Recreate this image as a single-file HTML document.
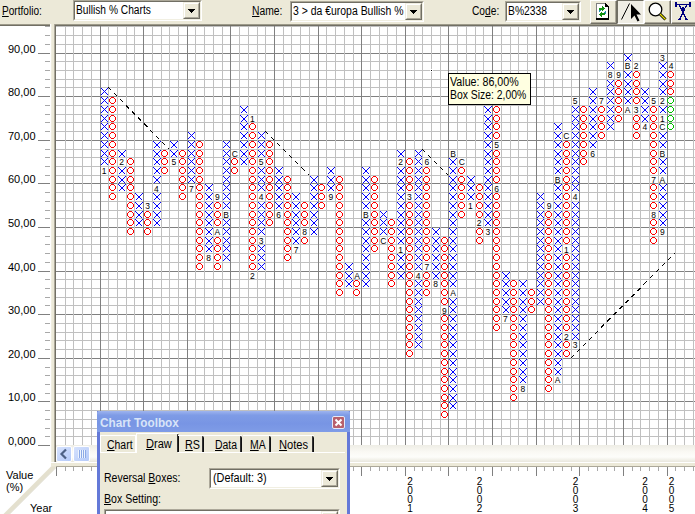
<!DOCTYPE html>
<html><head><meta charset="utf-8">
<style>
*{box-sizing:border-box}
html,body{margin:0;padding:0}
body{width:695px;height:514px;overflow:hidden;position:relative;background:#ECE9D8;font-family:"Liberation Sans",sans-serif;font-size:11px;color:#000}
.a{position:absolute}
.lbl{position:absolute;font-size:12px;line-height:14px;white-space:nowrap;transform-origin:0 0}
.s11{font-size:11px;line-height:13px}
.u{text-decoration:underline}
.combo{position:absolute;background:#fff;border-top:1px solid #ACA899;border-left:1px solid #ACA899;border-right:1px solid #fff;border-bottom:1px solid #fff}
.combo .in{position:absolute;left:0;top:0;right:0;bottom:0;border-top:1px solid #716F64;border-left:1px solid #716F64;border-right:1px solid #F1EFE2;border-bottom:1px solid #F1EFE2}
.combo .txt{position:absolute;left:2px;top:2px;font-size:12px;line-height:14px;white-space:nowrap;transform-origin:0 0}
.dbtn{position:absolute;top:0;right:0;width:17px;bottom:0;background:#ECE9D8;border-top:1px solid #F1EFE2;border-left:1px solid #F1EFE2;border-right:1px solid #716F64;border-bottom:1px solid #716F64}
.dbtn .in2{position:absolute;left:0;top:0;right:0;bottom:0;border-top:1px solid #fff;border-left:1px solid #fff;border-right:1px solid #ACA899;border-bottom:1px solid #ACA899}
.tri{position:absolute;width:0;height:0;border-left:3.5px solid transparent;border-right:3.5px solid transparent;border-top:4px solid #000}
.tb{position:absolute;top:0;height:24px;background:#ECE9D8;border-left:1px solid #fff;border-top:1px solid #fff;border-right:1px solid #716F64;border-bottom:1px solid #716F64}
.tb .in3{position:absolute;left:0;top:0;right:0;bottom:0;border-right:1px solid #ACA899;border-bottom:1px solid #ACA899}
svg{position:absolute;left:0;top:0}
</style></head><body>
<!-- toolbar -->
<div class="a" style="left:0;top:0;width:695px;height:24px;background:#ECE9D8"></div>
<div class="a" style="left:0;top:24px;width:695px;height:1px;background:#9D9A8A"></div>
<div class="a" style="left:0;top:25px;width:695px;height:1px;background:#716F64"></div>

<div class="lbl" style="left:2px;top:4px;transform:scaleX(0.84)"><span class="u">P</span>ortfolio:</div>
<div class="combo" style="left:73px;top:0;width:129px;height:21px"><div class="in"></div>
 <div class="txt" style="transform:scaleX(0.85)">Bullish % Charts</div>
 <div class="dbtn" style="top:1px;right:1px;bottom:1px;width:17px"><div class="in2"></div><svg width="9" height="6" style="left:4px;top:6px"><path d="M0 0h7v1h-1v1h-1v1h-1v1h-1v-1h-1v-1h-1v-1h-1z" fill="#000" shape-rendering="crispEdges"/></svg></div>
</div>
<div class="lbl" style="left:252px;top:4px;transform:scaleX(0.86)"><span class="u">N</span>ame:</div>
<div class="combo" style="left:290px;top:1px;width:134px;height:21px"><div class="in"></div>
 <div class="txt" style="transform:scaleX(0.87)">3 &gt; da €uropa Bullish %</div>
 <div class="dbtn" style="top:1px;right:1px;bottom:1px;width:17px"><div class="in2"></div><svg width="9" height="6" style="left:4px;top:6px"><path d="M0 0h7v1h-1v1h-1v1h-1v1h-1v-1h-1v-1h-1v-1h-1z" fill="#000" shape-rendering="crispEdges"/></svg></div>
</div>
<div class="lbl" style="left:472px;top:4px;transform:scaleX(0.85)">Co<span class="u">d</span>e:</div>
<div class="combo" style="left:505px;top:1px;width:76px;height:21px"><div class="in"></div>
 <div class="txt" style="transform:scaleX(0.86)">B%2338</div>
 <div class="dbtn" style="top:1px;right:1px;bottom:1px;width:17px"><div class="in2"></div><svg width="9" height="6" style="left:4px;top:6px"><path d="M0 0h7v1h-1v1h-1v1h-1v1h-1v-1h-1v-1h-1v-1h-1z" fill="#000" shape-rendering="crispEdges"/></svg></div>
</div>

<!-- toolbar buttons -->
<div class="tb" style="left:590px;width:27px"><div class="in3"></div>
 <svg width="27" height="24" style="left:-1px;top:-1px" shape-rendering="crispEdges">
  <path d="M6 3h9v3h3v13h-12z" fill="#fff"/>
  <path d="M6 3h9v1h-9zM6 4h1v14h-1z" fill="#808080"/>
  <path d="M15 3h1v1h1v1h1v1h1v14h-1v-13h-3zM6 18h13v2h-13z" fill="#000"/>
  <path d="M12 6h1v1h-1zM12 7h1v1h-1zM12 8h1v1h-1zM12 9h1v1h-1zM12 10h1v1h-1zM13 7h1v1h-1zM13 8h1v1h-1zM13 9h1v1h-1zM14 8h1v1h-1zM9 8h1v1h-1zM10 8h1v1h-1zM11 8h1v1h-1zM9 9h1v1h-1zM10 9h1v1h-1zM11 9h1v1h-1zM11 12h1v1h-1zM11 13h1v1h-1zM11 14h1v1h-1zM11 15h1v1h-1zM11 16h1v1h-1zM10 13h1v1h-1zM10 14h1v1h-1zM10 15h1v1h-1zM9 14h1v1h-1zM12 13h1v1h-1zM13 13h1v1h-1zM14 13h1v1h-1zM12 14h1v1h-1zM13 14h1v1h-1zM14 14h1v1h-1z" fill="#109010"/>
  <path d="M9 10h1v1h-1zM9 11h1v1h-1zM10 10h1v1h-1zM15 11h1v1h-1zM15 12h1v1h-1zM15 13h1v1h-1zM14 12h1v1h-1z" fill="#2090A8"/>
 </svg>
</div>
<div class="a" style="left:617px;top:0;width:27px;height:24px;background:#EFEDE4;border-left:1px solid #716F64;border-top:1px solid #716F64;border-right:1px solid #fff;border-bottom:1px solid #fff">
 <svg width="27" height="24" style="left:-1px;top:-1px">
  <path d="M4.5 19.5L12.5 3.5" stroke="#000" stroke-width="1"/>
  <path d="M14 4V19L17.5 15.5L20.5 21.5L22.5 20.5L19.5 14.5H24Z" fill="#000"/>
 </svg>
</div>
<div class="tb" style="left:644px;width:27px"><div class="in3"></div>
 <svg width="27" height="24" style="left:0;top:0">
  <circle cx="10.5" cy="8.5" r="6.3" fill="#fff" stroke="#000" stroke-width="1.3"/>
  <path d="M15 13L20.5 18.5" stroke="#000" stroke-width="3"/>
  <path d="M15 13L20.5 18.5" stroke="#e8e000" stroke-width="1.3"/>
 </svg>
</div>
<div class="tb" style="left:671px;width:26px"><div class="in3"></div>
 <svg width="26" height="24" style="left:-1px;top:-1px"><path d="M4 2h2v1h-2zM18 2h2v1h-2zM4 3h2v1h-2zM18 3h2v1h-2zM4 4h16v1h-16zM4 5h2v1h-2zM8 5h1v1h-1zM15 5h1v1h-1zM18 5h2v1h-2zM4 6h2v1h-2zM8 6h2v1h-2zM14 6h2v1h-2zM18 6h2v1h-2zM9 7h1v1h-1zM11 7h2v1h-2zM14 7h1v1h-1zM9 8h5v1h-5zM10 9h4v1h-4zM10 10h4v1h-4zM11 11h2v1h-2zM11 12h2v1h-2zM11 13h2v1h-2zM10 14h4v1h-4zM10 15h1v1h-1zM13 15h1v1h-1zM9 16h2v1h-2zM13 16h2v1h-2zM9 17h1v1h-1zM14 17h1v1h-1zM8 18h2v1h-2zM14 18h2v1h-2zM7 19h3v1h-3zM14 19h3v1h-3z" fill="#000080" shape-rendering="crispEdges"/></svg>
</div>

<!-- left axis panel -->
<div class="a" style="left:0;top:26px;width:50px;height:436px;background:#fff"></div>
<svg width="695" height="514"><path d="M38 445.5H50 M38 401.5H50 M38 358.5H50 M38 314.5H50 M38 271.5H50 M38 227.5H50 M38 183.5H50 M38 140.5H50 M38 96.5H50 M38 53.5H50" stroke="#808080" stroke-width="1" shape-rendering="crispEdges"/>
<path d="M45 436.5H50 M45 428.5H50 M45 419.5H50 M45 410.5H50 M45 393.5H50 M45 384.5H50 M45 375.5H50 M45 367.5H50 M45 349.5H50 M45 340.5H50 M45 332.5H50 M45 323.5H50 M45 305.5H50 M45 297.5H50 M45 288.5H50 M45 279.5H50 M45 262.5H50 M45 253.5H50 M45 244.5H50 M45 236.5H50 M45 218.5H50 M45 210.5H50 M45 201.5H50 M45 192.5H50 M45 175.5H50 M45 166.5H50 M45 157.5H50 M45 149.5H50 M45 131.5H50 M45 122.5H50 M45 114.5H50 M45 105.5H50 M45 87.5H50 M45 79.5H50 M45 70.5H50 M45 61.5H50 M45 44.5H50 M45 35.5H50 M45 26.5H50" stroke="#a8a8a8" stroke-width="1" shape-rendering="crispEdges"/>
<g font-family='"Liberation Sans", sans-serif' font-size="11" fill="#000" text-anchor="end"><text x="35.5" y="401">10,00</text><text x="35.5" y="358">20,00</text><text x="35.5" y="314">30,00</text><text x="35.5" y="271">40,00</text><text x="35.5" y="227">50,00</text><text x="35.5" y="183">60,00</text><text x="35.5" y="140">70,00</text><text x="35.5" y="96">80,00</text><text x="35.5" y="53">90,00</text><text x="35.5" y="445">0,000</text></g></svg>

<!-- chart -->
<svg width="695" height="514"><rect x="56" y="26" width="639" height="419" fill="#fff"/>
<path d="M56 436.5H695 M56 428.5H695 M56 419.5H695 M56 410.5H695 M56 393.5H695 M56 384.5H695 M56 375.5H695 M56 367.5H695 M56 349.5H695 M56 340.5H695 M56 332.5H695 M56 323.5H695 M56 305.5H695 M56 297.5H695 M56 288.5H695 M56 279.5H695 M56 262.5H695 M56 253.5H695 M56 244.5H695 M56 236.5H695 M56 218.5H695 M56 210.5H695 M56 201.5H695 M56 192.5H695 M56 175.5H695 M56 166.5H695 M56 157.5H695 M56 149.5H695 M56 131.5H695 M56 122.5H695 M56 114.5H695 M56 105.5H695 M56 87.5H695 M56 79.5H695 M56 70.5H695 M56 61.5H695 M56 44.5H695 M56 35.5H695 M56 26.5H695" stroke="#c0c0c0" stroke-width="1" fill="none" shape-rendering="crispEdges"/>
<path d="M56 445.5H695 M56 401.5H695 M56 358.5H695 M56 314.5H695 M56 271.5H695 M56 227.5H695 M56 183.5H695 M56 140.5H695 M56 96.5H695 M56 53.5H695" stroke="#808080" stroke-width="1" fill="none" shape-rendering="crispEdges"/>
<path d="M65.5 26V445 M73.5 26V445 M82.5 26V445 M91.5 26V445 M108.5 26V445 M117.5 26V445 M126.5 26V445 M134.5 26V445 M152.5 26V445 M161.5 26V445 M169.5 26V445 M178.5 26V445 M195.5 26V445 M204.5 26V445 M213.5 26V445 M222.5 26V445 M239.5 26V445 M248.5 26V445 M257.5 26V445 M265.5 26V445 M283.5 26V445 M291.5 26V445 M300.5 26V445 M309.5 26V445 M326.5 26V445 M335.5 26V445 M344.5 26V445 M353.5 26V445 M370.5 26V445 M379.5 26V445 M387.5 26V445 M396.5 26V445 M414.5 26V445 M422.5 26V445 M431.5 26V445 M440.5 26V445 M457.5 26V445 M466.5 26V445 M475.5 26V445 M483.5 26V445 M501.5 26V445 M510.5 26V445 M518.5 26V445 M527.5 26V445 M544.5 26V445 M553.5 26V445 M562.5 26V445 M571.5 26V445 M588.5 26V445 M597.5 26V445 M606.5 26V445 M614.5 26V445 M632.5 26V445 M640.5 26V445 M649.5 26V445 M658.5 26V445 M675.5 26V445 M684.5 26V445 M693.5 26V445" stroke="#c0c0c0" stroke-width="1" fill="none" shape-rendering="crispEdges"/>
<path d="M100.5 26V445 M143.5 26V445 M187.5 26V445 M230.5 26V445 M274.5 26V445 M318.5 26V445 M361.5 26V445 M405.5 26V445 M448.5 26V445 M492.5 26V445 M536.5 26V445 M579.5 26V445 M623.5 26V445 M667.5 26V445" stroke="#808080" stroke-width="1" fill="none" shape-rendering="crispEdges"/>
<path d="M106 159h1v1h-1zM102 159h1v1h-1zM103 162h1v1h-1zM104 161h1v1h-1zM101 158h1v1h-1zM101 164h1v1h-1zM107 158h1v1h-1zM107 164h1v1h-1zM105 160h1v1h-1zM106 163h1v1h-1zM103 160h1v1h-1zM102 163h1v1h-1zM105 162h1v1h-1zM106 155h1v1h-1zM105 152h1v1h-1zM103 152h1v1h-1zM102 155h1v1h-1zM106 151h1v1h-1zM105 154h1v1h-1zM102 151h1v1h-1zM104 153h1v1h-1zM101 150h1v1h-1zM107 150h1v1h-1zM103 154h1v1h-1zM101 156h1v1h-1zM107 156h1v1h-1zM103 143h1v1h-1zM102 146h1v1h-1zM106 142h1v1h-1zM105 145h1v1h-1zM102 142h1v1h-1zM103 145h1v1h-1zM104 144h1v1h-1zM101 141h1v1h-1zM107 141h1v1h-1zM105 143h1v1h-1zM107 147h1v1h-1zM101 147h1v1h-1zM106 146h1v1h-1zM106 133h1v1h-1zM102 133h1v1h-1zM103 136h1v1h-1zM104 135h1v1h-1zM101 132h1v1h-1zM101 138h1v1h-1zM107 132h1v1h-1zM107 138h1v1h-1zM105 134h1v1h-1zM106 137h1v1h-1zM103 134h1v1h-1zM102 137h1v1h-1zM105 136h1v1h-1zM103 127h1v1h-1zM104 126h1v1h-1zM101 123h1v1h-1zM101 129h1v1h-1zM107 123h1v1h-1zM107 129h1v1h-1zM106 124h1v1h-1zM105 125h1v1h-1zM106 128h1v1h-1zM103 125h1v1h-1zM102 128h1v1h-1zM105 127h1v1h-1zM102 124h1v1h-1zM106 120h1v1h-1zM103 117h1v1h-1zM102 120h1v1h-1zM106 116h1v1h-1zM105 119h1v1h-1zM102 116h1v1h-1zM103 119h1v1h-1zM104 118h1v1h-1zM101 121h1v1h-1zM101 115h1v1h-1zM107 115h1v1h-1zM105 117h1v1h-1zM107 121h1v1h-1zM102 111h1v1h-1zM105 110h1v1h-1zM106 107h1v1h-1zM102 107h1v1h-1zM103 110h1v1h-1zM104 109h1v1h-1zM101 106h1v1h-1zM101 112h1v1h-1zM107 106h1v1h-1zM107 112h1v1h-1zM105 108h1v1h-1zM106 111h1v1h-1zM103 108h1v1h-1zM103 101h1v1h-1zM104 100h1v1h-1zM101 97h1v1h-1zM101 103h1v1h-1zM107 97h1v1h-1zM107 103h1v1h-1zM106 98h1v1h-1zM105 99h1v1h-1zM106 102h1v1h-1zM103 99h1v1h-1zM102 102h1v1h-1zM105 101h1v1h-1zM102 98h1v1h-1zM103 92h1v1h-1zM101 88h1v1h-1zM101 94h1v1h-1zM107 88h1v1h-1zM107 94h1v1h-1zM106 93h1v1h-1zM105 90h1v1h-1zM102 93h1v1h-1zM106 89h1v1h-1zM103 90h1v1h-1zM105 92h1v1h-1zM102 89h1v1h-1zM104 91h1v1h-1zM121 187h1v1h-1zM118 184h1v1h-1zM122 188h1v1h-1zM120 186h1v1h-1zM124 190h1v1h-1zM119 190h1v1h-1zM120 189h1v1h-1zM123 186h1v1h-1zM123 189h1v1h-1zM122 187h1v1h-1zM121 188h1v1h-1zM124 185h1v1h-1zM119 185h1v1h-1zM125 184h1v1h-1zM123 181h1v1h-1zM122 179h1v1h-1zM125 176h1v1h-1zM121 180h1v1h-1zM124 177h1v1h-1zM119 177h1v1h-1zM121 179h1v1h-1zM118 176h1v1h-1zM122 180h1v1h-1zM124 182h1v1h-1zM120 181h1v1h-1zM120 178h1v1h-1zM123 178h1v1h-1zM119 182h1v1h-1zM125 167h1v1h-1zM121 171h1v1h-1zM124 168h1v1h-1zM119 168h1v1h-1zM121 170h1v1h-1zM118 167h1v1h-1zM122 171h1v1h-1zM120 169h1v1h-1zM120 172h1v1h-1zM123 169h1v1h-1zM119 173h1v1h-1zM124 173h1v1h-1zM123 172h1v1h-1zM122 170h1v1h-1zM120 152h1v1h-1zM123 152h1v1h-1zM124 156h1v1h-1zM119 156h1v1h-1zM123 155h1v1h-1zM122 153h1v1h-1zM125 150h1v1h-1zM121 154h1v1h-1zM124 151h1v1h-1zM119 151h1v1h-1zM121 153h1v1h-1zM118 150h1v1h-1zM122 154h1v1h-1zM120 155h1v1h-1zM142 219h1v1h-1zM138 223h1v1h-1zM141 220h1v1h-1zM136 220h1v1h-1zM138 222h1v1h-1zM135 219h1v1h-1zM139 222h1v1h-1zM137 221h1v1h-1zM137 224h1v1h-1zM140 221h1v1h-1zM141 225h1v1h-1zM136 225h1v1h-1zM140 224h1v1h-1zM139 223h1v1h-1zM137 213h1v1h-1zM141 217h1v1h-1zM136 217h1v1h-1zM137 216h1v1h-1zM140 216h1v1h-1zM140 213h1v1h-1zM138 215h1v1h-1zM139 215h1v1h-1zM139 214h1v1h-1zM141 212h1v1h-1zM136 212h1v1h-1zM142 211h1v1h-1zM138 214h1v1h-1zM135 211h1v1h-1zM140 207h1v1h-1zM142 202h1v1h-1zM138 206h1v1h-1zM139 206h1v1h-1zM141 203h1v1h-1zM136 203h1v1h-1zM138 205h1v1h-1zM135 202h1v1h-1zM139 205h1v1h-1zM137 207h1v1h-1zM141 208h1v1h-1zM137 204h1v1h-1zM140 204h1v1h-1zM136 208h1v1h-1zM139 197h1v1h-1zM141 199h1v1h-1zM142 193h1v1h-1zM141 194h1v1h-1zM136 194h1v1h-1zM138 196h1v1h-1zM135 193h1v1h-1zM139 196h1v1h-1zM137 195h1v1h-1zM136 199h1v1h-1zM137 198h1v1h-1zM140 195h1v1h-1zM140 198h1v1h-1zM138 197h1v1h-1zM153 219h1v1h-1zM157 223h1v1h-1zM160 219h1v1h-1zM158 221h1v1h-1zM159 225h1v1h-1zM156 222h1v1h-1zM154 225h1v1h-1zM158 224h1v1h-1zM157 222h1v1h-1zM155 221h1v1h-1zM155 224h1v1h-1zM159 220h1v1h-1zM154 220h1v1h-1zM156 223h1v1h-1zM155 216h1v1h-1zM155 213h1v1h-1zM159 212h1v1h-1zM154 212h1v1h-1zM160 211h1v1h-1zM156 215h1v1h-1zM153 211h1v1h-1zM157 215h1v1h-1zM159 217h1v1h-1zM154 217h1v1h-1zM156 214h1v1h-1zM158 216h1v1h-1zM157 214h1v1h-1zM158 213h1v1h-1zM159 203h1v1h-1zM154 203h1v1h-1zM153 202h1v1h-1zM160 202h1v1h-1zM156 206h1v1h-1zM158 207h1v1h-1zM157 206h1v1h-1zM159 208h1v1h-1zM154 208h1v1h-1zM156 205h1v1h-1zM158 204h1v1h-1zM157 205h1v1h-1zM155 204h1v1h-1zM155 207h1v1h-1zM154 194h1v1h-1zM156 197h1v1h-1zM153 193h1v1h-1zM157 197h1v1h-1zM160 193h1v1h-1zM158 195h1v1h-1zM159 199h1v1h-1zM156 196h1v1h-1zM154 199h1v1h-1zM158 198h1v1h-1zM157 196h1v1h-1zM155 195h1v1h-1zM155 198h1v1h-1zM159 194h1v1h-1zM155 181h1v1h-1zM159 177h1v1h-1zM154 177h1v1h-1zM153 176h1v1h-1zM158 178h1v1h-1zM157 180h1v1h-1zM160 176h1v1h-1zM156 180h1v1h-1zM159 182h1v1h-1zM154 182h1v1h-1zM156 179h1v1h-1zM158 181h1v1h-1zM157 179h1v1h-1zM155 178h1v1h-1zM159 168h1v1h-1zM154 168h1v1h-1zM156 171h1v1h-1zM153 167h1v1h-1zM157 171h1v1h-1zM160 167h1v1h-1zM158 169h1v1h-1zM159 173h1v1h-1zM156 170h1v1h-1zM154 173h1v1h-1zM158 172h1v1h-1zM157 170h1v1h-1zM155 169h1v1h-1zM155 172h1v1h-1zM156 162h1v1h-1zM153 158h1v1h-1zM157 162h1v1h-1zM159 164h1v1h-1zM160 158h1v1h-1zM154 164h1v1h-1zM158 160h1v1h-1zM156 161h1v1h-1zM158 163h1v1h-1zM157 161h1v1h-1zM155 160h1v1h-1zM155 163h1v1h-1zM159 159h1v1h-1zM154 159h1v1h-1zM155 152h1v1h-1zM159 156h1v1h-1zM155 155h1v1h-1zM159 151h1v1h-1zM154 151h1v1h-1zM153 150h1v1h-1zM157 154h1v1h-1zM160 150h1v1h-1zM156 154h1v1h-1zM158 152h1v1h-1zM154 156h1v1h-1zM156 153h1v1h-1zM158 155h1v1h-1zM157 153h1v1h-1zM159 142h1v1h-1zM154 142h1v1h-1zM156 145h1v1h-1zM153 141h1v1h-1zM157 145h1v1h-1zM160 141h1v1h-1zM158 143h1v1h-1zM159 147h1v1h-1zM156 144h1v1h-1zM154 147h1v1h-1zM158 146h1v1h-1zM157 144h1v1h-1zM155 143h1v1h-1zM155 146h1v1h-1zM174 153h1v1h-1zM172 152h1v1h-1zM172 155h1v1h-1zM176 151h1v1h-1zM171 151h1v1h-1zM173 154h1v1h-1zM170 150h1v1h-1zM174 154h1v1h-1zM177 150h1v1h-1zM176 156h1v1h-1zM175 152h1v1h-1zM171 156h1v1h-1zM173 153h1v1h-1zM175 155h1v1h-1zM172 146h1v1h-1zM176 142h1v1h-1zM171 142h1v1h-1zM173 145h1v1h-1zM170 141h1v1h-1zM174 145h1v1h-1zM176 147h1v1h-1zM177 141h1v1h-1zM171 147h1v1h-1zM175 143h1v1h-1zM173 144h1v1h-1zM175 146h1v1h-1zM174 144h1v1h-1zM172 143h1v1h-1zM190 178h1v1h-1zM189 181h1v1h-1zM192 180h1v1h-1zM189 177h1v1h-1zM190 180h1v1h-1zM191 179h1v1h-1zM193 181h1v1h-1zM193 177h1v1h-1zM188 176h1v1h-1zM194 176h1v1h-1zM192 178h1v1h-1zM188 182h1v1h-1zM194 182h1v1h-1zM192 171h1v1h-1zM189 168h1v1h-1zM190 171h1v1h-1zM193 172h1v1h-1zM191 170h1v1h-1zM193 168h1v1h-1zM188 167h1v1h-1zM194 167h1v1h-1zM194 173h1v1h-1zM188 173h1v1h-1zM192 169h1v1h-1zM190 169h1v1h-1zM189 172h1v1h-1zM190 162h1v1h-1zM191 161h1v1h-1zM193 159h1v1h-1zM188 158h1v1h-1zM194 158h1v1h-1zM194 164h1v1h-1zM188 164h1v1h-1zM192 160h1v1h-1zM190 160h1v1h-1zM189 163h1v1h-1zM192 162h1v1h-1zM189 159h1v1h-1zM193 163h1v1h-1zM190 152h1v1h-1zM189 155h1v1h-1zM192 154h1v1h-1zM189 151h1v1h-1zM190 154h1v1h-1zM191 153h1v1h-1zM193 155h1v1h-1zM193 151h1v1h-1zM188 150h1v1h-1zM194 150h1v1h-1zM192 152h1v1h-1zM188 156h1v1h-1zM194 156h1v1h-1zM190 143h1v1h-1zM189 146h1v1h-1zM192 145h1v1h-1zM189 142h1v1h-1zM190 145h1v1h-1zM193 146h1v1h-1zM191 144h1v1h-1zM193 142h1v1h-1zM188 141h1v1h-1zM194 141h1v1h-1zM194 147h1v1h-1zM188 147h1v1h-1zM192 143h1v1h-1zM189 133h1v1h-1zM193 137h1v1h-1zM190 136h1v1h-1zM191 135h1v1h-1zM193 133h1v1h-1zM188 132h1v1h-1zM194 132h1v1h-1zM194 138h1v1h-1zM188 138h1v1h-1zM192 134h1v1h-1zM190 134h1v1h-1zM189 137h1v1h-1zM192 136h1v1h-1zM208 248h1v1h-1zM207 250h1v1h-1zM209 248h1v1h-1zM211 251h1v1h-1zM206 251h1v1h-1zM212 245h1v1h-1zM210 247h1v1h-1zM210 250h1v1h-1zM208 249h1v1h-1zM207 247h1v1h-1zM205 245h1v1h-1zM209 249h1v1h-1zM211 246h1v1h-1zM206 246h1v1h-1zM210 242h1v1h-1zM211 243h1v1h-1zM207 239h1v1h-1zM207 242h1v1h-1zM208 241h1v1h-1zM205 237h1v1h-1zM209 241h1v1h-1zM211 238h1v1h-1zM206 238h1v1h-1zM208 240h1v1h-1zM209 240h1v1h-1zM212 237h1v1h-1zM210 239h1v1h-1zM206 243h1v1h-1zM205 228h1v1h-1zM209 232h1v1h-1zM207 233h1v1h-1zM208 232h1v1h-1zM211 229h1v1h-1zM206 229h1v1h-1zM211 234h1v1h-1zM208 231h1v1h-1zM209 231h1v1h-1zM212 228h1v1h-1zM210 230h1v1h-1zM206 234h1v1h-1zM210 233h1v1h-1zM207 230h1v1h-1zM208 222h1v1h-1zM209 222h1v1h-1zM211 225h1v1h-1zM206 225h1v1h-1zM212 219h1v1h-1zM207 224h1v1h-1zM210 221h1v1h-1zM210 224h1v1h-1zM208 223h1v1h-1zM207 221h1v1h-1zM205 219h1v1h-1zM209 223h1v1h-1zM211 220h1v1h-1zM206 220h1v1h-1zM210 213h1v1h-1zM211 217h1v1h-1zM206 217h1v1h-1zM210 216h1v1h-1zM207 213h1v1h-1zM207 216h1v1h-1zM208 215h1v1h-1zM205 211h1v1h-1zM209 215h1v1h-1zM211 212h1v1h-1zM206 212h1v1h-1zM208 214h1v1h-1zM209 214h1v1h-1zM212 211h1v1h-1zM208 206h1v1h-1zM207 204h1v1h-1zM205 202h1v1h-1zM209 206h1v1h-1zM207 207h1v1h-1zM211 203h1v1h-1zM206 203h1v1h-1zM208 205h1v1h-1zM209 205h1v1h-1zM206 208h1v1h-1zM212 202h1v1h-1zM210 204h1v1h-1zM211 208h1v1h-1zM210 207h1v1h-1zM211 194h1v1h-1zM206 194h1v1h-1zM207 198h1v1h-1zM208 196h1v1h-1zM209 196h1v1h-1zM211 199h1v1h-1zM206 199h1v1h-1zM212 193h1v1h-1zM210 195h1v1h-1zM210 198h1v1h-1zM208 197h1v1h-1zM207 195h1v1h-1zM205 193h1v1h-1zM209 197h1v1h-1zM209 187h1v1h-1zM208 187h1v1h-1zM211 190h1v1h-1zM206 190h1v1h-1zM212 184h1v1h-1zM210 186h1v1h-1zM210 189h1v1h-1zM207 189h1v1h-1zM208 188h1v1h-1zM207 186h1v1h-1zM205 184h1v1h-1zM209 188h1v1h-1zM211 185h1v1h-1zM206 185h1v1h-1zM227 258h1v1h-1zM229 254h1v1h-1zM228 255h1v1h-1zM229 260h1v1h-1zM226 257h1v1h-1zM223 254h1v1h-1zM225 258h1v1h-1zM225 256h1v1h-1zM224 259h1v1h-1zM223 260h1v1h-1zM227 256h1v1h-1zM224 255h1v1h-1zM228 259h1v1h-1zM226 248h1v1h-1zM223 245h1v1h-1zM223 251h1v1h-1zM225 247h1v1h-1zM224 250h1v1h-1zM229 251h1v1h-1zM227 247h1v1h-1zM224 246h1v1h-1zM228 250h1v1h-1zM228 246h1v1h-1zM227 249h1v1h-1zM229 245h1v1h-1zM225 249h1v1h-1zM223 243h1v1h-1zM224 238h1v1h-1zM228 242h1v1h-1zM229 237h1v1h-1zM225 241h1v1h-1zM228 238h1v1h-1zM227 241h1v1h-1zM229 243h1v1h-1zM226 240h1v1h-1zM223 237h1v1h-1zM225 239h1v1h-1zM224 242h1v1h-1zM227 239h1v1h-1zM224 229h1v1h-1zM225 232h1v1h-1zM228 233h1v1h-1zM227 232h1v1h-1zM229 228h1v1h-1zM228 229h1v1h-1zM229 234h1v1h-1zM226 231h1v1h-1zM223 228h1v1h-1zM223 234h1v1h-1zM225 230h1v1h-1zM224 233h1v1h-1zM227 230h1v1h-1zM227 223h1v1h-1zM229 219h1v1h-1zM229 225h1v1h-1zM226 222h1v1h-1zM225 223h1v1h-1zM223 219h1v1h-1zM223 225h1v1h-1zM225 221h1v1h-1zM224 224h1v1h-1zM227 221h1v1h-1zM224 220h1v1h-1zM228 224h1v1h-1zM228 220h1v1h-1zM224 203h1v1h-1zM225 206h1v1h-1zM228 207h1v1h-1zM227 206h1v1h-1zM229 202h1v1h-1zM228 203h1v1h-1zM229 208h1v1h-1zM226 205h1v1h-1zM223 202h1v1h-1zM223 208h1v1h-1zM225 204h1v1h-1zM224 207h1v1h-1zM227 204h1v1h-1zM228 194h1v1h-1zM227 197h1v1h-1zM229 193h1v1h-1zM225 197h1v1h-1zM229 199h1v1h-1zM226 196h1v1h-1zM223 193h1v1h-1zM223 199h1v1h-1zM225 195h1v1h-1zM224 198h1v1h-1zM227 195h1v1h-1zM224 194h1v1h-1zM228 198h1v1h-1zM229 190h1v1h-1zM226 187h1v1h-1zM223 184h1v1h-1zM223 190h1v1h-1zM225 186h1v1h-1zM224 189h1v1h-1zM224 185h1v1h-1zM227 186h1v1h-1zM228 189h1v1h-1zM225 188h1v1h-1zM228 185h1v1h-1zM227 188h1v1h-1zM229 184h1v1h-1zM227 178h1v1h-1zM224 177h1v1h-1zM225 180h1v1h-1zM228 181h1v1h-1zM227 180h1v1h-1zM229 176h1v1h-1zM228 177h1v1h-1zM229 182h1v1h-1zM226 179h1v1h-1zM223 176h1v1h-1zM223 182h1v1h-1zM225 178h1v1h-1zM224 181h1v1h-1zM225 171h1v1h-1zM228 172h1v1h-1zM228 168h1v1h-1zM227 171h1v1h-1zM229 167h1v1h-1zM229 173h1v1h-1zM226 170h1v1h-1zM223 167h1v1h-1zM223 173h1v1h-1zM225 169h1v1h-1zM224 172h1v1h-1zM224 168h1v1h-1zM227 169h1v1h-1zM228 159h1v1h-1zM227 162h1v1h-1zM229 158h1v1h-1zM229 164h1v1h-1zM226 161h1v1h-1zM223 158h1v1h-1zM223 164h1v1h-1zM225 160h1v1h-1zM224 163h1v1h-1zM224 159h1v1h-1zM227 160h1v1h-1zM228 163h1v1h-1zM225 162h1v1h-1zM227 152h1v1h-1zM224 151h1v1h-1zM225 154h1v1h-1zM228 155h1v1h-1zM228 151h1v1h-1zM227 154h1v1h-1zM229 150h1v1h-1zM229 156h1v1h-1zM226 153h1v1h-1zM223 150h1v1h-1zM223 156h1v1h-1zM225 152h1v1h-1zM224 155h1v1h-1zM225 145h1v1h-1zM228 146h1v1h-1zM228 142h1v1h-1zM227 145h1v1h-1zM229 141h1v1h-1zM229 147h1v1h-1zM226 144h1v1h-1zM223 141h1v1h-1zM223 147h1v1h-1zM225 143h1v1h-1zM224 146h1v1h-1zM224 142h1v1h-1zM227 143h1v1h-1zM243 162h1v1h-1zM244 162h1v1h-1zM246 164h1v1h-1zM241 164h1v1h-1zM247 158h1v1h-1zM243 161h1v1h-1zM240 158h1v1h-1zM244 161h1v1h-1zM242 163h1v1h-1zM242 160h1v1h-1zM246 159h1v1h-1zM241 159h1v1h-1zM245 163h1v1h-1zM245 160h1v1h-1zM242 152h1v1h-1zM242 155h1v1h-1zM244 153h1v1h-1zM245 152h1v1h-1zM246 151h1v1h-1zM241 151h1v1h-1zM245 155h1v1h-1zM243 154h1v1h-1zM244 154h1v1h-1zM246 156h1v1h-1zM241 156h1v1h-1zM247 150h1v1h-1zM243 153h1v1h-1zM240 150h1v1h-1zM245 143h1v1h-1zM245 146h1v1h-1zM243 145h1v1h-1zM244 145h1v1h-1zM246 147h1v1h-1zM241 147h1v1h-1zM247 141h1v1h-1zM243 144h1v1h-1zM244 144h1v1h-1zM240 141h1v1h-1zM242 143h1v1h-1zM242 146h1v1h-1zM246 142h1v1h-1zM241 142h1v1h-1zM243 136h1v1h-1zM244 136h1v1h-1zM246 138h1v1h-1zM241 138h1v1h-1zM247 132h1v1h-1zM243 135h1v1h-1zM240 132h1v1h-1zM244 135h1v1h-1zM242 137h1v1h-1zM242 134h1v1h-1zM246 133h1v1h-1zM241 133h1v1h-1zM245 137h1v1h-1zM245 134h1v1h-1zM244 127h1v1h-1zM246 129h1v1h-1zM241 129h1v1h-1zM243 126h1v1h-1zM240 123h1v1h-1zM244 126h1v1h-1zM242 128h1v1h-1zM242 125h1v1h-1zM245 125h1v1h-1zM243 127h1v1h-1zM246 124h1v1h-1zM241 124h1v1h-1zM245 128h1v1h-1zM247 123h1v1h-1zM246 116h1v1h-1zM241 116h1v1h-1zM245 120h1v1h-1zM242 120h1v1h-1zM245 117h1v1h-1zM243 119h1v1h-1zM244 119h1v1h-1zM246 121h1v1h-1zM241 121h1v1h-1zM247 115h1v1h-1zM243 118h1v1h-1zM244 118h1v1h-1zM240 115h1v1h-1zM242 117h1v1h-1zM245 108h1v1h-1zM243 110h1v1h-1zM244 110h1v1h-1zM246 112h1v1h-1zM241 112h1v1h-1zM247 106h1v1h-1zM243 109h1v1h-1zM240 106h1v1h-1zM244 109h1v1h-1zM242 111h1v1h-1zM242 108h1v1h-1zM246 107h1v1h-1zM241 107h1v1h-1zM245 111h1v1h-1zM264 263h1v1h-1zM263 264h1v1h-1zM262 267h1v1h-1zM260 267h1v1h-1zM259 264h1v1h-1zM258 263h1v1h-1zM262 265h1v1h-1zM258 269h1v1h-1zM261 266h1v1h-1zM263 268h1v1h-1zM260 265h1v1h-1zM264 269h1v1h-1zM259 268h1v1h-1zM263 255h1v1h-1zM260 258h1v1h-1zM259 255h1v1h-1zM258 254h1v1h-1zM258 260h1v1h-1zM260 256h1v1h-1zM262 256h1v1h-1zM261 257h1v1h-1zM263 259h1v1h-1zM264 254h1v1h-1zM264 260h1v1h-1zM262 258h1v1h-1zM259 259h1v1h-1zM258 245h1v1h-1zM258 251h1v1h-1zM261 248h1v1h-1zM262 247h1v1h-1zM263 250h1v1h-1zM264 245h1v1h-1zM260 247h1v1h-1zM263 246h1v1h-1zM262 249h1v1h-1zM259 250h1v1h-1zM259 246h1v1h-1zM264 251h1v1h-1zM260 249h1v1h-1zM263 229h1v1h-1zM260 232h1v1h-1zM259 229h1v1h-1zM258 228h1v1h-1zM258 234h1v1h-1zM262 230h1v1h-1zM259 233h1v1h-1zM261 231h1v1h-1zM263 233h1v1h-1zM260 230h1v1h-1zM264 234h1v1h-1zM262 232h1v1h-1zM264 228h1v1h-1zM260 223h1v1h-1zM262 223h1v1h-1zM258 219h1v1h-1zM258 225h1v1h-1zM261 222h1v1h-1zM262 221h1v1h-1zM264 225h1v1h-1zM263 224h1v1h-1zM259 224h1v1h-1zM260 221h1v1h-1zM263 220h1v1h-1zM264 219h1v1h-1zM259 220h1v1h-1zM263 216h1v1h-1zM260 213h1v1h-1zM264 211h1v1h-1zM259 216h1v1h-1zM264 217h1v1h-1zM263 212h1v1h-1zM262 215h1v1h-1zM260 215h1v1h-1zM259 212h1v1h-1zM258 211h1v1h-1zM262 213h1v1h-1zM258 217h1v1h-1zM261 214h1v1h-1zM262 206h1v1h-1zM259 207h1v1h-1zM263 203h1v1h-1zM260 206h1v1h-1zM259 203h1v1h-1zM258 202h1v1h-1zM258 208h1v1h-1zM264 202h1v1h-1zM262 204h1v1h-1zM261 205h1v1h-1zM263 207h1v1h-1zM260 204h1v1h-1zM264 208h1v1h-1zM258 184h1v1h-1zM258 190h1v1h-1zM261 187h1v1h-1zM262 186h1v1h-1zM263 189h1v1h-1zM264 184h1v1h-1zM259 189h1v1h-1zM260 186h1v1h-1zM263 185h1v1h-1zM262 188h1v1h-1zM264 190h1v1h-1zM259 185h1v1h-1zM260 188h1v1h-1zM264 176h1v1h-1zM260 178h1v1h-1zM262 180h1v1h-1zM259 181h1v1h-1zM264 182h1v1h-1zM259 177h1v1h-1zM263 177h1v1h-1zM260 180h1v1h-1zM258 176h1v1h-1zM258 182h1v1h-1zM262 178h1v1h-1zM261 179h1v1h-1zM263 181h1v1h-1zM259 168h1v1h-1zM259 172h1v1h-1zM260 171h1v1h-1zM258 167h1v1h-1zM258 173h1v1h-1zM261 170h1v1h-1zM262 169h1v1h-1zM264 167h1v1h-1zM264 173h1v1h-1zM263 172h1v1h-1zM260 169h1v1h-1zM263 168h1v1h-1zM262 171h1v1h-1zM261 153h1v1h-1zM263 155h1v1h-1zM260 152h1v1h-1zM264 150h1v1h-1zM262 154h1v1h-1zM259 155h1v1h-1zM264 156h1v1h-1zM259 151h1v1h-1zM263 151h1v1h-1zM260 154h1v1h-1zM258 150h1v1h-1zM258 156h1v1h-1zM262 152h1v1h-1zM263 142h1v1h-1zM262 145h1v1h-1zM259 146h1v1h-1zM264 147h1v1h-1zM259 142h1v1h-1zM260 145h1v1h-1zM258 141h1v1h-1zM258 147h1v1h-1zM261 144h1v1h-1zM262 143h1v1h-1zM264 141h1v1h-1zM263 146h1v1h-1zM260 143h1v1h-1zM260 136h1v1h-1zM258 132h1v1h-1zM258 138h1v1h-1zM261 135h1v1h-1zM262 134h1v1h-1zM263 137h1v1h-1zM264 132h1v1h-1zM259 137h1v1h-1zM264 138h1v1h-1zM260 134h1v1h-1zM263 133h1v1h-1zM262 136h1v1h-1zM259 133h1v1h-1zM277 204h1v1h-1zM279 206h1v1h-1zM281 203h1v1h-1zM277 207h1v1h-1zM276 203h1v1h-1zM278 206h1v1h-1zM275 202h1v1h-1zM279 205h1v1h-1zM281 208h1v1h-1zM282 202h1v1h-1zM278 205h1v1h-1zM276 208h1v1h-1zM280 204h1v1h-1zM280 207h1v1h-1zM276 194h1v1h-1zM279 196h1v1h-1zM278 197h1v1h-1zM275 193h1v1h-1zM281 199h1v1h-1zM282 193h1v1h-1zM278 196h1v1h-1zM276 199h1v1h-1zM280 195h1v1h-1zM277 198h1v1h-1zM280 198h1v1h-1zM277 195h1v1h-1zM279 197h1v1h-1zM281 194h1v1h-1zM279 187h1v1h-1zM282 184h1v1h-1zM278 188h1v1h-1zM281 190h1v1h-1zM276 190h1v1h-1zM278 187h1v1h-1zM280 189h1v1h-1zM280 186h1v1h-1zM277 189h1v1h-1zM277 186h1v1h-1zM279 188h1v1h-1zM281 185h1v1h-1zM276 185h1v1h-1zM275 184h1v1h-1zM280 181h1v1h-1zM277 178h1v1h-1zM279 180h1v1h-1zM281 177h1v1h-1zM277 181h1v1h-1zM276 177h1v1h-1zM278 180h1v1h-1zM275 176h1v1h-1zM279 179h1v1h-1zM281 182h1v1h-1zM282 176h1v1h-1zM278 179h1v1h-1zM276 182h1v1h-1zM280 178h1v1h-1zM279 171h1v1h-1zM281 168h1v1h-1zM276 168h1v1h-1zM279 170h1v1h-1zM278 171h1v1h-1zM275 167h1v1h-1zM281 173h1v1h-1zM282 167h1v1h-1zM278 170h1v1h-1zM276 173h1v1h-1zM280 169h1v1h-1zM277 172h1v1h-1zM280 172h1v1h-1zM277 169h1v1h-1zM297 242h1v1h-1zM295 241h1v1h-1zM294 239h1v1h-1zM296 241h1v1h-1zM294 242h1v1h-1zM298 238h1v1h-1zM293 238h1v1h-1zM295 240h1v1h-1zM292 237h1v1h-1zM296 240h1v1h-1zM298 243h1v1h-1zM293 243h1v1h-1zM299 237h1v1h-1zM297 239h1v1h-1zM296 232h1v1h-1zM298 229h1v1h-1zM293 229h1v1h-1zM294 233h1v1h-1zM295 231h1v1h-1zM292 228h1v1h-1zM296 231h1v1h-1zM298 234h1v1h-1zM293 234h1v1h-1zM299 228h1v1h-1zM297 230h1v1h-1zM297 233h1v1h-1zM295 232h1v1h-1zM294 230h1v1h-1zM295 222h1v1h-1zM296 222h1v1h-1zM292 219h1v1h-1zM298 225h1v1h-1zM293 225h1v1h-1zM299 219h1v1h-1zM297 221h1v1h-1zM294 224h1v1h-1zM297 224h1v1h-1zM295 223h1v1h-1zM294 221h1v1h-1zM296 223h1v1h-1zM298 220h1v1h-1zM293 220h1v1h-1zM296 214h1v1h-1zM297 213h1v1h-1zM297 216h1v1h-1zM295 215h1v1h-1zM294 213h1v1h-1zM296 215h1v1h-1zM294 216h1v1h-1zM298 212h1v1h-1zM293 212h1v1h-1zM295 214h1v1h-1zM292 211h1v1h-1zM298 217h1v1h-1zM293 217h1v1h-1zM299 211h1v1h-1zM297 207h1v1h-1zM295 206h1v1h-1zM294 204h1v1h-1zM296 206h1v1h-1zM298 203h1v1h-1zM293 203h1v1h-1zM294 207h1v1h-1zM295 205h1v1h-1zM292 202h1v1h-1zM296 205h1v1h-1zM298 208h1v1h-1zM293 208h1v1h-1zM299 202h1v1h-1zM297 204h1v1h-1zM298 194h1v1h-1zM293 194h1v1h-1zM295 196h1v1h-1zM296 196h1v1h-1zM292 193h1v1h-1zM298 199h1v1h-1zM293 199h1v1h-1zM299 193h1v1h-1zM297 198h1v1h-1zM297 195h1v1h-1zM294 198h1v1h-1zM295 197h1v1h-1zM294 195h1v1h-1zM296 197h1v1h-1zM315 233h1v1h-1zM313 232h1v1h-1zM314 232h1v1h-1zM316 229h1v1h-1zM311 229h1v1h-1zM317 228h1v1h-1zM314 231h1v1h-1zM313 231h1v1h-1zM310 228h1v1h-1zM312 230h1v1h-1zM316 234h1v1h-1zM311 234h1v1h-1zM312 233h1v1h-1zM315 230h1v1h-1zM314 223h1v1h-1zM316 220h1v1h-1zM311 220h1v1h-1zM317 219h1v1h-1zM313 222h1v1h-1zM310 219h1v1h-1zM314 222h1v1h-1zM312 221h1v1h-1zM316 225h1v1h-1zM311 225h1v1h-1zM312 224h1v1h-1zM315 224h1v1h-1zM315 221h1v1h-1zM313 223h1v1h-1zM312 216h1v1h-1zM315 213h1v1h-1zM315 216h1v1h-1zM313 215h1v1h-1zM314 215h1v1h-1zM316 212h1v1h-1zM311 212h1v1h-1zM317 211h1v1h-1zM314 214h1v1h-1zM313 214h1v1h-1zM310 211h1v1h-1zM312 213h1v1h-1zM316 217h1v1h-1zM311 217h1v1h-1zM315 204h1v1h-1zM315 207h1v1h-1zM313 206h1v1h-1zM314 206h1v1h-1zM316 203h1v1h-1zM311 203h1v1h-1zM317 202h1v1h-1zM314 205h1v1h-1zM313 205h1v1h-1zM310 202h1v1h-1zM312 204h1v1h-1zM316 208h1v1h-1zM311 208h1v1h-1zM312 207h1v1h-1zM313 197h1v1h-1zM314 197h1v1h-1zM316 194h1v1h-1zM311 194h1v1h-1zM317 193h1v1h-1zM313 196h1v1h-1zM310 193h1v1h-1zM314 196h1v1h-1zM312 195h1v1h-1zM316 199h1v1h-1zM311 199h1v1h-1zM312 198h1v1h-1zM315 198h1v1h-1zM315 195h1v1h-1zM316 185h1v1h-1zM311 185h1v1h-1zM313 187h1v1h-1zM310 184h1v1h-1zM314 187h1v1h-1zM312 189h1v1h-1zM312 186h1v1h-1zM315 186h1v1h-1zM316 190h1v1h-1zM311 190h1v1h-1zM315 189h1v1h-1zM317 184h1v1h-1zM313 188h1v1h-1zM314 188h1v1h-1zM315 178h1v1h-1zM315 181h1v1h-1zM313 180h1v1h-1zM314 180h1v1h-1zM316 177h1v1h-1zM311 177h1v1h-1zM317 176h1v1h-1zM313 179h1v1h-1zM314 179h1v1h-1zM310 176h1v1h-1zM312 178h1v1h-1zM316 182h1v1h-1zM311 182h1v1h-1zM312 181h1v1h-1zM331 188h1v1h-1zM333 190h1v1h-1zM328 185h1v1h-1zM330 187h1v1h-1zM327 184h1v1h-1zM331 187h1v1h-1zM329 186h1v1h-1zM329 189h1v1h-1zM332 186h1v1h-1zM328 190h1v1h-1zM333 185h1v1h-1zM332 189h1v1h-1zM334 184h1v1h-1zM330 188h1v1h-1zM333 177h1v1h-1zM329 181h1v1h-1zM332 181h1v1h-1zM332 178h1v1h-1zM330 180h1v1h-1zM331 180h1v1h-1zM333 182h1v1h-1zM328 177h1v1h-1zM334 176h1v1h-1zM330 179h1v1h-1zM331 179h1v1h-1zM327 176h1v1h-1zM329 178h1v1h-1zM328 182h1v1h-1zM332 169h1v1h-1zM330 171h1v1h-1zM331 171h1v1h-1zM333 173h1v1h-1zM328 168h1v1h-1zM334 167h1v1h-1zM330 170h1v1h-1zM327 167h1v1h-1zM331 170h1v1h-1zM329 172h1v1h-1zM329 169h1v1h-1zM328 173h1v1h-1zM333 168h1v1h-1zM332 172h1v1h-1zM348 284h1v1h-1zM345 280h1v1h-1zM349 284h1v1h-1zM351 286h1v1h-1zM352 280h1v1h-1zM348 283h1v1h-1zM346 286h1v1h-1zM349 283h1v1h-1zM350 282h1v1h-1zM347 285h1v1h-1zM350 285h1v1h-1zM347 282h1v1h-1zM351 281h1v1h-1zM346 281h1v1h-1zM350 277h1v1h-1zM349 275h1v1h-1zM347 274h1v1h-1zM347 277h1v1h-1zM351 273h1v1h-1zM346 273h1v1h-1zM348 276h1v1h-1zM345 272h1v1h-1zM349 276h1v1h-1zM352 272h1v1h-1zM351 278h1v1h-1zM350 274h1v1h-1zM346 278h1v1h-1zM348 275h1v1h-1zM351 264h1v1h-1zM346 264h1v1h-1zM347 268h1v1h-1zM348 267h1v1h-1zM345 263h1v1h-1zM349 267h1v1h-1zM351 269h1v1h-1zM352 263h1v1h-1zM346 269h1v1h-1zM349 266h1v1h-1zM350 265h1v1h-1zM348 266h1v1h-1zM350 268h1v1h-1zM347 265h1v1h-1zM365 284h1v1h-1zM362 280h1v1h-1zM366 284h1v1h-1zM368 286h1v1h-1zM369 280h1v1h-1zM365 283h1v1h-1zM363 286h1v1h-1zM366 283h1v1h-1zM367 282h1v1h-1zM364 285h1v1h-1zM367 285h1v1h-1zM364 282h1v1h-1zM368 281h1v1h-1zM363 281h1v1h-1zM365 275h1v1h-1zM367 277h1v1h-1zM366 275h1v1h-1zM364 274h1v1h-1zM364 277h1v1h-1zM363 278h1v1h-1zM368 273h1v1h-1zM363 273h1v1h-1zM365 276h1v1h-1zM362 272h1v1h-1zM366 276h1v1h-1zM368 278h1v1h-1zM369 272h1v1h-1zM367 274h1v1h-1zM368 264h1v1h-1zM363 264h1v1h-1zM364 268h1v1h-1zM365 267h1v1h-1zM362 263h1v1h-1zM366 267h1v1h-1zM368 269h1v1h-1zM369 263h1v1h-1zM365 266h1v1h-1zM363 269h1v1h-1zM366 266h1v1h-1zM367 265h1v1h-1zM367 268h1v1h-1zM364 265h1v1h-1zM365 258h1v1h-1zM362 254h1v1h-1zM366 258h1v1h-1zM368 260h1v1h-1zM369 254h1v1h-1zM365 257h1v1h-1zM363 260h1v1h-1zM366 257h1v1h-1zM367 256h1v1h-1zM364 259h1v1h-1zM367 259h1v1h-1zM364 256h1v1h-1zM368 255h1v1h-1zM363 255h1v1h-1zM369 245h1v1h-1zM365 249h1v1h-1zM366 249h1v1h-1zM368 251h1v1h-1zM363 251h1v1h-1zM365 248h1v1h-1zM367 250h1v1h-1zM366 248h1v1h-1zM367 247h1v1h-1zM364 250h1v1h-1zM364 247h1v1h-1zM368 246h1v1h-1zM363 246h1v1h-1zM362 245h1v1h-1zM367 242h1v1h-1zM364 239h1v1h-1zM368 238h1v1h-1zM363 238h1v1h-1zM364 242h1v1h-1zM365 241h1v1h-1zM362 237h1v1h-1zM366 241h1v1h-1zM368 243h1v1h-1zM369 237h1v1h-1zM365 240h1v1h-1zM363 243h1v1h-1zM366 240h1v1h-1zM367 239h1v1h-1zM368 229h1v1h-1zM363 229h1v1h-1zM365 232h1v1h-1zM362 228h1v1h-1zM366 232h1v1h-1zM368 234h1v1h-1zM369 228h1v1h-1zM365 231h1v1h-1zM363 234h1v1h-1zM366 231h1v1h-1zM367 230h1v1h-1zM364 233h1v1h-1zM367 233h1v1h-1zM364 230h1v1h-1zM362 219h1v1h-1zM369 219h1v1h-1zM365 223h1v1h-1zM366 223h1v1h-1zM368 225h1v1h-1zM363 225h1v1h-1zM365 222h1v1h-1zM367 224h1v1h-1zM366 222h1v1h-1zM364 221h1v1h-1zM367 221h1v1h-1zM364 224h1v1h-1zM368 220h1v1h-1zM363 220h1v1h-1zM364 204h1v1h-1zM368 203h1v1h-1zM363 203h1v1h-1zM365 206h1v1h-1zM362 202h1v1h-1zM366 206h1v1h-1zM368 208h1v1h-1zM369 202h1v1h-1zM365 205h1v1h-1zM363 208h1v1h-1zM367 207h1v1h-1zM366 205h1v1h-1zM367 204h1v1h-1zM364 207h1v1h-1zM363 194h1v1h-1zM362 193h1v1h-1zM369 193h1v1h-1zM365 197h1v1h-1zM366 197h1v1h-1zM368 199h1v1h-1zM363 199h1v1h-1zM365 196h1v1h-1zM367 198h1v1h-1zM366 196h1v1h-1zM364 195h1v1h-1zM367 195h1v1h-1zM364 198h1v1h-1zM368 194h1v1h-1zM366 188h1v1h-1zM369 184h1v1h-1zM367 186h1v1h-1zM368 190h1v1h-1zM365 187h1v1h-1zM363 190h1v1h-1zM367 189h1v1h-1zM366 187h1v1h-1zM364 186h1v1h-1zM364 189h1v1h-1zM368 185h1v1h-1zM363 185h1v1h-1zM365 188h1v1h-1zM362 184h1v1h-1zM364 181h1v1h-1zM364 178h1v1h-1zM368 177h1v1h-1zM363 177h1v1h-1zM369 176h1v1h-1zM365 180h1v1h-1zM362 176h1v1h-1zM366 180h1v1h-1zM368 182h1v1h-1zM363 182h1v1h-1zM365 179h1v1h-1zM367 181h1v1h-1zM366 179h1v1h-1zM367 178h1v1h-1zM368 168h1v1h-1zM363 168h1v1h-1zM362 167h1v1h-1zM369 167h1v1h-1zM365 171h1v1h-1zM366 171h1v1h-1zM368 173h1v1h-1zM363 173h1v1h-1zM365 170h1v1h-1zM367 172h1v1h-1zM366 170h1v1h-1zM364 169h1v1h-1zM367 169h1v1h-1zM364 172h1v1h-1zM385 229h1v1h-1zM382 230h1v1h-1zM384 232h1v1h-1zM381 229h1v1h-1zM383 231h1v1h-1zM380 228h1v1h-1zM386 228h1v1h-1zM382 232h1v1h-1zM380 234h1v1h-1zM386 234h1v1h-1zM385 233h1v1h-1zM384 230h1v1h-1zM381 233h1v1h-1zM381 220h1v1h-1zM383 222h1v1h-1zM380 219h1v1h-1zM386 219h1v1h-1zM382 223h1v1h-1zM380 225h1v1h-1zM386 225h1v1h-1zM385 224h1v1h-1zM384 221h1v1h-1zM382 221h1v1h-1zM381 224h1v1h-1zM385 220h1v1h-1zM384 223h1v1h-1zM384 213h1v1h-1zM385 216h1v1h-1zM385 212h1v1h-1zM382 213h1v1h-1zM384 215h1v1h-1zM381 216h1v1h-1zM381 212h1v1h-1zM382 215h1v1h-1zM383 214h1v1h-1zM380 211h1v1h-1zM386 211h1v1h-1zM386 217h1v1h-1zM380 217h1v1h-1zM402 274h1v1h-1zM402 277h1v1h-1zM400 276h1v1h-1zM399 274h1v1h-1zM397 272h1v1h-1zM401 276h1v1h-1zM403 273h1v1h-1zM398 273h1v1h-1zM404 272h1v1h-1zM399 277h1v1h-1zM400 275h1v1h-1zM401 275h1v1h-1zM403 278h1v1h-1zM398 278h1v1h-1zM402 268h1v1h-1zM399 268h1v1h-1zM400 267h1v1h-1zM399 265h1v1h-1zM397 263h1v1h-1zM401 267h1v1h-1zM403 264h1v1h-1zM398 264h1v1h-1zM404 263h1v1h-1zM400 266h1v1h-1zM401 266h1v1h-1zM403 269h1v1h-1zM398 269h1v1h-1zM402 265h1v1h-1zM400 258h1v1h-1zM397 254h1v1h-1zM402 256h1v1h-1zM403 255h1v1h-1zM398 255h1v1h-1zM404 254h1v1h-1zM400 257h1v1h-1zM401 258h1v1h-1zM401 257h1v1h-1zM403 260h1v1h-1zM398 260h1v1h-1zM402 259h1v1h-1zM399 256h1v1h-1zM399 259h1v1h-1zM402 239h1v1h-1zM399 242h1v1h-1zM400 241h1v1h-1zM399 239h1v1h-1zM397 237h1v1h-1zM401 241h1v1h-1zM403 238h1v1h-1zM398 238h1v1h-1zM404 237h1v1h-1zM400 240h1v1h-1zM401 240h1v1h-1zM403 243h1v1h-1zM398 243h1v1h-1zM402 242h1v1h-1zM399 233h1v1h-1zM400 232h1v1h-1zM397 228h1v1h-1zM401 232h1v1h-1zM403 229h1v1h-1zM398 229h1v1h-1zM404 228h1v1h-1zM400 231h1v1h-1zM401 231h1v1h-1zM403 234h1v1h-1zM398 234h1v1h-1zM402 230h1v1h-1zM402 233h1v1h-1zM399 230h1v1h-1zM401 223h1v1h-1zM403 220h1v1h-1zM398 220h1v1h-1zM400 222h1v1h-1zM401 222h1v1h-1zM402 221h1v1h-1zM403 225h1v1h-1zM398 225h1v1h-1zM402 224h1v1h-1zM399 221h1v1h-1zM397 219h1v1h-1zM399 224h1v1h-1zM404 219h1v1h-1zM400 223h1v1h-1zM402 216h1v1h-1zM402 213h1v1h-1zM399 216h1v1h-1zM400 215h1v1h-1zM399 213h1v1h-1zM397 211h1v1h-1zM401 215h1v1h-1zM403 212h1v1h-1zM398 212h1v1h-1zM404 211h1v1h-1zM400 214h1v1h-1zM401 214h1v1h-1zM403 217h1v1h-1zM398 217h1v1h-1zM399 204h1v1h-1zM402 204h1v1h-1zM399 207h1v1h-1zM400 206h1v1h-1zM397 202h1v1h-1zM401 206h1v1h-1zM403 203h1v1h-1zM398 203h1v1h-1zM404 202h1v1h-1zM400 205h1v1h-1zM401 205h1v1h-1zM403 208h1v1h-1zM398 208h1v1h-1zM402 207h1v1h-1zM404 193h1v1h-1zM400 197h1v1h-1zM401 197h1v1h-1zM403 194h1v1h-1zM398 194h1v1h-1zM400 196h1v1h-1zM401 196h1v1h-1zM402 195h1v1h-1zM403 199h1v1h-1zM398 199h1v1h-1zM402 198h1v1h-1zM399 195h1v1h-1zM397 193h1v1h-1zM399 198h1v1h-1zM403 185h1v1h-1zM398 185h1v1h-1zM400 187h1v1h-1zM401 187h1v1h-1zM403 190h1v1h-1zM398 190h1v1h-1zM402 186h1v1h-1zM402 189h1v1h-1zM400 188h1v1h-1zM399 186h1v1h-1zM397 184h1v1h-1zM401 188h1v1h-1zM399 189h1v1h-1zM404 184h1v1h-1zM402 181h1v1h-1zM399 178h1v1h-1zM402 178h1v1h-1zM399 181h1v1h-1zM400 180h1v1h-1zM397 176h1v1h-1zM401 180h1v1h-1zM403 177h1v1h-1zM398 177h1v1h-1zM404 176h1v1h-1zM400 179h1v1h-1zM401 179h1v1h-1zM403 182h1v1h-1zM398 182h1v1h-1zM399 172h1v1h-1zM404 167h1v1h-1zM400 171h1v1h-1zM403 173h1v1h-1zM401 171h1v1h-1zM403 168h1v1h-1zM398 168h1v1h-1zM400 170h1v1h-1zM401 170h1v1h-1zM402 169h1v1h-1zM398 173h1v1h-1zM402 172h1v1h-1zM399 169h1v1h-1zM397 167h1v1h-1zM398 156h1v1h-1zM402 155h1v1h-1zM399 152h1v1h-1zM399 155h1v1h-1zM404 150h1v1h-1zM400 154h1v1h-1zM397 150h1v1h-1zM401 154h1v1h-1zM403 151h1v1h-1zM398 151h1v1h-1zM403 156h1v1h-1zM400 153h1v1h-1zM401 153h1v1h-1zM402 152h1v1h-1zM420 342h1v1h-1zM419 345h1v1h-1zM421 341h1v1h-1zM421 347h1v1h-1zM418 344h1v1h-1zM415 341h1v1h-1zM415 347h1v1h-1zM417 343h1v1h-1zM416 346h1v1h-1zM416 342h1v1h-1zM419 343h1v1h-1zM420 346h1v1h-1zM417 345h1v1h-1zM417 335h1v1h-1zM416 338h1v1h-1zM419 335h1v1h-1zM416 334h1v1h-1zM417 337h1v1h-1zM420 338h1v1h-1zM419 337h1v1h-1zM421 333h1v1h-1zM420 334h1v1h-1zM421 339h1v1h-1zM418 336h1v1h-1zM415 333h1v1h-1zM415 339h1v1h-1zM419 326h1v1h-1zM416 325h1v1h-1zM417 328h1v1h-1zM420 329h1v1h-1zM420 325h1v1h-1zM419 328h1v1h-1zM421 324h1v1h-1zM421 330h1v1h-1zM418 327h1v1h-1zM415 324h1v1h-1zM415 330h1v1h-1zM417 326h1v1h-1zM416 329h1v1h-1zM417 319h1v1h-1zM420 316h1v1h-1zM419 319h1v1h-1zM421 315h1v1h-1zM421 321h1v1h-1zM418 318h1v1h-1zM420 320h1v1h-1zM415 315h1v1h-1zM415 321h1v1h-1zM417 317h1v1h-1zM416 320h1v1h-1zM416 316h1v1h-1zM419 317h1v1h-1zM420 307h1v1h-1zM419 310h1v1h-1zM421 306h1v1h-1zM421 312h1v1h-1zM418 309h1v1h-1zM415 306h1v1h-1zM416 311h1v1h-1zM415 312h1v1h-1zM417 308h1v1h-1zM416 307h1v1h-1zM419 308h1v1h-1zM420 311h1v1h-1zM417 310h1v1h-1zM416 299h1v1h-1zM419 300h1v1h-1zM417 302h1v1h-1zM420 303h1v1h-1zM420 299h1v1h-1zM419 302h1v1h-1zM421 298h1v1h-1zM421 304h1v1h-1zM418 301h1v1h-1zM415 298h1v1h-1zM415 304h1v1h-1zM417 300h1v1h-1zM416 303h1v1h-1zM417 293h1v1h-1zM420 294h1v1h-1zM420 290h1v1h-1zM419 293h1v1h-1zM421 289h1v1h-1zM421 295h1v1h-1zM418 292h1v1h-1zM415 289h1v1h-1zM415 295h1v1h-1zM417 291h1v1h-1zM416 294h1v1h-1zM416 290h1v1h-1zM419 291h1v1h-1zM420 281h1v1h-1zM419 284h1v1h-1zM421 280h1v1h-1zM421 286h1v1h-1zM418 283h1v1h-1zM415 280h1v1h-1zM420 285h1v1h-1zM416 285h1v1h-1zM415 286h1v1h-1zM417 282h1v1h-1zM416 281h1v1h-1zM419 282h1v1h-1zM417 284h1v1h-1zM416 264h1v1h-1zM419 265h1v1h-1zM420 268h1v1h-1zM417 267h1v1h-1zM420 264h1v1h-1zM419 267h1v1h-1zM421 263h1v1h-1zM421 269h1v1h-1zM418 266h1v1h-1zM415 263h1v1h-1zM415 269h1v1h-1zM417 265h1v1h-1zM416 268h1v1h-1zM420 259h1v1h-1zM421 254h1v1h-1zM417 258h1v1h-1zM420 255h1v1h-1zM419 258h1v1h-1zM421 260h1v1h-1zM418 257h1v1h-1zM415 254h1v1h-1zM416 259h1v1h-1zM415 260h1v1h-1zM417 256h1v1h-1zM416 255h1v1h-1zM419 256h1v1h-1zM420 246h1v1h-1zM421 251h1v1h-1zM418 248h1v1h-1zM415 245h1v1h-1zM417 247h1v1h-1zM416 250h1v1h-1zM419 247h1v1h-1zM415 251h1v1h-1zM416 246h1v1h-1zM420 250h1v1h-1zM419 249h1v1h-1zM421 245h1v1h-1zM417 249h1v1h-1zM416 242h1v1h-1zM416 238h1v1h-1zM419 239h1v1h-1zM420 242h1v1h-1zM417 241h1v1h-1zM420 238h1v1h-1zM419 241h1v1h-1zM421 237h1v1h-1zM421 243h1v1h-1zM418 240h1v1h-1zM415 237h1v1h-1zM415 243h1v1h-1zM417 239h1v1h-1zM421 228h1v1h-1zM417 232h1v1h-1zM420 229h1v1h-1zM419 232h1v1h-1zM421 234h1v1h-1zM418 231h1v1h-1zM415 228h1v1h-1zM416 233h1v1h-1zM419 230h1v1h-1zM415 234h1v1h-1zM417 230h1v1h-1zM416 229h1v1h-1zM420 233h1v1h-1zM417 223h1v1h-1zM420 220h1v1h-1zM421 225h1v1h-1zM418 222h1v1h-1zM415 219h1v1h-1zM417 221h1v1h-1zM416 224h1v1h-1zM419 221h1v1h-1zM415 225h1v1h-1zM416 220h1v1h-1zM420 224h1v1h-1zM419 223h1v1h-1zM421 219h1v1h-1zM415 217h1v1h-1zM417 213h1v1h-1zM416 216h1v1h-1zM416 212h1v1h-1zM419 213h1v1h-1zM420 216h1v1h-1zM417 215h1v1h-1zM420 212h1v1h-1zM419 215h1v1h-1zM421 211h1v1h-1zM421 217h1v1h-1zM418 214h1v1h-1zM415 211h1v1h-1zM416 203h1v1h-1zM420 207h1v1h-1zM421 202h1v1h-1zM417 206h1v1h-1zM420 203h1v1h-1zM419 206h1v1h-1zM421 208h1v1h-1zM418 205h1v1h-1zM415 202h1v1h-1zM416 207h1v1h-1zM419 204h1v1h-1zM415 208h1v1h-1zM417 204h1v1h-1zM419 197h1v1h-1zM421 193h1v1h-1zM417 197h1v1h-1zM420 194h1v1h-1zM421 199h1v1h-1zM418 196h1v1h-1zM415 193h1v1h-1zM417 195h1v1h-1zM416 198h1v1h-1zM419 195h1v1h-1zM415 199h1v1h-1zM416 194h1v1h-1zM420 198h1v1h-1zM421 190h1v1h-1zM418 187h1v1h-1zM415 184h1v1h-1zM415 190h1v1h-1zM417 186h1v1h-1zM416 189h1v1h-1zM419 186h1v1h-1zM417 188h1v1h-1zM416 185h1v1h-1zM420 189h1v1h-1zM420 185h1v1h-1zM419 188h1v1h-1zM421 184h1v1h-1zM417 178h1v1h-1zM416 177h1v1h-1zM420 181h1v1h-1zM421 176h1v1h-1zM417 180h1v1h-1zM420 177h1v1h-1zM419 180h1v1h-1zM421 182h1v1h-1zM418 179h1v1h-1zM415 176h1v1h-1zM416 181h1v1h-1zM419 178h1v1h-1zM415 182h1v1h-1zM417 171h1v1h-1zM420 172h1v1h-1zM419 171h1v1h-1zM421 167h1v1h-1zM420 168h1v1h-1zM421 173h1v1h-1zM418 170h1v1h-1zM415 167h1v1h-1zM415 173h1v1h-1zM417 169h1v1h-1zM416 172h1v1h-1zM419 169h1v1h-1zM416 168h1v1h-1zM421 158h1v1h-1zM421 164h1v1h-1zM417 162h1v1h-1zM418 161h1v1h-1zM415 158h1v1h-1zM415 164h1v1h-1zM417 160h1v1h-1zM416 163h1v1h-1zM419 160h1v1h-1zM416 159h1v1h-1zM420 163h1v1h-1zM420 159h1v1h-1zM419 162h1v1h-1zM419 152h1v1h-1zM415 156h1v1h-1zM417 152h1v1h-1zM416 151h1v1h-1zM420 155h1v1h-1zM421 150h1v1h-1zM417 154h1v1h-1zM420 151h1v1h-1zM419 154h1v1h-1zM421 156h1v1h-1zM418 153h1v1h-1zM415 150h1v1h-1zM416 155h1v1h-1zM432 272h1v1h-1zM434 274h1v1h-1zM435 275h1v1h-1zM438 273h1v1h-1zM433 273h1v1h-1zM434 277h1v1h-1zM437 274h1v1h-1zM437 277h1v1h-1zM435 276h1v1h-1zM436 276h1v1h-1zM438 278h1v1h-1zM433 278h1v1h-1zM439 272h1v1h-1zM436 275h1v1h-1zM438 264h1v1h-1zM433 264h1v1h-1zM437 268h1v1h-1zM437 265h1v1h-1zM435 267h1v1h-1zM436 267h1v1h-1zM438 269h1v1h-1zM433 269h1v1h-1zM439 263h1v1h-1zM435 266h1v1h-1zM432 263h1v1h-1zM436 266h1v1h-1zM434 268h1v1h-1zM434 265h1v1h-1zM439 254h1v1h-1zM435 258h1v1h-1zM436 258h1v1h-1zM438 260h1v1h-1zM433 260h1v1h-1zM435 257h1v1h-1zM432 254h1v1h-1zM436 257h1v1h-1zM434 259h1v1h-1zM434 256h1v1h-1zM437 256h1v1h-1zM438 255h1v1h-1zM433 255h1v1h-1zM437 259h1v1h-1zM439 245h1v1h-1zM438 251h1v1h-1zM433 251h1v1h-1zM435 248h1v1h-1zM432 245h1v1h-1zM436 248h1v1h-1zM434 247h1v1h-1zM434 250h1v1h-1zM437 247h1v1h-1zM438 246h1v1h-1zM433 246h1v1h-1zM437 250h1v1h-1zM435 249h1v1h-1zM436 249h1v1h-1zM434 239h1v1h-1zM438 238h1v1h-1zM433 238h1v1h-1zM437 242h1v1h-1zM436 240h1v1h-1zM437 239h1v1h-1zM435 241h1v1h-1zM436 241h1v1h-1zM438 243h1v1h-1zM433 243h1v1h-1zM439 237h1v1h-1zM435 240h1v1h-1zM432 237h1v1h-1zM434 242h1v1h-1zM433 229h1v1h-1zM437 233h1v1h-1zM439 228h1v1h-1zM435 232h1v1h-1zM436 232h1v1h-1zM438 234h1v1h-1zM433 234h1v1h-1zM435 231h1v1h-1zM432 228h1v1h-1zM436 231h1v1h-1zM434 230h1v1h-1zM434 233h1v1h-1zM437 230h1v1h-1zM438 229h1v1h-1zM452 406h1v1h-1zM449 402h1v1h-1zM453 406h1v1h-1zM451 407h1v1h-1zM455 408h1v1h-1zM452 405h1v1h-1zM450 408h1v1h-1zM453 405h1v1h-1zM454 404h1v1h-1zM454 407h1v1h-1zM451 404h1v1h-1zM456 402h1v1h-1zM455 403h1v1h-1zM450 403h1v1h-1zM454 399h1v1h-1zM453 397h1v1h-1zM451 396h1v1h-1zM456 394h1v1h-1zM451 399h1v1h-1zM455 395h1v1h-1zM450 395h1v1h-1zM452 398h1v1h-1zM455 400h1v1h-1zM449 394h1v1h-1zM453 398h1v1h-1zM454 396h1v1h-1zM450 400h1v1h-1zM452 397h1v1h-1zM456 385h1v1h-1zM451 390h1v1h-1zM455 386h1v1h-1zM450 386h1v1h-1zM452 389h1v1h-1zM449 385h1v1h-1zM453 389h1v1h-1zM455 391h1v1h-1zM450 391h1v1h-1zM454 387h1v1h-1zM452 388h1v1h-1zM454 390h1v1h-1zM453 388h1v1h-1zM451 387h1v1h-1zM452 380h1v1h-1zM449 376h1v1h-1zM453 380h1v1h-1zM451 381h1v1h-1zM455 382h1v1h-1zM452 379h1v1h-1zM450 382h1v1h-1zM453 379h1v1h-1zM454 378h1v1h-1zM454 381h1v1h-1zM451 378h1v1h-1zM456 376h1v1h-1zM455 377h1v1h-1zM450 377h1v1h-1zM450 374h1v1h-1zM452 371h1v1h-1zM454 373h1v1h-1zM453 371h1v1h-1zM455 374h1v1h-1zM451 370h1v1h-1zM456 368h1v1h-1zM451 373h1v1h-1zM455 369h1v1h-1zM450 369h1v1h-1zM452 372h1v1h-1zM449 368h1v1h-1zM453 372h1v1h-1zM454 370h1v1h-1zM451 361h1v1h-1zM456 359h1v1h-1zM451 364h1v1h-1zM455 360h1v1h-1zM450 360h1v1h-1zM452 363h1v1h-1zM449 359h1v1h-1zM453 363h1v1h-1zM455 365h1v1h-1zM450 365h1v1h-1zM454 361h1v1h-1zM452 362h1v1h-1zM454 364h1v1h-1zM453 362h1v1h-1zM450 351h1v1h-1zM451 355h1v1h-1zM452 354h1v1h-1zM449 350h1v1h-1zM453 354h1v1h-1zM455 356h1v1h-1zM450 356h1v1h-1zM452 353h1v1h-1zM453 353h1v1h-1zM454 352h1v1h-1zM454 355h1v1h-1zM451 352h1v1h-1zM456 350h1v1h-1zM455 351h1v1h-1zM452 345h1v1h-1zM449 341h1v1h-1zM453 345h1v1h-1zM455 347h1v1h-1zM450 347h1v1h-1zM452 344h1v1h-1zM453 344h1v1h-1zM454 343h1v1h-1zM456 341h1v1h-1zM454 346h1v1h-1zM451 346h1v1h-1zM451 343h1v1h-1zM455 342h1v1h-1zM450 342h1v1h-1zM454 338h1v1h-1zM453 336h1v1h-1zM451 335h1v1h-1zM456 333h1v1h-1zM451 338h1v1h-1zM455 334h1v1h-1zM450 334h1v1h-1zM452 337h1v1h-1zM449 333h1v1h-1zM453 337h1v1h-1zM455 339h1v1h-1zM450 339h1v1h-1zM454 335h1v1h-1zM452 336h1v1h-1zM455 325h1v1h-1zM450 325h1v1h-1zM451 329h1v1h-1zM452 328h1v1h-1zM449 324h1v1h-1zM453 328h1v1h-1zM455 330h1v1h-1zM450 330h1v1h-1zM452 327h1v1h-1zM453 327h1v1h-1zM454 326h1v1h-1zM456 324h1v1h-1zM454 329h1v1h-1zM451 326h1v1h-1zM452 319h1v1h-1zM449 315h1v1h-1zM453 319h1v1h-1zM455 321h1v1h-1zM450 321h1v1h-1zM452 318h1v1h-1zM453 318h1v1h-1zM454 317h1v1h-1zM456 315h1v1h-1zM454 320h1v1h-1zM451 317h1v1h-1zM451 320h1v1h-1zM455 316h1v1h-1zM450 316h1v1h-1zM452 310h1v1h-1zM453 310h1v1h-1zM455 312h1v1h-1zM450 312h1v1h-1zM452 309h1v1h-1zM454 311h1v1h-1zM453 309h1v1h-1zM451 308h1v1h-1zM454 308h1v1h-1zM456 306h1v1h-1zM451 311h1v1h-1zM455 307h1v1h-1zM450 307h1v1h-1zM449 306h1v1h-1zM451 300h1v1h-1zM455 299h1v1h-1zM450 299h1v1h-1zM451 303h1v1h-1zM452 302h1v1h-1zM449 298h1v1h-1zM453 302h1v1h-1zM455 304h1v1h-1zM450 304h1v1h-1zM452 301h1v1h-1zM453 301h1v1h-1zM454 300h1v1h-1zM456 298h1v1h-1zM454 303h1v1h-1zM449 280h1v1h-1zM452 284h1v1h-1zM453 284h1v1h-1zM455 286h1v1h-1zM450 286h1v1h-1zM452 283h1v1h-1zM454 285h1v1h-1zM453 283h1v1h-1zM451 282h1v1h-1zM454 282h1v1h-1zM456 280h1v1h-1zM451 285h1v1h-1zM455 281h1v1h-1zM450 281h1v1h-1zM456 272h1v1h-1zM454 277h1v1h-1zM451 274h1v1h-1zM455 273h1v1h-1zM450 273h1v1h-1zM451 277h1v1h-1zM452 276h1v1h-1zM449 272h1v1h-1zM453 276h1v1h-1zM455 278h1v1h-1zM450 278h1v1h-1zM452 275h1v1h-1zM453 275h1v1h-1zM454 274h1v1h-1zM451 265h1v1h-1zM455 264h1v1h-1zM450 264h1v1h-1zM452 267h1v1h-1zM449 263h1v1h-1zM453 267h1v1h-1zM455 269h1v1h-1zM450 269h1v1h-1zM452 266h1v1h-1zM454 268h1v1h-1zM453 266h1v1h-1zM454 265h1v1h-1zM456 263h1v1h-1zM451 268h1v1h-1zM449 254h1v1h-1zM453 258h1v1h-1zM452 258h1v1h-1zM455 260h1v1h-1zM450 260h1v1h-1zM452 257h1v1h-1zM454 259h1v1h-1zM453 257h1v1h-1zM451 256h1v1h-1zM454 256h1v1h-1zM456 254h1v1h-1zM451 259h1v1h-1zM455 255h1v1h-1zM450 255h1v1h-1zM454 247h1v1h-1zM455 251h1v1h-1zM452 248h1v1h-1zM450 251h1v1h-1zM454 250h1v1h-1zM453 248h1v1h-1zM451 247h1v1h-1zM456 245h1v1h-1zM451 250h1v1h-1zM455 246h1v1h-1zM450 246h1v1h-1zM452 249h1v1h-1zM449 245h1v1h-1zM453 249h1v1h-1zM451 242h1v1h-1zM451 239h1v1h-1zM455 238h1v1h-1zM450 238h1v1h-1zM452 241h1v1h-1zM449 237h1v1h-1zM453 241h1v1h-1zM455 243h1v1h-1zM450 243h1v1h-1zM452 240h1v1h-1zM454 242h1v1h-1zM453 240h1v1h-1zM454 239h1v1h-1zM456 237h1v1h-1zM455 229h1v1h-1zM450 229h1v1h-1zM454 230h1v1h-1zM449 228h1v1h-1zM453 232h1v1h-1zM452 232h1v1h-1zM455 234h1v1h-1zM450 234h1v1h-1zM452 231h1v1h-1zM454 233h1v1h-1zM453 231h1v1h-1zM451 230h1v1h-1zM456 228h1v1h-1zM451 233h1v1h-1zM449 219h1v1h-1zM453 223h1v1h-1zM454 221h1v1h-1zM455 225h1v1h-1zM452 222h1v1h-1zM450 225h1v1h-1zM454 224h1v1h-1zM453 222h1v1h-1zM451 221h1v1h-1zM456 219h1v1h-1zM451 224h1v1h-1zM455 220h1v1h-1zM450 220h1v1h-1zM452 223h1v1h-1zM456 211h1v1h-1zM451 216h1v1h-1zM451 213h1v1h-1zM455 212h1v1h-1zM450 212h1v1h-1zM452 215h1v1h-1zM449 211h1v1h-1zM453 215h1v1h-1zM455 217h1v1h-1zM450 217h1v1h-1zM452 214h1v1h-1zM454 216h1v1h-1zM453 214h1v1h-1zM454 213h1v1h-1zM455 203h1v1h-1zM450 203h1v1h-1zM452 206h1v1h-1zM449 202h1v1h-1zM453 206h1v1h-1zM454 204h1v1h-1zM455 208h1v1h-1zM452 205h1v1h-1zM450 208h1v1h-1zM454 207h1v1h-1zM453 205h1v1h-1zM451 204h1v1h-1zM456 202h1v1h-1zM451 207h1v1h-1zM450 194h1v1h-1zM452 197h1v1h-1zM449 193h1v1h-1zM453 197h1v1h-1zM454 195h1v1h-1zM455 199h1v1h-1zM452 196h1v1h-1zM450 199h1v1h-1zM454 198h1v1h-1zM453 196h1v1h-1zM451 195h1v1h-1zM456 193h1v1h-1zM451 198h1v1h-1zM455 194h1v1h-1zM453 188h1v1h-1zM455 190h1v1h-1zM450 190h1v1h-1zM453 187h1v1h-1zM454 186h1v1h-1zM452 187h1v1h-1zM454 189h1v1h-1zM451 186h1v1h-1zM456 184h1v1h-1zM455 185h1v1h-1zM450 185h1v1h-1zM451 189h1v1h-1zM452 188h1v1h-1zM449 184h1v1h-1zM451 181h1v1h-1zM455 177h1v1h-1zM450 177h1v1h-1zM452 180h1v1h-1zM449 176h1v1h-1zM453 180h1v1h-1zM454 178h1v1h-1zM455 182h1v1h-1zM452 179h1v1h-1zM450 182h1v1h-1zM454 181h1v1h-1zM453 179h1v1h-1zM451 178h1v1h-1zM456 176h1v1h-1zM455 168h1v1h-1zM450 168h1v1h-1zM452 171h1v1h-1zM449 167h1v1h-1zM453 171h1v1h-1zM454 169h1v1h-1zM455 173h1v1h-1zM452 170h1v1h-1zM450 173h1v1h-1zM454 172h1v1h-1zM453 170h1v1h-1zM451 169h1v1h-1zM456 167h1v1h-1zM451 172h1v1h-1zM452 162h1v1h-1zM449 158h1v1h-1zM453 162h1v1h-1zM455 164h1v1h-1zM450 164h1v1h-1zM452 161h1v1h-1zM453 161h1v1h-1zM454 160h1v1h-1zM454 163h1v1h-1zM451 160h1v1h-1zM456 158h1v1h-1zM455 159h1v1h-1zM450 159h1v1h-1zM451 163h1v1h-1zM473 194h1v1h-1zM468 199h1v1h-1zM470 197h1v1h-1zM467 193h1v1h-1zM471 196h1v1h-1zM473 199h1v1h-1zM474 193h1v1h-1zM472 195h1v1h-1zM470 196h1v1h-1zM468 194h1v1h-1zM472 198h1v1h-1zM469 195h1v1h-1zM471 197h1v1h-1zM469 198h1v1h-1zM470 188h1v1h-1zM467 184h1v1h-1zM471 187h1v1h-1zM473 190h1v1h-1zM474 184h1v1h-1zM470 187h1v1h-1zM472 186h1v1h-1zM468 185h1v1h-1zM472 189h1v1h-1zM469 186h1v1h-1zM471 188h1v1h-1zM473 185h1v1h-1zM469 189h1v1h-1zM468 190h1v1h-1zM469 178h1v1h-1zM469 181h1v1h-1zM471 180h1v1h-1zM473 177h1v1h-1zM468 182h1v1h-1zM470 180h1v1h-1zM467 176h1v1h-1zM471 179h1v1h-1zM474 176h1v1h-1zM473 182h1v1h-1zM472 178h1v1h-1zM470 179h1v1h-1zM468 177h1v1h-1zM472 181h1v1h-1zM485 225h1v1h-1zM487 222h1v1h-1zM484 219h1v1h-1zM488 222h1v1h-1zM490 225h1v1h-1zM491 219h1v1h-1zM489 221h1v1h-1zM485 220h1v1h-1zM489 224h1v1h-1zM487 223h1v1h-1zM486 221h1v1h-1zM488 223h1v1h-1zM490 220h1v1h-1zM486 224h1v1h-1zM485 212h1v1h-1zM489 216h1v1h-1zM486 213h1v1h-1zM486 216h1v1h-1zM487 215h1v1h-1zM488 215h1v1h-1zM490 212h1v1h-1zM485 217h1v1h-1zM487 214h1v1h-1zM484 211h1v1h-1zM488 214h1v1h-1zM491 211h1v1h-1zM490 217h1v1h-1zM489 213h1v1h-1zM486 204h1v1h-1zM488 206h1v1h-1zM486 207h1v1h-1zM487 206h1v1h-1zM490 203h1v1h-1zM485 208h1v1h-1zM487 205h1v1h-1zM484 202h1v1h-1zM488 205h1v1h-1zM491 202h1v1h-1zM490 208h1v1h-1zM489 204h1v1h-1zM485 203h1v1h-1zM489 207h1v1h-1zM485 199h1v1h-1zM487 196h1v1h-1zM484 193h1v1h-1zM488 196h1v1h-1zM490 199h1v1h-1zM491 193h1v1h-1zM489 195h1v1h-1zM485 194h1v1h-1zM489 198h1v1h-1zM487 197h1v1h-1zM486 195h1v1h-1zM488 197h1v1h-1zM490 194h1v1h-1zM486 198h1v1h-1zM487 187h1v1h-1zM484 184h1v1h-1zM490 190h1v1h-1zM491 184h1v1h-1zM485 185h1v1h-1zM489 186h1v1h-1zM486 189h1v1h-1zM489 189h1v1h-1zM487 188h1v1h-1zM486 186h1v1h-1zM488 188h1v1h-1zM490 185h1v1h-1zM485 190h1v1h-1zM488 187h1v1h-1zM485 177h1v1h-1zM489 181h1v1h-1zM487 180h1v1h-1zM486 178h1v1h-1zM488 180h1v1h-1zM486 181h1v1h-1zM490 177h1v1h-1zM485 182h1v1h-1zM487 179h1v1h-1zM484 176h1v1h-1zM488 179h1v1h-1zM491 176h1v1h-1zM490 182h1v1h-1zM489 178h1v1h-1zM488 171h1v1h-1zM490 168h1v1h-1zM486 172h1v1h-1zM485 173h1v1h-1zM487 170h1v1h-1zM484 167h1v1h-1zM488 170h1v1h-1zM490 173h1v1h-1zM491 167h1v1h-1zM489 169h1v1h-1zM485 168h1v1h-1zM489 172h1v1h-1zM487 171h1v1h-1zM486 169h1v1h-1zM488 161h1v1h-1zM487 161h1v1h-1zM484 158h1v1h-1zM490 164h1v1h-1zM491 158h1v1h-1zM485 159h1v1h-1zM489 160h1v1h-1zM486 163h1v1h-1zM489 163h1v1h-1zM487 162h1v1h-1zM486 160h1v1h-1zM488 162h1v1h-1zM490 159h1v1h-1zM485 164h1v1h-1zM489 152h1v1h-1zM485 151h1v1h-1zM489 155h1v1h-1zM487 154h1v1h-1zM486 152h1v1h-1zM488 154h1v1h-1zM486 155h1v1h-1zM490 151h1v1h-1zM485 156h1v1h-1zM487 153h1v1h-1zM484 150h1v1h-1zM488 153h1v1h-1zM490 156h1v1h-1zM491 150h1v1h-1zM487 145h1v1h-1zM486 143h1v1h-1zM488 145h1v1h-1zM490 142h1v1h-1zM486 146h1v1h-1zM485 147h1v1h-1zM487 144h1v1h-1zM484 141h1v1h-1zM488 144h1v1h-1zM490 147h1v1h-1zM491 141h1v1h-1zM489 143h1v1h-1zM485 142h1v1h-1zM489 146h1v1h-1zM485 138h1v1h-1zM487 135h1v1h-1zM488 135h1v1h-1zM484 132h1v1h-1zM490 138h1v1h-1zM491 132h1v1h-1zM485 133h1v1h-1zM489 134h1v1h-1zM486 137h1v1h-1zM489 137h1v1h-1zM487 136h1v1h-1zM486 134h1v1h-1zM488 136h1v1h-1zM490 133h1v1h-1zM484 123h1v1h-1zM488 126h1v1h-1zM491 123h1v1h-1zM490 129h1v1h-1zM485 124h1v1h-1zM489 128h1v1h-1zM489 125h1v1h-1zM486 128h1v1h-1zM487 127h1v1h-1zM486 125h1v1h-1zM488 127h1v1h-1zM490 124h1v1h-1zM485 129h1v1h-1zM487 126h1v1h-1zM485 116h1v1h-1zM489 120h1v1h-1zM487 119h1v1h-1zM486 117h1v1h-1zM488 119h1v1h-1zM490 116h1v1h-1zM486 120h1v1h-1zM485 121h1v1h-1zM487 118h1v1h-1zM484 115h1v1h-1zM488 118h1v1h-1zM490 121h1v1h-1zM491 115h1v1h-1zM489 117h1v1h-1zM488 110h1v1h-1zM490 107h1v1h-1zM485 112h1v1h-1zM487 109h1v1h-1zM488 109h1v1h-1zM484 106h1v1h-1zM490 112h1v1h-1zM491 106h1v1h-1zM485 107h1v1h-1zM489 108h1v1h-1zM486 111h1v1h-1zM489 111h1v1h-1zM487 110h1v1h-1zM486 108h1v1h-1zM487 100h1v1h-1zM484 97h1v1h-1zM488 100h1v1h-1zM491 97h1v1h-1zM490 103h1v1h-1zM485 98h1v1h-1zM489 102h1v1h-1zM486 99h1v1h-1zM489 99h1v1h-1zM486 102h1v1h-1zM487 101h1v1h-1zM488 101h1v1h-1zM490 98h1v1h-1zM485 103h1v1h-1zM508 307h1v1h-1zM503 307h1v1h-1zM505 309h1v1h-1zM502 306h1v1h-1zM506 309h1v1h-1zM504 308h1v1h-1zM508 312h1v1h-1zM503 312h1v1h-1zM504 311h1v1h-1zM507 308h1v1h-1zM507 311h1v1h-1zM505 310h1v1h-1zM506 310h1v1h-1zM509 306h1v1h-1zM503 304h1v1h-1zM507 303h1v1h-1zM507 300h1v1h-1zM505 302h1v1h-1zM506 302h1v1h-1zM508 299h1v1h-1zM503 299h1v1h-1zM509 298h1v1h-1zM505 301h1v1h-1zM502 298h1v1h-1zM506 301h1v1h-1zM504 303h1v1h-1zM504 300h1v1h-1zM508 304h1v1h-1zM508 295h1v1h-1zM509 289h1v1h-1zM505 293h1v1h-1zM506 293h1v1h-1zM508 290h1v1h-1zM503 290h1v1h-1zM505 292h1v1h-1zM502 289h1v1h-1zM506 292h1v1h-1zM504 294h1v1h-1zM504 291h1v1h-1zM507 291h1v1h-1zM503 295h1v1h-1zM507 294h1v1h-1zM509 280h1v1h-1zM508 281h1v1h-1zM503 281h1v1h-1zM505 283h1v1h-1zM502 280h1v1h-1zM506 283h1v1h-1zM504 282h1v1h-1zM508 286h1v1h-1zM503 286h1v1h-1zM504 285h1v1h-1zM507 282h1v1h-1zM507 285h1v1h-1zM505 284h1v1h-1zM506 284h1v1h-1zM504 274h1v1h-1zM508 278h1v1h-1zM503 278h1v1h-1zM507 277h1v1h-1zM507 274h1v1h-1zM506 275h1v1h-1zM505 276h1v1h-1zM506 276h1v1h-1zM508 273h1v1h-1zM503 273h1v1h-1zM509 272h1v1h-1zM505 275h1v1h-1zM502 272h1v1h-1zM504 277h1v1h-1zM522 380h1v1h-1zM523 380h1v1h-1zM525 382h1v1h-1zM520 382h1v1h-1zM526 376h1v1h-1zM522 379h1v1h-1zM519 376h1v1h-1zM523 379h1v1h-1zM521 381h1v1h-1zM521 378h1v1h-1zM525 377h1v1h-1zM520 377h1v1h-1zM524 381h1v1h-1zM524 378h1v1h-1zM522 371h1v1h-1zM519 368h1v1h-1zM523 371h1v1h-1zM521 370h1v1h-1zM521 373h1v1h-1zM524 370h1v1h-1zM525 369h1v1h-1zM520 369h1v1h-1zM524 373h1v1h-1zM522 372h1v1h-1zM523 372h1v1h-1zM525 374h1v1h-1zM520 374h1v1h-1zM526 368h1v1h-1zM525 360h1v1h-1zM520 360h1v1h-1zM524 364h1v1h-1zM521 364h1v1h-1zM524 361h1v1h-1zM522 363h1v1h-1zM523 363h1v1h-1zM525 365h1v1h-1zM520 365h1v1h-1zM526 359h1v1h-1zM522 362h1v1h-1zM523 362h1v1h-1zM519 359h1v1h-1zM521 361h1v1h-1zM524 352h1v1h-1zM522 354h1v1h-1zM523 354h1v1h-1zM525 356h1v1h-1zM520 356h1v1h-1zM526 350h1v1h-1zM522 353h1v1h-1zM519 350h1v1h-1zM523 353h1v1h-1zM521 355h1v1h-1zM521 352h1v1h-1zM525 351h1v1h-1zM520 351h1v1h-1zM524 355h1v1h-1zM526 341h1v1h-1zM522 345h1v1h-1zM523 345h1v1h-1zM525 347h1v1h-1zM520 347h1v1h-1zM522 344h1v1h-1zM519 341h1v1h-1zM523 344h1v1h-1zM521 346h1v1h-1zM521 343h1v1h-1zM524 343h1v1h-1zM525 342h1v1h-1zM520 342h1v1h-1zM524 346h1v1h-1zM519 333h1v1h-1zM521 335h1v1h-1zM525 334h1v1h-1zM520 334h1v1h-1zM524 338h1v1h-1zM521 338h1v1h-1zM524 335h1v1h-1zM522 337h1v1h-1zM523 337h1v1h-1zM525 339h1v1h-1zM520 339h1v1h-1zM526 333h1v1h-1zM522 336h1v1h-1zM523 336h1v1h-1zM525 325h1v1h-1zM520 325h1v1h-1zM524 329h1v1h-1zM524 326h1v1h-1zM522 328h1v1h-1zM523 328h1v1h-1zM525 330h1v1h-1zM520 330h1v1h-1zM526 324h1v1h-1zM522 327h1v1h-1zM519 324h1v1h-1zM523 327h1v1h-1zM521 329h1v1h-1zM521 326h1v1h-1zM526 315h1v1h-1zM522 319h1v1h-1zM523 319h1v1h-1zM525 321h1v1h-1zM520 321h1v1h-1zM522 318h1v1h-1zM519 315h1v1h-1zM523 318h1v1h-1zM521 317h1v1h-1zM521 320h1v1h-1zM524 317h1v1h-1zM525 316h1v1h-1zM520 316h1v1h-1zM524 320h1v1h-1zM526 306h1v1h-1zM525 312h1v1h-1zM520 312h1v1h-1zM522 309h1v1h-1zM519 306h1v1h-1zM523 309h1v1h-1zM521 308h1v1h-1zM521 311h1v1h-1zM524 308h1v1h-1zM525 307h1v1h-1zM520 307h1v1h-1zM524 311h1v1h-1zM522 310h1v1h-1zM523 310h1v1h-1zM521 300h1v1h-1zM525 299h1v1h-1zM520 299h1v1h-1zM524 303h1v1h-1zM524 300h1v1h-1zM522 302h1v1h-1zM523 302h1v1h-1zM525 304h1v1h-1zM520 304h1v1h-1zM526 298h1v1h-1zM522 301h1v1h-1zM523 301h1v1h-1zM519 298h1v1h-1zM521 303h1v1h-1zM524 294h1v1h-1zM526 289h1v1h-1zM522 293h1v1h-1zM523 293h1v1h-1zM525 295h1v1h-1zM520 295h1v1h-1zM522 292h1v1h-1zM519 289h1v1h-1zM523 292h1v1h-1zM521 291h1v1h-1zM521 294h1v1h-1zM524 291h1v1h-1zM525 290h1v1h-1zM520 290h1v1h-1zM526 280h1v1h-1zM525 286h1v1h-1zM520 286h1v1h-1zM522 283h1v1h-1zM519 280h1v1h-1zM523 283h1v1h-1zM521 282h1v1h-1zM521 285h1v1h-1zM524 282h1v1h-1zM525 281h1v1h-1zM520 281h1v1h-1zM524 285h1v1h-1zM522 284h1v1h-1zM523 284h1v1h-1zM539 302h1v1h-1zM541 300h1v1h-1zM542 299h1v1h-1zM538 299h1v1h-1zM537 298h1v1h-1zM543 298h1v1h-1zM541 302h1v1h-1zM539 300h1v1h-1zM543 304h1v1h-1zM537 304h1v1h-1zM540 301h1v1h-1zM542 303h1v1h-1zM538 303h1v1h-1zM542 290h1v1h-1zM538 290h1v1h-1zM537 289h1v1h-1zM541 293h1v1h-1zM543 289h1v1h-1zM537 295h1v1h-1zM539 291h1v1h-1zM543 295h1v1h-1zM540 292h1v1h-1zM542 294h1v1h-1zM538 294h1v1h-1zM539 293h1v1h-1zM541 291h1v1h-1zM537 280h1v1h-1zM541 284h1v1h-1zM539 282h1v1h-1zM543 280h1v1h-1zM543 286h1v1h-1zM537 286h1v1h-1zM540 283h1v1h-1zM542 285h1v1h-1zM538 285h1v1h-1zM539 284h1v1h-1zM541 282h1v1h-1zM542 281h1v1h-1zM538 281h1v1h-1zM538 277h1v1h-1zM539 276h1v1h-1zM541 274h1v1h-1zM537 278h1v1h-1zM542 273h1v1h-1zM538 273h1v1h-1zM537 272h1v1h-1zM543 272h1v1h-1zM541 276h1v1h-1zM539 274h1v1h-1zM543 278h1v1h-1zM540 275h1v1h-1zM542 277h1v1h-1zM541 265h1v1h-1zM542 264h1v1h-1zM538 264h1v1h-1zM537 263h1v1h-1zM541 267h1v1h-1zM543 263h1v1h-1zM537 269h1v1h-1zM539 265h1v1h-1zM543 269h1v1h-1zM540 266h1v1h-1zM542 268h1v1h-1zM538 268h1v1h-1zM539 267h1v1h-1zM538 255h1v1h-1zM537 254h1v1h-1zM541 258h1v1h-1zM543 254h1v1h-1zM539 256h1v1h-1zM543 260h1v1h-1zM537 260h1v1h-1zM540 257h1v1h-1zM542 259h1v1h-1zM538 259h1v1h-1zM539 258h1v1h-1zM541 256h1v1h-1zM542 255h1v1h-1zM537 245h1v1h-1zM541 249h1v1h-1zM539 247h1v1h-1zM543 245h1v1h-1zM543 251h1v1h-1zM540 248h1v1h-1zM537 251h1v1h-1zM539 249h1v1h-1zM542 250h1v1h-1zM542 246h1v1h-1zM538 250h1v1h-1zM538 246h1v1h-1zM541 247h1v1h-1zM538 242h1v1h-1zM539 241h1v1h-1zM541 239h1v1h-1zM542 238h1v1h-1zM538 238h1v1h-1zM537 237h1v1h-1zM541 241h1v1h-1zM543 237h1v1h-1zM537 243h1v1h-1zM539 239h1v1h-1zM543 243h1v1h-1zM540 240h1v1h-1zM542 242h1v1h-1zM542 229h1v1h-1zM538 229h1v1h-1zM537 228h1v1h-1zM541 232h1v1h-1zM543 228h1v1h-1zM539 230h1v1h-1zM543 234h1v1h-1zM537 234h1v1h-1zM540 231h1v1h-1zM539 232h1v1h-1zM542 233h1v1h-1zM538 233h1v1h-1zM541 230h1v1h-1zM537 219h1v1h-1zM541 223h1v1h-1zM539 221h1v1h-1zM543 219h1v1h-1zM543 225h1v1h-1zM540 222h1v1h-1zM537 225h1v1h-1zM539 223h1v1h-1zM542 224h1v1h-1zM542 220h1v1h-1zM538 224h1v1h-1zM538 220h1v1h-1zM541 221h1v1h-1zM538 216h1v1h-1zM539 215h1v1h-1zM541 213h1v1h-1zM542 212h1v1h-1zM538 212h1v1h-1zM537 211h1v1h-1zM541 215h1v1h-1zM543 211h1v1h-1zM537 217h1v1h-1zM539 213h1v1h-1zM543 217h1v1h-1zM540 214h1v1h-1zM542 216h1v1h-1zM541 204h1v1h-1zM542 203h1v1h-1zM538 203h1v1h-1zM537 202h1v1h-1zM541 206h1v1h-1zM539 204h1v1h-1zM543 202h1v1h-1zM543 208h1v1h-1zM537 208h1v1h-1zM540 205h1v1h-1zM539 206h1v1h-1zM542 207h1v1h-1zM538 207h1v1h-1zM537 193h1v1h-1zM541 197h1v1h-1zM543 193h1v1h-1zM539 195h1v1h-1zM543 199h1v1h-1zM540 196h1v1h-1zM537 199h1v1h-1zM539 197h1v1h-1zM542 198h1v1h-1zM542 194h1v1h-1zM538 198h1v1h-1zM538 194h1v1h-1zM541 195h1v1h-1zM556 373h1v1h-1zM559 370h1v1h-1zM558 371h1v1h-1zM559 373h1v1h-1zM555 374h1v1h-1zM558 372h1v1h-1zM560 369h1v1h-1zM555 369h1v1h-1zM557 372h1v1h-1zM554 368h1v1h-1zM556 370h1v1h-1zM560 374h1v1h-1zM561 368h1v1h-1zM557 371h1v1h-1zM559 364h1v1h-1zM555 365h1v1h-1zM558 363h1v1h-1zM560 360h1v1h-1zM555 360h1v1h-1zM558 362h1v1h-1zM557 363h1v1h-1zM554 359h1v1h-1zM556 361h1v1h-1zM560 365h1v1h-1zM561 359h1v1h-1zM557 362h1v1h-1zM556 364h1v1h-1zM559 361h1v1h-1zM558 354h1v1h-1zM560 351h1v1h-1zM555 351h1v1h-1zM554 350h1v1h-1zM558 353h1v1h-1zM561 350h1v1h-1zM557 354h1v1h-1zM556 355h1v1h-1zM556 352h1v1h-1zM560 356h1v1h-1zM555 356h1v1h-1zM557 353h1v1h-1zM559 355h1v1h-1zM559 352h1v1h-1zM555 342h1v1h-1zM557 345h1v1h-1zM554 341h1v1h-1zM558 344h1v1h-1zM561 341h1v1h-1zM556 346h1v1h-1zM556 343h1v1h-1zM559 343h1v1h-1zM560 347h1v1h-1zM557 344h1v1h-1zM555 347h1v1h-1zM559 346h1v1h-1zM558 345h1v1h-1zM560 342h1v1h-1zM559 335h1v1h-1zM558 337h1v1h-1zM560 334h1v1h-1zM555 334h1v1h-1zM558 336h1v1h-1zM557 337h1v1h-1zM555 339h1v1h-1zM554 333h1v1h-1zM556 335h1v1h-1zM560 339h1v1h-1zM561 333h1v1h-1zM557 336h1v1h-1zM556 338h1v1h-1zM559 338h1v1h-1zM558 328h1v1h-1zM560 325h1v1h-1zM555 325h1v1h-1zM554 324h1v1h-1zM558 327h1v1h-1zM561 324h1v1h-1zM557 328h1v1h-1zM556 329h1v1h-1zM556 326h1v1h-1zM560 330h1v1h-1zM555 330h1v1h-1zM557 327h1v1h-1zM559 329h1v1h-1zM559 326h1v1h-1zM558 319h1v1h-1zM560 316h1v1h-1zM555 316h1v1h-1zM557 319h1v1h-1zM554 315h1v1h-1zM558 318h1v1h-1zM561 315h1v1h-1zM556 320h1v1h-1zM556 317h1v1h-1zM559 317h1v1h-1zM560 321h1v1h-1zM557 318h1v1h-1zM555 321h1v1h-1zM559 320h1v1h-1zM557 310h1v1h-1zM554 306h1v1h-1zM558 309h1v1h-1zM556 308h1v1h-1zM560 312h1v1h-1zM561 306h1v1h-1zM555 312h1v1h-1zM556 311h1v1h-1zM559 308h1v1h-1zM557 309h1v1h-1zM559 311h1v1h-1zM558 310h1v1h-1zM560 307h1v1h-1zM555 307h1v1h-1zM559 300h1v1h-1zM558 302h1v1h-1zM560 299h1v1h-1zM555 299h1v1h-1zM554 298h1v1h-1zM558 301h1v1h-1zM561 298h1v1h-1zM557 302h1v1h-1zM556 303h1v1h-1zM556 300h1v1h-1zM560 304h1v1h-1zM555 304h1v1h-1zM557 301h1v1h-1zM559 303h1v1h-1zM558 293h1v1h-1zM560 290h1v1h-1zM555 290h1v1h-1zM557 293h1v1h-1zM554 289h1v1h-1zM558 292h1v1h-1zM556 291h1v1h-1zM561 289h1v1h-1zM556 294h1v1h-1zM559 291h1v1h-1zM560 295h1v1h-1zM557 292h1v1h-1zM555 295h1v1h-1zM559 294h1v1h-1zM560 281h1v1h-1zM555 281h1v1h-1zM557 284h1v1h-1zM554 280h1v1h-1zM558 283h1v1h-1zM556 282h1v1h-1zM560 286h1v1h-1zM561 280h1v1h-1zM555 286h1v1h-1zM556 285h1v1h-1zM559 282h1v1h-1zM557 283h1v1h-1zM559 285h1v1h-1zM558 284h1v1h-1zM559 277h1v1h-1zM559 274h1v1h-1zM558 276h1v1h-1zM560 273h1v1h-1zM555 273h1v1h-1zM554 272h1v1h-1zM558 275h1v1h-1zM561 272h1v1h-1zM557 276h1v1h-1zM556 277h1v1h-1zM556 274h1v1h-1zM560 278h1v1h-1zM555 278h1v1h-1zM557 275h1v1h-1zM560 269h1v1h-1zM558 267h1v1h-1zM560 264h1v1h-1zM555 264h1v1h-1zM557 267h1v1h-1zM554 263h1v1h-1zM558 266h1v1h-1zM556 265h1v1h-1zM561 263h1v1h-1zM556 268h1v1h-1zM559 265h1v1h-1zM555 269h1v1h-1zM557 266h1v1h-1zM559 268h1v1h-1zM557 258h1v1h-1zM554 254h1v1h-1zM558 257h1v1h-1zM556 256h1v1h-1zM560 260h1v1h-1zM561 254h1v1h-1zM555 260h1v1h-1zM556 259h1v1h-1zM559 256h1v1h-1zM557 257h1v1h-1zM559 259h1v1h-1zM558 258h1v1h-1zM560 255h1v1h-1zM555 255h1v1h-1zM557 249h1v1h-1zM554 245h1v1h-1zM558 248h1v1h-1zM556 247h1v1h-1zM560 251h1v1h-1zM561 245h1v1h-1zM557 248h1v1h-1zM556 250h1v1h-1zM555 251h1v1h-1zM559 247h1v1h-1zM559 250h1v1h-1zM558 249h1v1h-1zM560 246h1v1h-1zM555 246h1v1h-1zM558 241h1v1h-1zM560 238h1v1h-1zM555 238h1v1h-1zM557 241h1v1h-1zM554 237h1v1h-1zM558 240h1v1h-1zM556 239h1v1h-1zM561 237h1v1h-1zM556 242h1v1h-1zM560 243h1v1h-1zM559 239h1v1h-1zM555 243h1v1h-1zM557 240h1v1h-1zM559 242h1v1h-1zM555 229h1v1h-1zM557 232h1v1h-1zM554 228h1v1h-1zM558 231h1v1h-1zM556 230h1v1h-1zM560 234h1v1h-1zM561 228h1v1h-1zM555 234h1v1h-1zM556 233h1v1h-1zM559 230h1v1h-1zM557 231h1v1h-1zM559 233h1v1h-1zM558 232h1v1h-1zM560 229h1v1h-1zM557 223h1v1h-1zM554 219h1v1h-1zM558 222h1v1h-1zM556 221h1v1h-1zM560 225h1v1h-1zM561 219h1v1h-1zM557 222h1v1h-1zM556 224h1v1h-1zM555 225h1v1h-1zM559 221h1v1h-1zM559 224h1v1h-1zM558 223h1v1h-1zM560 220h1v1h-1zM555 220h1v1h-1zM559 216h1v1h-1zM558 215h1v1h-1zM560 212h1v1h-1zM555 212h1v1h-1zM560 217h1v1h-1zM557 215h1v1h-1zM554 211h1v1h-1zM558 214h1v1h-1zM556 213h1v1h-1zM561 211h1v1h-1zM556 216h1v1h-1zM559 213h1v1h-1zM555 217h1v1h-1zM557 214h1v1h-1zM558 206h1v1h-1zM560 203h1v1h-1zM555 203h1v1h-1zM557 206h1v1h-1zM554 202h1v1h-1zM558 205h1v1h-1zM556 204h1v1h-1zM560 208h1v1h-1zM561 202h1v1h-1zM555 208h1v1h-1zM556 207h1v1h-1zM559 204h1v1h-1zM557 205h1v1h-1zM559 207h1v1h-1zM558 196h1v1h-1zM557 197h1v1h-1zM554 193h1v1h-1zM556 195h1v1h-1zM560 199h1v1h-1zM561 193h1v1h-1zM557 196h1v1h-1zM556 198h1v1h-1zM555 199h1v1h-1zM559 195h1v1h-1zM559 198h1v1h-1zM558 197h1v1h-1zM560 194h1v1h-1zM555 194h1v1h-1zM561 184h1v1h-1zM557 188h1v1h-1zM554 184h1v1h-1zM556 186h1v1h-1zM560 190h1v1h-1zM555 190h1v1h-1zM557 187h1v1h-1zM556 189h1v1h-1zM559 189h1v1h-1zM559 186h1v1h-1zM558 188h1v1h-1zM560 185h1v1h-1zM555 185h1v1h-1zM558 187h1v1h-1zM560 168h1v1h-1zM555 168h1v1h-1zM558 170h1v1h-1zM557 171h1v1h-1zM554 167h1v1h-1zM556 169h1v1h-1zM560 173h1v1h-1zM561 167h1v1h-1zM557 170h1v1h-1zM556 172h1v1h-1zM555 173h1v1h-1zM559 169h1v1h-1zM559 172h1v1h-1zM558 171h1v1h-1zM554 158h1v1h-1zM558 161h1v1h-1zM561 158h1v1h-1zM557 162h1v1h-1zM556 160h1v1h-1zM560 164h1v1h-1zM555 164h1v1h-1zM557 161h1v1h-1zM556 163h1v1h-1zM559 163h1v1h-1zM559 160h1v1h-1zM558 162h1v1h-1zM560 159h1v1h-1zM555 159h1v1h-1zM559 155h1v1h-1zM558 154h1v1h-1zM560 151h1v1h-1zM555 151h1v1h-1zM557 154h1v1h-1zM554 150h1v1h-1zM558 153h1v1h-1zM556 152h1v1h-1zM560 156h1v1h-1zM561 150h1v1h-1zM557 153h1v1h-1zM556 155h1v1h-1zM555 156h1v1h-1zM559 152h1v1h-1zM558 145h1v1h-1zM560 142h1v1h-1zM555 142h1v1h-1zM558 144h1v1h-1zM557 145h1v1h-1zM554 141h1v1h-1zM556 143h1v1h-1zM560 147h1v1h-1zM561 141h1v1h-1zM557 144h1v1h-1zM556 146h1v1h-1zM555 147h1v1h-1zM559 143h1v1h-1zM559 146h1v1h-1zM554 132h1v1h-1zM558 135h1v1h-1zM561 132h1v1h-1zM557 136h1v1h-1zM556 134h1v1h-1zM560 138h1v1h-1zM555 138h1v1h-1zM557 135h1v1h-1zM556 137h1v1h-1zM559 137h1v1h-1zM559 134h1v1h-1zM558 136h1v1h-1zM560 133h1v1h-1zM555 133h1v1h-1zM561 123h1v1h-1zM556 128h1v1h-1zM556 125h1v1h-1zM559 125h1v1h-1zM560 129h1v1h-1zM557 126h1v1h-1zM555 129h1v1h-1zM558 126h1v1h-1zM559 128h1v1h-1zM558 127h1v1h-1zM560 124h1v1h-1zM555 124h1v1h-1zM557 127h1v1h-1zM554 123h1v1h-1zM577 338h1v1h-1zM576 335h1v1h-1zM573 338h1v1h-1zM574 335h1v1h-1zM577 334h1v1h-1zM576 337h1v1h-1zM573 334h1v1h-1zM575 336h1v1h-1zM572 333h1v1h-1zM578 333h1v1h-1zM574 337h1v1h-1zM572 339h1v1h-1zM578 339h1v1h-1zM574 326h1v1h-1zM573 329h1v1h-1zM577 325h1v1h-1zM576 328h1v1h-1zM573 325h1v1h-1zM574 328h1v1h-1zM575 327h1v1h-1zM572 324h1v1h-1zM578 324h1v1h-1zM576 326h1v1h-1zM572 330h1v1h-1zM578 330h1v1h-1zM577 329h1v1h-1zM577 316h1v1h-1zM573 316h1v1h-1zM574 319h1v1h-1zM575 318h1v1h-1zM572 315h1v1h-1zM578 315h1v1h-1zM578 321h1v1h-1zM576 317h1v1h-1zM572 321h1v1h-1zM577 320h1v1h-1zM574 317h1v1h-1zM573 320h1v1h-1zM576 319h1v1h-1zM574 310h1v1h-1zM575 309h1v1h-1zM572 306h1v1h-1zM578 306h1v1h-1zM578 312h1v1h-1zM572 312h1v1h-1zM576 308h1v1h-1zM577 307h1v1h-1zM577 311h1v1h-1zM574 308h1v1h-1zM573 311h1v1h-1zM576 310h1v1h-1zM573 307h1v1h-1zM577 303h1v1h-1zM574 300h1v1h-1zM573 303h1v1h-1zM577 299h1v1h-1zM576 302h1v1h-1zM573 299h1v1h-1zM574 302h1v1h-1zM575 301h1v1h-1zM572 298h1v1h-1zM578 298h1v1h-1zM576 300h1v1h-1zM572 304h1v1h-1zM578 304h1v1h-1zM573 294h1v1h-1zM576 293h1v1h-1zM577 290h1v1h-1zM573 290h1v1h-1zM574 293h1v1h-1zM575 292h1v1h-1zM572 289h1v1h-1zM578 289h1v1h-1zM578 295h1v1h-1zM576 291h1v1h-1zM572 295h1v1h-1zM577 294h1v1h-1zM574 291h1v1h-1zM574 284h1v1h-1zM575 283h1v1h-1zM572 280h1v1h-1zM578 280h1v1h-1zM578 286h1v1h-1zM572 286h1v1h-1zM576 282h1v1h-1zM577 285h1v1h-1zM576 284h1v1h-1zM577 281h1v1h-1zM573 285h1v1h-1zM574 282h1v1h-1zM573 281h1v1h-1zM578 278h1v1h-1zM577 277h1v1h-1zM574 274h1v1h-1zM573 277h1v1h-1zM577 273h1v1h-1zM576 276h1v1h-1zM573 273h1v1h-1zM574 276h1v1h-1zM575 275h1v1h-1zM572 272h1v1h-1zM578 272h1v1h-1zM576 274h1v1h-1zM572 278h1v1h-1zM574 265h1v1h-1zM573 268h1v1h-1zM576 267h1v1h-1zM577 264h1v1h-1zM573 264h1v1h-1zM574 267h1v1h-1zM575 266h1v1h-1zM572 263h1v1h-1zM578 263h1v1h-1zM578 269h1v1h-1zM572 269h1v1h-1zM576 265h1v1h-1zM577 268h1v1h-1zM573 255h1v1h-1zM574 258h1v1h-1zM575 257h1v1h-1zM572 254h1v1h-1zM578 254h1v1h-1zM578 260h1v1h-1zM572 260h1v1h-1zM576 256h1v1h-1zM577 255h1v1h-1zM577 259h1v1h-1zM574 256h1v1h-1zM573 259h1v1h-1zM576 258h1v1h-1zM577 246h1v1h-1zM574 249h1v1h-1zM572 245h1v1h-1zM578 245h1v1h-1zM578 251h1v1h-1zM572 251h1v1h-1zM576 247h1v1h-1zM573 250h1v1h-1zM577 250h1v1h-1zM574 247h1v1h-1zM576 249h1v1h-1zM573 246h1v1h-1zM575 248h1v1h-1zM577 242h1v1h-1zM574 239h1v1h-1zM573 242h1v1h-1zM576 241h1v1h-1zM577 238h1v1h-1zM573 238h1v1h-1zM574 241h1v1h-1zM575 240h1v1h-1zM572 237h1v1h-1zM578 237h1v1h-1zM578 243h1v1h-1zM572 243h1v1h-1zM576 239h1v1h-1zM574 230h1v1h-1zM577 229h1v1h-1zM576 232h1v1h-1zM573 233h1v1h-1zM573 229h1v1h-1zM574 232h1v1h-1zM575 231h1v1h-1zM572 228h1v1h-1zM578 228h1v1h-1zM578 234h1v1h-1zM572 234h1v1h-1zM576 230h1v1h-1zM577 233h1v1h-1zM575 222h1v1h-1zM574 223h1v1h-1zM572 219h1v1h-1zM578 219h1v1h-1zM578 225h1v1h-1zM572 225h1v1h-1zM577 224h1v1h-1zM576 221h1v1h-1zM577 220h1v1h-1zM573 224h1v1h-1zM574 221h1v1h-1zM576 223h1v1h-1zM573 220h1v1h-1zM572 217h1v1h-1zM577 216h1v1h-1zM574 213h1v1h-1zM573 216h1v1h-1zM576 215h1v1h-1zM577 212h1v1h-1zM573 212h1v1h-1zM574 215h1v1h-1zM575 214h1v1h-1zM572 211h1v1h-1zM578 211h1v1h-1zM578 217h1v1h-1zM576 213h1v1h-1zM577 207h1v1h-1zM577 203h1v1h-1zM574 204h1v1h-1zM576 206h1v1h-1zM573 207h1v1h-1zM573 203h1v1h-1zM574 206h1v1h-1zM575 205h1v1h-1zM572 202h1v1h-1zM578 202h1v1h-1zM578 208h1v1h-1zM572 208h1v1h-1zM576 204h1v1h-1zM572 184h1v1h-1zM578 184h1v1h-1zM574 188h1v1h-1zM572 190h1v1h-1zM578 190h1v1h-1zM577 189h1v1h-1zM576 186h1v1h-1zM574 186h1v1h-1zM573 189h1v1h-1zM577 185h1v1h-1zM576 188h1v1h-1zM573 185h1v1h-1zM575 187h1v1h-1zM577 181h1v1h-1zM574 178h1v1h-1zM577 177h1v1h-1zM576 180h1v1h-1zM573 181h1v1h-1zM573 177h1v1h-1zM574 180h1v1h-1zM575 179h1v1h-1zM572 176h1v1h-1zM578 176h1v1h-1zM578 182h1v1h-1zM572 182h1v1h-1zM576 178h1v1h-1zM577 168h1v1h-1zM574 169h1v1h-1zM576 171h1v1h-1zM573 168h1v1h-1zM575 170h1v1h-1zM574 171h1v1h-1zM572 167h1v1h-1zM578 167h1v1h-1zM578 173h1v1h-1zM572 173h1v1h-1zM577 172h1v1h-1zM576 169h1v1h-1zM573 172h1v1h-1zM573 159h1v1h-1zM575 161h1v1h-1zM572 158h1v1h-1zM578 158h1v1h-1zM574 162h1v1h-1zM572 164h1v1h-1zM578 164h1v1h-1zM577 163h1v1h-1zM576 160h1v1h-1zM574 160h1v1h-1zM573 163h1v1h-1zM577 159h1v1h-1zM576 162h1v1h-1zM576 152h1v1h-1zM577 155h1v1h-1zM574 152h1v1h-1zM577 151h1v1h-1zM576 154h1v1h-1zM573 155h1v1h-1zM573 151h1v1h-1zM572 156h1v1h-1zM574 154h1v1h-1zM575 153h1v1h-1zM572 150h1v1h-1zM578 150h1v1h-1zM578 156h1v1h-1zM574 143h1v1h-1zM577 142h1v1h-1zM576 145h1v1h-1zM573 142h1v1h-1zM575 144h1v1h-1zM578 141h1v1h-1zM574 145h1v1h-1zM572 141h1v1h-1zM572 147h1v1h-1zM578 147h1v1h-1zM577 146h1v1h-1zM576 143h1v1h-1zM573 146h1v1h-1zM576 136h1v1h-1zM573 133h1v1h-1zM575 135h1v1h-1zM572 132h1v1h-1zM578 132h1v1h-1zM574 136h1v1h-1zM572 138h1v1h-1zM578 138h1v1h-1zM577 137h1v1h-1zM576 134h1v1h-1zM574 134h1v1h-1zM573 137h1v1h-1zM577 133h1v1h-1zM575 126h1v1h-1zM572 123h1v1h-1zM578 123h1v1h-1zM576 125h1v1h-1zM572 129h1v1h-1zM578 129h1v1h-1zM577 128h1v1h-1zM574 125h1v1h-1zM573 128h1v1h-1zM576 127h1v1h-1zM577 124h1v1h-1zM574 127h1v1h-1zM573 124h1v1h-1zM573 120h1v1h-1zM577 116h1v1h-1zM574 117h1v1h-1zM576 119h1v1h-1zM573 116h1v1h-1zM575 118h1v1h-1zM578 115h1v1h-1zM574 119h1v1h-1zM572 115h1v1h-1zM572 121h1v1h-1zM578 121h1v1h-1zM577 120h1v1h-1zM576 117h1v1h-1zM577 107h1v1h-1zM576 110h1v1h-1zM573 107h1v1h-1zM575 109h1v1h-1zM572 106h1v1h-1zM578 106h1v1h-1zM574 110h1v1h-1zM572 112h1v1h-1zM578 112h1v1h-1zM577 111h1v1h-1zM576 108h1v1h-1zM574 108h1v1h-1zM573 111h1v1h-1zM591 146h1v1h-1zM592 145h1v1h-1zM591 143h1v1h-1zM589 141h1v1h-1zM593 145h1v1h-1zM595 142h1v1h-1zM590 142h1v1h-1zM596 141h1v1h-1zM592 144h1v1h-1zM593 144h1v1h-1zM595 147h1v1h-1zM590 147h1v1h-1zM594 146h1v1h-1zM594 143h1v1h-1zM592 136h1v1h-1zM593 136h1v1h-1zM595 133h1v1h-1zM590 133h1v1h-1zM592 135h1v1h-1zM593 135h1v1h-1zM594 134h1v1h-1zM595 138h1v1h-1zM590 138h1v1h-1zM594 137h1v1h-1zM591 134h1v1h-1zM589 132h1v1h-1zM591 137h1v1h-1zM596 132h1v1h-1zM590 124h1v1h-1zM592 126h1v1h-1zM593 126h1v1h-1zM595 129h1v1h-1zM590 129h1v1h-1zM594 125h1v1h-1zM594 128h1v1h-1zM592 127h1v1h-1zM591 125h1v1h-1zM589 123h1v1h-1zM593 127h1v1h-1zM591 128h1v1h-1zM596 123h1v1h-1zM595 124h1v1h-1zM591 117h1v1h-1zM594 117h1v1h-1zM591 120h1v1h-1zM592 119h1v1h-1zM589 115h1v1h-1zM593 119h1v1h-1zM595 116h1v1h-1zM590 116h1v1h-1zM596 115h1v1h-1zM592 118h1v1h-1zM593 118h1v1h-1zM595 121h1v1h-1zM590 121h1v1h-1zM594 120h1v1h-1zM591 111h1v1h-1zM596 106h1v1h-1zM592 110h1v1h-1zM593 110h1v1h-1zM595 107h1v1h-1zM590 107h1v1h-1zM592 109h1v1h-1zM590 112h1v1h-1zM593 109h1v1h-1zM594 108h1v1h-1zM595 112h1v1h-1zM594 111h1v1h-1zM591 108h1v1h-1zM589 106h1v1h-1zM595 98h1v1h-1zM590 98h1v1h-1zM592 100h1v1h-1zM593 100h1v1h-1zM595 103h1v1h-1zM590 103h1v1h-1zM594 99h1v1h-1zM594 102h1v1h-1zM592 101h1v1h-1zM591 99h1v1h-1zM589 97h1v1h-1zM593 101h1v1h-1zM591 102h1v1h-1zM596 97h1v1h-1zM592 91h1v1h-1zM593 91h1v1h-1zM595 94h1v1h-1zM590 94h1v1h-1zM591 93h1v1h-1zM594 90h1v1h-1zM594 93h1v1h-1zM592 92h1v1h-1zM591 90h1v1h-1zM589 88h1v1h-1zM593 92h1v1h-1zM595 89h1v1h-1zM590 89h1v1h-1zM596 88h1v1h-1zM613 129h1v1h-1zM607 123h1v1h-1zM607 129h1v1h-1zM609 125h1v1h-1zM608 128h1v1h-1zM611 125h1v1h-1zM612 128h1v1h-1zM608 124h1v1h-1zM609 127h1v1h-1zM610 126h1v1h-1zM612 124h1v1h-1zM611 127h1v1h-1zM613 123h1v1h-1zM608 116h1v1h-1zM612 120h1v1h-1zM610 118h1v1h-1zM613 115h1v1h-1zM609 119h1v1h-1zM612 116h1v1h-1zM611 119h1v1h-1zM613 121h1v1h-1zM607 115h1v1h-1zM608 120h1v1h-1zM611 117h1v1h-1zM607 121h1v1h-1zM609 117h1v1h-1zM610 109h1v1h-1zM611 110h1v1h-1zM613 106h1v1h-1zM609 110h1v1h-1zM612 107h1v1h-1zM613 112h1v1h-1zM607 106h1v1h-1zM609 108h1v1h-1zM608 111h1v1h-1zM611 108h1v1h-1zM607 112h1v1h-1zM608 107h1v1h-1zM612 111h1v1h-1zM609 101h1v1h-1zM613 103h1v1h-1zM607 97h1v1h-1zM607 103h1v1h-1zM609 99h1v1h-1zM608 102h1v1h-1zM611 99h1v1h-1zM608 98h1v1h-1zM612 102h1v1h-1zM610 100h1v1h-1zM612 98h1v1h-1zM611 101h1v1h-1zM613 97h1v1h-1zM607 88h1v1h-1zM607 94h1v1h-1zM609 90h1v1h-1zM608 93h1v1h-1zM608 89h1v1h-1zM611 90h1v1h-1zM609 92h1v1h-1zM612 93h1v1h-1zM610 91h1v1h-1zM612 89h1v1h-1zM611 92h1v1h-1zM613 88h1v1h-1zM613 94h1v1h-1zM608 81h1v1h-1zM612 85h1v1h-1zM610 83h1v1h-1zM611 84h1v1h-1zM613 80h1v1h-1zM609 84h1v1h-1zM612 81h1v1h-1zM613 86h1v1h-1zM607 80h1v1h-1zM609 82h1v1h-1zM608 85h1v1h-1zM611 82h1v1h-1zM607 86h1v1h-1zM607 62h1v1h-1zM607 68h1v1h-1zM609 64h1v1h-1zM608 67h1v1h-1zM608 63h1v1h-1zM611 64h1v1h-1zM609 66h1v1h-1zM612 67h1v1h-1zM610 65h1v1h-1zM612 63h1v1h-1zM611 66h1v1h-1zM613 62h1v1h-1zM613 68h1v1h-1zM628 101h1v1h-1zM630 103h1v1h-1zM625 103h1v1h-1zM631 97h1v1h-1zM629 99h1v1h-1zM629 102h1v1h-1zM624 97h1v1h-1zM628 100h1v1h-1zM626 99h1v1h-1zM627 101h1v1h-1zM626 102h1v1h-1zM630 98h1v1h-1zM625 98h1v1h-1zM627 100h1v1h-1zM628 91h1v1h-1zM629 90h1v1h-1zM629 93h1v1h-1zM624 88h1v1h-1zM627 92h1v1h-1zM626 90h1v1h-1zM630 89h1v1h-1zM625 89h1v1h-1zM626 93h1v1h-1zM627 91h1v1h-1zM628 92h1v1h-1zM630 94h1v1h-1zM625 94h1v1h-1zM631 88h1v1h-1zM630 81h1v1h-1zM625 81h1v1h-1zM627 83h1v1h-1zM628 84h1v1h-1zM631 80h1v1h-1zM629 82h1v1h-1zM630 86h1v1h-1zM625 86h1v1h-1zM629 85h1v1h-1zM624 80h1v1h-1zM628 83h1v1h-1zM626 82h1v1h-1zM626 85h1v1h-1zM627 84h1v1h-1zM627 74h1v1h-1zM628 75h1v1h-1zM630 77h1v1h-1zM625 77h1v1h-1zM631 71h1v1h-1zM629 73h1v1h-1zM629 76h1v1h-1zM624 71h1v1h-1zM628 74h1v1h-1zM626 73h1v1h-1zM627 75h1v1h-1zM626 76h1v1h-1zM630 72h1v1h-1zM625 72h1v1h-1zM627 58h1v1h-1zM628 57h1v1h-1zM630 55h1v1h-1zM625 55h1v1h-1zM627 57h1v1h-1zM628 58h1v1h-1zM631 54h1v1h-1zM629 56h1v1h-1zM630 60h1v1h-1zM625 60h1v1h-1zM629 59h1v1h-1zM624 54h1v1h-1zM626 56h1v1h-1zM626 59h1v1h-1zM643 120h1v1h-1zM647 116h1v1h-1zM642 116h1v1h-1zM646 117h1v1h-1zM641 115h1v1h-1zM645 119h1v1h-1zM648 115h1v1h-1zM644 119h1v1h-1zM647 121h1v1h-1zM642 121h1v1h-1zM644 118h1v1h-1zM646 120h1v1h-1zM645 118h1v1h-1zM643 117h1v1h-1zM647 107h1v1h-1zM642 107h1v1h-1zM644 110h1v1h-1zM641 106h1v1h-1zM645 110h1v1h-1zM648 106h1v1h-1zM646 108h1v1h-1zM647 112h1v1h-1zM644 109h1v1h-1zM642 112h1v1h-1zM646 111h1v1h-1zM645 109h1v1h-1zM643 108h1v1h-1zM643 111h1v1h-1zM641 97h1v1h-1zM645 101h1v1h-1zM647 103h1v1h-1zM648 97h1v1h-1zM642 103h1v1h-1zM646 99h1v1h-1zM644 100h1v1h-1zM646 102h1v1h-1zM645 100h1v1h-1zM643 99h1v1h-1zM647 98h1v1h-1zM642 98h1v1h-1zM643 102h1v1h-1zM644 101h1v1h-1zM648 88h1v1h-1zM644 91h1v1h-1zM642 94h1v1h-1zM645 91h1v1h-1zM646 90h1v1h-1zM646 93h1v1h-1zM643 90h1v1h-1zM647 89h1v1h-1zM642 89h1v1h-1zM643 93h1v1h-1zM644 92h1v1h-1zM641 88h1v1h-1zM645 92h1v1h-1zM647 94h1v1h-1zM660 225h1v1h-1zM662 223h1v1h-1zM659 219h1v1h-1zM663 222h1v1h-1zM666 219h1v1h-1zM665 225h1v1h-1zM664 221h1v1h-1zM662 222h1v1h-1zM660 220h1v1h-1zM664 224h1v1h-1zM661 221h1v1h-1zM661 224h1v1h-1zM663 223h1v1h-1zM665 220h1v1h-1zM664 213h1v1h-1zM661 216h1v1h-1zM664 216h1v1h-1zM661 213h1v1h-1zM663 215h1v1h-1zM665 212h1v1h-1zM660 217h1v1h-1zM663 214h1v1h-1zM662 215h1v1h-1zM659 211h1v1h-1zM665 217h1v1h-1zM666 211h1v1h-1zM662 214h1v1h-1zM660 212h1v1h-1zM661 207h1v1h-1zM661 204h1v1h-1zM663 206h1v1h-1zM665 203h1v1h-1zM660 208h1v1h-1zM659 202h1v1h-1zM663 205h1v1h-1zM666 202h1v1h-1zM662 206h1v1h-1zM665 208h1v1h-1zM662 205h1v1h-1zM660 203h1v1h-1zM664 207h1v1h-1zM664 204h1v1h-1zM663 197h1v1h-1zM665 194h1v1h-1zM660 199h1v1h-1zM662 197h1v1h-1zM659 193h1v1h-1zM663 196h1v1h-1zM666 193h1v1h-1zM665 199h1v1h-1zM664 195h1v1h-1zM662 196h1v1h-1zM660 194h1v1h-1zM664 198h1v1h-1zM661 195h1v1h-1zM661 198h1v1h-1zM662 188h1v1h-1zM659 184h1v1h-1zM663 187h1v1h-1zM666 184h1v1h-1zM665 190h1v1h-1zM664 186h1v1h-1zM662 187h1v1h-1zM660 185h1v1h-1zM664 189h1v1h-1zM661 186h1v1h-1zM663 188h1v1h-1zM661 189h1v1h-1zM665 185h1v1h-1zM660 190h1v1h-1zM663 171h1v1h-1zM665 168h1v1h-1zM660 173h1v1h-1zM662 171h1v1h-1zM659 167h1v1h-1zM663 170h1v1h-1zM666 167h1v1h-1zM665 173h1v1h-1zM664 169h1v1h-1zM662 170h1v1h-1zM660 168h1v1h-1zM664 172h1v1h-1zM661 169h1v1h-1zM661 172h1v1h-1zM660 164h1v1h-1zM662 162h1v1h-1zM659 158h1v1h-1zM663 161h1v1h-1zM665 164h1v1h-1zM666 158h1v1h-1zM664 160h1v1h-1zM662 161h1v1h-1zM660 159h1v1h-1zM664 163h1v1h-1zM661 160h1v1h-1zM663 162h1v1h-1zM661 163h1v1h-1zM665 159h1v1h-1zM661 146h1v1h-1zM663 145h1v1h-1zM665 142h1v1h-1zM660 147h1v1h-1zM662 145h1v1h-1zM659 141h1v1h-1zM663 144h1v1h-1zM666 141h1v1h-1zM665 147h1v1h-1zM664 143h1v1h-1zM662 144h1v1h-1zM660 142h1v1h-1zM664 146h1v1h-1zM661 143h1v1h-1zM665 133h1v1h-1zM660 138h1v1h-1zM662 136h1v1h-1zM659 132h1v1h-1zM663 135h1v1h-1zM665 138h1v1h-1zM666 132h1v1h-1zM664 134h1v1h-1zM662 135h1v1h-1zM660 133h1v1h-1zM664 137h1v1h-1zM661 134h1v1h-1zM663 136h1v1h-1zM661 137h1v1h-1zM665 107h1v1h-1zM660 112h1v1h-1zM662 110h1v1h-1zM659 106h1v1h-1zM663 109h1v1h-1zM665 112h1v1h-1zM666 106h1v1h-1zM664 108h1v1h-1zM662 109h1v1h-1zM660 107h1v1h-1zM664 111h1v1h-1zM661 108h1v1h-1zM663 110h1v1h-1zM661 111h1v1h-1zM659 88h1v1h-1zM665 94h1v1h-1zM666 88h1v1h-1zM662 91h1v1h-1zM660 89h1v1h-1zM664 90h1v1h-1zM661 93h1v1h-1zM664 93h1v1h-1zM661 90h1v1h-1zM663 92h1v1h-1zM665 89h1v1h-1zM660 94h1v1h-1zM663 91h1v1h-1zM662 92h1v1h-1zM663 84h1v1h-1zM661 85h1v1h-1zM665 81h1v1h-1zM660 86h1v1h-1zM662 84h1v1h-1zM659 80h1v1h-1zM663 83h1v1h-1zM665 86h1v1h-1zM666 80h1v1h-1zM664 82h1v1h-1zM662 83h1v1h-1zM660 81h1v1h-1zM664 85h1v1h-1zM661 82h1v1h-1zM662 75h1v1h-1zM659 71h1v1h-1zM663 74h1v1h-1zM665 77h1v1h-1zM666 71h1v1h-1zM662 74h1v1h-1zM664 73h1v1h-1zM660 72h1v1h-1zM664 76h1v1h-1zM661 73h1v1h-1zM663 75h1v1h-1zM665 72h1v1h-1zM661 76h1v1h-1zM660 77h1v1h-1zM662 66h1v1h-1zM659 62h1v1h-1zM665 68h1v1h-1zM666 62h1v1h-1zM662 65h1v1h-1zM660 63h1v1h-1zM664 64h1v1h-1zM661 67h1v1h-1zM664 67h1v1h-1zM661 64h1v1h-1zM663 66h1v1h-1zM665 63h1v1h-1zM660 68h1v1h-1zM663 65h1v1h-1z" fill="#0000ff" shape-rendering="crispEdges"/>
<path d="M111 193h1v1h-1zM112 193h1v1h-1zM113 193h1v1h-1zM110 194h1v1h-1zM114 194h1v1h-1zM109 195h1v1h-1zM115 195h1v1h-1zM109 196h1v1h-1zM115 196h1v1h-1zM109 197h1v1h-1zM115 197h1v1h-1zM110 198h1v1h-1zM114 198h1v1h-1zM111 199h1v1h-1zM112 199h1v1h-1zM113 199h1v1h-1zM111 184h1v1h-1zM112 184h1v1h-1zM113 184h1v1h-1zM110 185h1v1h-1zM114 185h1v1h-1zM109 186h1v1h-1zM115 186h1v1h-1zM109 187h1v1h-1zM115 187h1v1h-1zM109 188h1v1h-1zM115 188h1v1h-1zM110 189h1v1h-1zM114 189h1v1h-1zM111 190h1v1h-1zM112 190h1v1h-1zM113 190h1v1h-1zM111 176h1v1h-1zM112 176h1v1h-1zM113 176h1v1h-1zM110 177h1v1h-1zM114 177h1v1h-1zM109 178h1v1h-1zM115 178h1v1h-1zM109 179h1v1h-1zM115 179h1v1h-1zM109 180h1v1h-1zM115 180h1v1h-1zM110 181h1v1h-1zM114 181h1v1h-1zM111 182h1v1h-1zM112 182h1v1h-1zM113 182h1v1h-1zM111 167h1v1h-1zM112 167h1v1h-1zM113 167h1v1h-1zM110 168h1v1h-1zM114 168h1v1h-1zM109 169h1v1h-1zM115 169h1v1h-1zM109 170h1v1h-1zM115 170h1v1h-1zM109 171h1v1h-1zM115 171h1v1h-1zM110 172h1v1h-1zM114 172h1v1h-1zM111 173h1v1h-1zM112 173h1v1h-1zM113 173h1v1h-1zM111 158h1v1h-1zM112 158h1v1h-1zM113 158h1v1h-1zM110 159h1v1h-1zM114 159h1v1h-1zM109 160h1v1h-1zM115 160h1v1h-1zM109 161h1v1h-1zM115 161h1v1h-1zM109 162h1v1h-1zM115 162h1v1h-1zM110 163h1v1h-1zM114 163h1v1h-1zM111 164h1v1h-1zM112 164h1v1h-1zM113 164h1v1h-1zM111 150h1v1h-1zM112 150h1v1h-1zM113 150h1v1h-1zM110 151h1v1h-1zM114 151h1v1h-1zM109 152h1v1h-1zM115 152h1v1h-1zM109 153h1v1h-1zM115 153h1v1h-1zM109 154h1v1h-1zM115 154h1v1h-1zM110 155h1v1h-1zM114 155h1v1h-1zM111 156h1v1h-1zM112 156h1v1h-1zM113 156h1v1h-1zM111 141h1v1h-1zM112 141h1v1h-1zM113 141h1v1h-1zM110 142h1v1h-1zM114 142h1v1h-1zM109 143h1v1h-1zM115 143h1v1h-1zM109 144h1v1h-1zM115 144h1v1h-1zM109 145h1v1h-1zM115 145h1v1h-1zM110 146h1v1h-1zM114 146h1v1h-1zM111 147h1v1h-1zM112 147h1v1h-1zM113 147h1v1h-1zM111 132h1v1h-1zM112 132h1v1h-1zM113 132h1v1h-1zM110 133h1v1h-1zM114 133h1v1h-1zM109 134h1v1h-1zM115 134h1v1h-1zM109 135h1v1h-1zM115 135h1v1h-1zM109 136h1v1h-1zM115 136h1v1h-1zM110 137h1v1h-1zM114 137h1v1h-1zM111 138h1v1h-1zM112 138h1v1h-1zM113 138h1v1h-1zM111 123h1v1h-1zM112 123h1v1h-1zM113 123h1v1h-1zM110 124h1v1h-1zM114 124h1v1h-1zM109 125h1v1h-1zM115 125h1v1h-1zM109 126h1v1h-1zM115 126h1v1h-1zM109 127h1v1h-1zM115 127h1v1h-1zM110 128h1v1h-1zM114 128h1v1h-1zM111 129h1v1h-1zM112 129h1v1h-1zM113 129h1v1h-1zM111 115h1v1h-1zM112 115h1v1h-1zM113 115h1v1h-1zM110 116h1v1h-1zM114 116h1v1h-1zM109 117h1v1h-1zM115 117h1v1h-1zM109 118h1v1h-1zM115 118h1v1h-1zM109 119h1v1h-1zM115 119h1v1h-1zM110 120h1v1h-1zM114 120h1v1h-1zM111 121h1v1h-1zM112 121h1v1h-1zM113 121h1v1h-1zM111 106h1v1h-1zM112 106h1v1h-1zM113 106h1v1h-1zM110 107h1v1h-1zM114 107h1v1h-1zM109 108h1v1h-1zM115 108h1v1h-1zM109 109h1v1h-1zM115 109h1v1h-1zM109 110h1v1h-1zM115 110h1v1h-1zM110 111h1v1h-1zM114 111h1v1h-1zM111 112h1v1h-1zM112 112h1v1h-1zM113 112h1v1h-1zM111 97h1v1h-1zM112 97h1v1h-1zM113 97h1v1h-1zM110 98h1v1h-1zM114 98h1v1h-1zM109 99h1v1h-1zM115 99h1v1h-1zM109 100h1v1h-1zM115 100h1v1h-1zM109 101h1v1h-1zM115 101h1v1h-1zM110 102h1v1h-1zM114 102h1v1h-1zM111 103h1v1h-1zM112 103h1v1h-1zM113 103h1v1h-1zM129 228h1v1h-1zM130 228h1v1h-1zM131 228h1v1h-1zM128 229h1v1h-1zM132 229h1v1h-1zM127 230h1v1h-1zM133 230h1v1h-1zM127 231h1v1h-1zM133 231h1v1h-1zM127 232h1v1h-1zM133 232h1v1h-1zM128 233h1v1h-1zM132 233h1v1h-1zM129 234h1v1h-1zM130 234h1v1h-1zM131 234h1v1h-1zM129 219h1v1h-1zM130 219h1v1h-1zM131 219h1v1h-1zM128 220h1v1h-1zM132 220h1v1h-1zM127 221h1v1h-1zM133 221h1v1h-1zM127 222h1v1h-1zM133 222h1v1h-1zM127 223h1v1h-1zM133 223h1v1h-1zM128 224h1v1h-1zM132 224h1v1h-1zM129 225h1v1h-1zM130 225h1v1h-1zM131 225h1v1h-1zM129 211h1v1h-1zM130 211h1v1h-1zM131 211h1v1h-1zM128 212h1v1h-1zM132 212h1v1h-1zM127 213h1v1h-1zM133 213h1v1h-1zM127 214h1v1h-1zM133 214h1v1h-1zM127 215h1v1h-1zM133 215h1v1h-1zM128 216h1v1h-1zM132 216h1v1h-1zM129 217h1v1h-1zM130 217h1v1h-1zM131 217h1v1h-1zM129 202h1v1h-1zM130 202h1v1h-1zM131 202h1v1h-1zM128 203h1v1h-1zM132 203h1v1h-1zM127 204h1v1h-1zM133 204h1v1h-1zM127 205h1v1h-1zM133 205h1v1h-1zM127 206h1v1h-1zM133 206h1v1h-1zM128 207h1v1h-1zM132 207h1v1h-1zM129 208h1v1h-1zM130 208h1v1h-1zM131 208h1v1h-1zM129 193h1v1h-1zM130 193h1v1h-1zM131 193h1v1h-1zM128 194h1v1h-1zM132 194h1v1h-1zM127 195h1v1h-1zM133 195h1v1h-1zM127 196h1v1h-1zM133 196h1v1h-1zM127 197h1v1h-1zM133 197h1v1h-1zM128 198h1v1h-1zM132 198h1v1h-1zM129 199h1v1h-1zM130 199h1v1h-1zM131 199h1v1h-1zM129 184h1v1h-1zM130 184h1v1h-1zM131 184h1v1h-1zM128 185h1v1h-1zM132 185h1v1h-1zM127 186h1v1h-1zM133 186h1v1h-1zM127 187h1v1h-1zM133 187h1v1h-1zM127 188h1v1h-1zM133 188h1v1h-1zM128 189h1v1h-1zM132 189h1v1h-1zM129 190h1v1h-1zM130 190h1v1h-1zM131 190h1v1h-1zM129 176h1v1h-1zM130 176h1v1h-1zM131 176h1v1h-1zM128 177h1v1h-1zM132 177h1v1h-1zM127 178h1v1h-1zM133 178h1v1h-1zM127 179h1v1h-1zM133 179h1v1h-1zM127 180h1v1h-1zM133 180h1v1h-1zM128 181h1v1h-1zM132 181h1v1h-1zM129 182h1v1h-1zM130 182h1v1h-1zM131 182h1v1h-1zM129 167h1v1h-1zM130 167h1v1h-1zM131 167h1v1h-1zM128 168h1v1h-1zM132 168h1v1h-1zM127 169h1v1h-1zM133 169h1v1h-1zM127 170h1v1h-1zM133 170h1v1h-1zM127 171h1v1h-1zM133 171h1v1h-1zM128 172h1v1h-1zM132 172h1v1h-1zM129 173h1v1h-1zM130 173h1v1h-1zM131 173h1v1h-1zM129 158h1v1h-1zM130 158h1v1h-1zM131 158h1v1h-1zM128 159h1v1h-1zM132 159h1v1h-1zM127 160h1v1h-1zM133 160h1v1h-1zM127 161h1v1h-1zM133 161h1v1h-1zM127 162h1v1h-1zM133 162h1v1h-1zM128 163h1v1h-1zM132 163h1v1h-1zM129 164h1v1h-1zM130 164h1v1h-1zM131 164h1v1h-1zM146 228h1v1h-1zM147 228h1v1h-1zM148 228h1v1h-1zM145 229h1v1h-1zM149 229h1v1h-1zM144 230h1v1h-1zM150 230h1v1h-1zM144 231h1v1h-1zM150 231h1v1h-1zM144 232h1v1h-1zM150 232h1v1h-1zM145 233h1v1h-1zM149 233h1v1h-1zM146 234h1v1h-1zM147 234h1v1h-1zM148 234h1v1h-1zM146 219h1v1h-1zM147 219h1v1h-1zM148 219h1v1h-1zM145 220h1v1h-1zM149 220h1v1h-1zM144 221h1v1h-1zM150 221h1v1h-1zM144 222h1v1h-1zM150 222h1v1h-1zM144 223h1v1h-1zM150 223h1v1h-1zM145 224h1v1h-1zM149 224h1v1h-1zM146 225h1v1h-1zM147 225h1v1h-1zM148 225h1v1h-1zM146 211h1v1h-1zM147 211h1v1h-1zM148 211h1v1h-1zM145 212h1v1h-1zM149 212h1v1h-1zM144 213h1v1h-1zM150 213h1v1h-1zM144 214h1v1h-1zM150 214h1v1h-1zM144 215h1v1h-1zM150 215h1v1h-1zM145 216h1v1h-1zM149 216h1v1h-1zM146 217h1v1h-1zM147 217h1v1h-1zM148 217h1v1h-1zM163 167h1v1h-1zM164 167h1v1h-1zM165 167h1v1h-1zM162 168h1v1h-1zM166 168h1v1h-1zM161 169h1v1h-1zM167 169h1v1h-1zM161 170h1v1h-1zM167 170h1v1h-1zM161 171h1v1h-1zM167 171h1v1h-1zM162 172h1v1h-1zM166 172h1v1h-1zM163 173h1v1h-1zM164 173h1v1h-1zM165 173h1v1h-1zM163 158h1v1h-1zM164 158h1v1h-1zM165 158h1v1h-1zM162 159h1v1h-1zM166 159h1v1h-1zM161 160h1v1h-1zM167 160h1v1h-1zM161 161h1v1h-1zM167 161h1v1h-1zM161 162h1v1h-1zM167 162h1v1h-1zM162 163h1v1h-1zM166 163h1v1h-1zM163 164h1v1h-1zM164 164h1v1h-1zM165 164h1v1h-1zM163 150h1v1h-1zM164 150h1v1h-1zM165 150h1v1h-1zM162 151h1v1h-1zM166 151h1v1h-1zM161 152h1v1h-1zM167 152h1v1h-1zM161 153h1v1h-1zM167 153h1v1h-1zM161 154h1v1h-1zM167 154h1v1h-1zM162 155h1v1h-1zM166 155h1v1h-1zM163 156h1v1h-1zM164 156h1v1h-1zM165 156h1v1h-1zM181 193h1v1h-1zM182 193h1v1h-1zM183 193h1v1h-1zM180 194h1v1h-1zM184 194h1v1h-1zM179 195h1v1h-1zM185 195h1v1h-1zM179 196h1v1h-1zM185 196h1v1h-1zM179 197h1v1h-1zM185 197h1v1h-1zM180 198h1v1h-1zM184 198h1v1h-1zM181 199h1v1h-1zM182 199h1v1h-1zM183 199h1v1h-1zM181 184h1v1h-1zM182 184h1v1h-1zM183 184h1v1h-1zM180 185h1v1h-1zM184 185h1v1h-1zM179 186h1v1h-1zM185 186h1v1h-1zM179 187h1v1h-1zM185 187h1v1h-1zM179 188h1v1h-1zM185 188h1v1h-1zM180 189h1v1h-1zM184 189h1v1h-1zM181 190h1v1h-1zM182 190h1v1h-1zM183 190h1v1h-1zM181 176h1v1h-1zM182 176h1v1h-1zM183 176h1v1h-1zM180 177h1v1h-1zM184 177h1v1h-1zM179 178h1v1h-1zM185 178h1v1h-1zM179 179h1v1h-1zM185 179h1v1h-1zM179 180h1v1h-1zM185 180h1v1h-1zM180 181h1v1h-1zM184 181h1v1h-1zM181 182h1v1h-1zM182 182h1v1h-1zM183 182h1v1h-1zM181 167h1v1h-1zM182 167h1v1h-1zM183 167h1v1h-1zM180 168h1v1h-1zM184 168h1v1h-1zM179 169h1v1h-1zM185 169h1v1h-1zM179 170h1v1h-1zM185 170h1v1h-1zM179 171h1v1h-1zM185 171h1v1h-1zM180 172h1v1h-1zM184 172h1v1h-1zM181 173h1v1h-1zM182 173h1v1h-1zM183 173h1v1h-1zM181 158h1v1h-1zM182 158h1v1h-1zM183 158h1v1h-1zM180 159h1v1h-1zM184 159h1v1h-1zM179 160h1v1h-1zM185 160h1v1h-1zM179 161h1v1h-1zM185 161h1v1h-1zM179 162h1v1h-1zM185 162h1v1h-1zM180 163h1v1h-1zM184 163h1v1h-1zM181 164h1v1h-1zM182 164h1v1h-1zM183 164h1v1h-1zM181 150h1v1h-1zM182 150h1v1h-1zM183 150h1v1h-1zM180 151h1v1h-1zM184 151h1v1h-1zM179 152h1v1h-1zM185 152h1v1h-1zM179 153h1v1h-1zM185 153h1v1h-1zM179 154h1v1h-1zM185 154h1v1h-1zM180 155h1v1h-1zM184 155h1v1h-1zM181 156h1v1h-1zM182 156h1v1h-1zM183 156h1v1h-1zM198 263h1v1h-1zM199 263h1v1h-1zM200 263h1v1h-1zM197 264h1v1h-1zM201 264h1v1h-1zM196 265h1v1h-1zM202 265h1v1h-1zM196 266h1v1h-1zM202 266h1v1h-1zM196 267h1v1h-1zM202 267h1v1h-1zM197 268h1v1h-1zM201 268h1v1h-1zM198 269h1v1h-1zM199 269h1v1h-1zM200 269h1v1h-1zM198 254h1v1h-1zM199 254h1v1h-1zM200 254h1v1h-1zM197 255h1v1h-1zM201 255h1v1h-1zM196 256h1v1h-1zM202 256h1v1h-1zM196 257h1v1h-1zM202 257h1v1h-1zM196 258h1v1h-1zM202 258h1v1h-1zM197 259h1v1h-1zM201 259h1v1h-1zM198 260h1v1h-1zM199 260h1v1h-1zM200 260h1v1h-1zM198 245h1v1h-1zM199 245h1v1h-1zM200 245h1v1h-1zM197 246h1v1h-1zM201 246h1v1h-1zM196 247h1v1h-1zM202 247h1v1h-1zM196 248h1v1h-1zM202 248h1v1h-1zM196 249h1v1h-1zM202 249h1v1h-1zM197 250h1v1h-1zM201 250h1v1h-1zM198 251h1v1h-1zM199 251h1v1h-1zM200 251h1v1h-1zM198 237h1v1h-1zM199 237h1v1h-1zM200 237h1v1h-1zM197 238h1v1h-1zM201 238h1v1h-1zM196 239h1v1h-1zM202 239h1v1h-1zM196 240h1v1h-1zM202 240h1v1h-1zM196 241h1v1h-1zM202 241h1v1h-1zM197 242h1v1h-1zM201 242h1v1h-1zM198 243h1v1h-1zM199 243h1v1h-1zM200 243h1v1h-1zM198 228h1v1h-1zM199 228h1v1h-1zM200 228h1v1h-1zM197 229h1v1h-1zM201 229h1v1h-1zM196 230h1v1h-1zM202 230h1v1h-1zM196 231h1v1h-1zM202 231h1v1h-1zM196 232h1v1h-1zM202 232h1v1h-1zM197 233h1v1h-1zM201 233h1v1h-1zM198 234h1v1h-1zM199 234h1v1h-1zM200 234h1v1h-1zM198 219h1v1h-1zM199 219h1v1h-1zM200 219h1v1h-1zM197 220h1v1h-1zM201 220h1v1h-1zM196 221h1v1h-1zM202 221h1v1h-1zM196 222h1v1h-1zM202 222h1v1h-1zM196 223h1v1h-1zM202 223h1v1h-1zM197 224h1v1h-1zM201 224h1v1h-1zM198 225h1v1h-1zM199 225h1v1h-1zM200 225h1v1h-1zM198 211h1v1h-1zM199 211h1v1h-1zM200 211h1v1h-1zM197 212h1v1h-1zM201 212h1v1h-1zM196 213h1v1h-1zM202 213h1v1h-1zM196 214h1v1h-1zM202 214h1v1h-1zM196 215h1v1h-1zM202 215h1v1h-1zM197 216h1v1h-1zM201 216h1v1h-1zM198 217h1v1h-1zM199 217h1v1h-1zM200 217h1v1h-1zM198 202h1v1h-1zM199 202h1v1h-1zM200 202h1v1h-1zM197 203h1v1h-1zM201 203h1v1h-1zM196 204h1v1h-1zM202 204h1v1h-1zM196 205h1v1h-1zM202 205h1v1h-1zM196 206h1v1h-1zM202 206h1v1h-1zM197 207h1v1h-1zM201 207h1v1h-1zM198 208h1v1h-1zM199 208h1v1h-1zM200 208h1v1h-1zM198 193h1v1h-1zM199 193h1v1h-1zM200 193h1v1h-1zM197 194h1v1h-1zM201 194h1v1h-1zM196 195h1v1h-1zM202 195h1v1h-1zM196 196h1v1h-1zM202 196h1v1h-1zM196 197h1v1h-1zM202 197h1v1h-1zM197 198h1v1h-1zM201 198h1v1h-1zM198 199h1v1h-1zM199 199h1v1h-1zM200 199h1v1h-1zM198 184h1v1h-1zM199 184h1v1h-1zM200 184h1v1h-1zM197 185h1v1h-1zM201 185h1v1h-1zM196 186h1v1h-1zM202 186h1v1h-1zM196 187h1v1h-1zM202 187h1v1h-1zM196 188h1v1h-1zM202 188h1v1h-1zM197 189h1v1h-1zM201 189h1v1h-1zM198 190h1v1h-1zM199 190h1v1h-1zM200 190h1v1h-1zM198 176h1v1h-1zM199 176h1v1h-1zM200 176h1v1h-1zM197 177h1v1h-1zM201 177h1v1h-1zM196 178h1v1h-1zM202 178h1v1h-1zM196 179h1v1h-1zM202 179h1v1h-1zM196 180h1v1h-1zM202 180h1v1h-1zM197 181h1v1h-1zM201 181h1v1h-1zM198 182h1v1h-1zM199 182h1v1h-1zM200 182h1v1h-1zM198 167h1v1h-1zM199 167h1v1h-1zM200 167h1v1h-1zM197 168h1v1h-1zM201 168h1v1h-1zM196 169h1v1h-1zM202 169h1v1h-1zM196 170h1v1h-1zM202 170h1v1h-1zM196 171h1v1h-1zM202 171h1v1h-1zM197 172h1v1h-1zM201 172h1v1h-1zM198 173h1v1h-1zM199 173h1v1h-1zM200 173h1v1h-1zM198 158h1v1h-1zM199 158h1v1h-1zM200 158h1v1h-1zM197 159h1v1h-1zM201 159h1v1h-1zM196 160h1v1h-1zM202 160h1v1h-1zM196 161h1v1h-1zM202 161h1v1h-1zM196 162h1v1h-1zM202 162h1v1h-1zM197 163h1v1h-1zM201 163h1v1h-1zM198 164h1v1h-1zM199 164h1v1h-1zM200 164h1v1h-1zM198 150h1v1h-1zM199 150h1v1h-1zM200 150h1v1h-1zM197 151h1v1h-1zM201 151h1v1h-1zM196 152h1v1h-1zM202 152h1v1h-1zM196 153h1v1h-1zM202 153h1v1h-1zM196 154h1v1h-1zM202 154h1v1h-1zM197 155h1v1h-1zM201 155h1v1h-1zM198 156h1v1h-1zM199 156h1v1h-1zM200 156h1v1h-1zM198 141h1v1h-1zM199 141h1v1h-1zM200 141h1v1h-1zM197 142h1v1h-1zM201 142h1v1h-1zM196 143h1v1h-1zM202 143h1v1h-1zM196 144h1v1h-1zM202 144h1v1h-1zM196 145h1v1h-1zM202 145h1v1h-1zM197 146h1v1h-1zM201 146h1v1h-1zM198 147h1v1h-1zM199 147h1v1h-1zM200 147h1v1h-1zM216 263h1v1h-1zM217 263h1v1h-1zM218 263h1v1h-1zM215 264h1v1h-1zM219 264h1v1h-1zM214 265h1v1h-1zM220 265h1v1h-1zM214 266h1v1h-1zM220 266h1v1h-1zM214 267h1v1h-1zM220 267h1v1h-1zM215 268h1v1h-1zM219 268h1v1h-1zM216 269h1v1h-1zM217 269h1v1h-1zM218 269h1v1h-1zM216 254h1v1h-1zM217 254h1v1h-1zM218 254h1v1h-1zM215 255h1v1h-1zM219 255h1v1h-1zM214 256h1v1h-1zM220 256h1v1h-1zM214 257h1v1h-1zM220 257h1v1h-1zM214 258h1v1h-1zM220 258h1v1h-1zM215 259h1v1h-1zM219 259h1v1h-1zM216 260h1v1h-1zM217 260h1v1h-1zM218 260h1v1h-1zM216 245h1v1h-1zM217 245h1v1h-1zM218 245h1v1h-1zM215 246h1v1h-1zM219 246h1v1h-1zM214 247h1v1h-1zM220 247h1v1h-1zM214 248h1v1h-1zM220 248h1v1h-1zM214 249h1v1h-1zM220 249h1v1h-1zM215 250h1v1h-1zM219 250h1v1h-1zM216 251h1v1h-1zM217 251h1v1h-1zM218 251h1v1h-1zM216 237h1v1h-1zM217 237h1v1h-1zM218 237h1v1h-1zM215 238h1v1h-1zM219 238h1v1h-1zM214 239h1v1h-1zM220 239h1v1h-1zM214 240h1v1h-1zM220 240h1v1h-1zM214 241h1v1h-1zM220 241h1v1h-1zM215 242h1v1h-1zM219 242h1v1h-1zM216 243h1v1h-1zM217 243h1v1h-1zM218 243h1v1h-1zM216 219h1v1h-1zM217 219h1v1h-1zM218 219h1v1h-1zM215 220h1v1h-1zM219 220h1v1h-1zM214 221h1v1h-1zM220 221h1v1h-1zM214 222h1v1h-1zM220 222h1v1h-1zM214 223h1v1h-1zM220 223h1v1h-1zM215 224h1v1h-1zM219 224h1v1h-1zM216 225h1v1h-1zM217 225h1v1h-1zM218 225h1v1h-1zM216 211h1v1h-1zM217 211h1v1h-1zM218 211h1v1h-1zM215 212h1v1h-1zM219 212h1v1h-1zM214 213h1v1h-1zM220 213h1v1h-1zM214 214h1v1h-1zM220 214h1v1h-1zM214 215h1v1h-1zM220 215h1v1h-1zM215 216h1v1h-1zM219 216h1v1h-1zM216 217h1v1h-1zM217 217h1v1h-1zM218 217h1v1h-1zM216 202h1v1h-1zM217 202h1v1h-1zM218 202h1v1h-1zM215 203h1v1h-1zM219 203h1v1h-1zM214 204h1v1h-1zM220 204h1v1h-1zM214 205h1v1h-1zM220 205h1v1h-1zM214 206h1v1h-1zM220 206h1v1h-1zM215 207h1v1h-1zM219 207h1v1h-1zM216 208h1v1h-1zM217 208h1v1h-1zM218 208h1v1h-1zM233 167h1v1h-1zM234 167h1v1h-1zM235 167h1v1h-1zM232 168h1v1h-1zM236 168h1v1h-1zM231 169h1v1h-1zM237 169h1v1h-1zM231 170h1v1h-1zM237 170h1v1h-1zM231 171h1v1h-1zM237 171h1v1h-1zM232 172h1v1h-1zM236 172h1v1h-1zM233 173h1v1h-1zM234 173h1v1h-1zM235 173h1v1h-1zM233 158h1v1h-1zM234 158h1v1h-1zM235 158h1v1h-1zM232 159h1v1h-1zM236 159h1v1h-1zM231 160h1v1h-1zM237 160h1v1h-1zM231 161h1v1h-1zM237 161h1v1h-1zM231 162h1v1h-1zM237 162h1v1h-1zM232 163h1v1h-1zM236 163h1v1h-1zM233 164h1v1h-1zM234 164h1v1h-1zM235 164h1v1h-1zM251 263h1v1h-1zM252 263h1v1h-1zM253 263h1v1h-1zM250 264h1v1h-1zM254 264h1v1h-1zM249 265h1v1h-1zM255 265h1v1h-1zM249 266h1v1h-1zM255 266h1v1h-1zM249 267h1v1h-1zM255 267h1v1h-1zM250 268h1v1h-1zM254 268h1v1h-1zM251 269h1v1h-1zM252 269h1v1h-1zM253 269h1v1h-1zM251 254h1v1h-1zM252 254h1v1h-1zM253 254h1v1h-1zM250 255h1v1h-1zM254 255h1v1h-1zM249 256h1v1h-1zM255 256h1v1h-1zM249 257h1v1h-1zM255 257h1v1h-1zM249 258h1v1h-1zM255 258h1v1h-1zM250 259h1v1h-1zM254 259h1v1h-1zM251 260h1v1h-1zM252 260h1v1h-1zM253 260h1v1h-1zM251 245h1v1h-1zM252 245h1v1h-1zM253 245h1v1h-1zM250 246h1v1h-1zM254 246h1v1h-1zM249 247h1v1h-1zM255 247h1v1h-1zM249 248h1v1h-1zM255 248h1v1h-1zM249 249h1v1h-1zM255 249h1v1h-1zM250 250h1v1h-1zM254 250h1v1h-1zM251 251h1v1h-1zM252 251h1v1h-1zM253 251h1v1h-1zM251 237h1v1h-1zM252 237h1v1h-1zM253 237h1v1h-1zM250 238h1v1h-1zM254 238h1v1h-1zM249 239h1v1h-1zM255 239h1v1h-1zM249 240h1v1h-1zM255 240h1v1h-1zM249 241h1v1h-1zM255 241h1v1h-1zM250 242h1v1h-1zM254 242h1v1h-1zM251 243h1v1h-1zM252 243h1v1h-1zM253 243h1v1h-1zM251 228h1v1h-1zM252 228h1v1h-1zM253 228h1v1h-1zM250 229h1v1h-1zM254 229h1v1h-1zM249 230h1v1h-1zM255 230h1v1h-1zM249 231h1v1h-1zM255 231h1v1h-1zM249 232h1v1h-1zM255 232h1v1h-1zM250 233h1v1h-1zM254 233h1v1h-1zM251 234h1v1h-1zM252 234h1v1h-1zM253 234h1v1h-1zM251 219h1v1h-1zM252 219h1v1h-1zM253 219h1v1h-1zM250 220h1v1h-1zM254 220h1v1h-1zM249 221h1v1h-1zM255 221h1v1h-1zM249 222h1v1h-1zM255 222h1v1h-1zM249 223h1v1h-1zM255 223h1v1h-1zM250 224h1v1h-1zM254 224h1v1h-1zM251 225h1v1h-1zM252 225h1v1h-1zM253 225h1v1h-1zM251 211h1v1h-1zM252 211h1v1h-1zM253 211h1v1h-1zM250 212h1v1h-1zM254 212h1v1h-1zM249 213h1v1h-1zM255 213h1v1h-1zM249 214h1v1h-1zM255 214h1v1h-1zM249 215h1v1h-1zM255 215h1v1h-1zM250 216h1v1h-1zM254 216h1v1h-1zM251 217h1v1h-1zM252 217h1v1h-1zM253 217h1v1h-1zM251 202h1v1h-1zM252 202h1v1h-1zM253 202h1v1h-1zM250 203h1v1h-1zM254 203h1v1h-1zM249 204h1v1h-1zM255 204h1v1h-1zM249 205h1v1h-1zM255 205h1v1h-1zM249 206h1v1h-1zM255 206h1v1h-1zM250 207h1v1h-1zM254 207h1v1h-1zM251 208h1v1h-1zM252 208h1v1h-1zM253 208h1v1h-1zM251 193h1v1h-1zM252 193h1v1h-1zM253 193h1v1h-1zM250 194h1v1h-1zM254 194h1v1h-1zM249 195h1v1h-1zM255 195h1v1h-1zM249 196h1v1h-1zM255 196h1v1h-1zM249 197h1v1h-1zM255 197h1v1h-1zM250 198h1v1h-1zM254 198h1v1h-1zM251 199h1v1h-1zM252 199h1v1h-1zM253 199h1v1h-1zM251 184h1v1h-1zM252 184h1v1h-1zM253 184h1v1h-1zM250 185h1v1h-1zM254 185h1v1h-1zM249 186h1v1h-1zM255 186h1v1h-1zM249 187h1v1h-1zM255 187h1v1h-1zM249 188h1v1h-1zM255 188h1v1h-1zM250 189h1v1h-1zM254 189h1v1h-1zM251 190h1v1h-1zM252 190h1v1h-1zM253 190h1v1h-1zM251 176h1v1h-1zM252 176h1v1h-1zM253 176h1v1h-1zM250 177h1v1h-1zM254 177h1v1h-1zM249 178h1v1h-1zM255 178h1v1h-1zM249 179h1v1h-1zM255 179h1v1h-1zM249 180h1v1h-1zM255 180h1v1h-1zM250 181h1v1h-1zM254 181h1v1h-1zM251 182h1v1h-1zM252 182h1v1h-1zM253 182h1v1h-1zM251 167h1v1h-1zM252 167h1v1h-1zM253 167h1v1h-1zM250 168h1v1h-1zM254 168h1v1h-1zM249 169h1v1h-1zM255 169h1v1h-1zM249 170h1v1h-1zM255 170h1v1h-1zM249 171h1v1h-1zM255 171h1v1h-1zM250 172h1v1h-1zM254 172h1v1h-1zM251 173h1v1h-1zM252 173h1v1h-1zM253 173h1v1h-1zM251 158h1v1h-1zM252 158h1v1h-1zM253 158h1v1h-1zM250 159h1v1h-1zM254 159h1v1h-1zM249 160h1v1h-1zM255 160h1v1h-1zM249 161h1v1h-1zM255 161h1v1h-1zM249 162h1v1h-1zM255 162h1v1h-1zM250 163h1v1h-1zM254 163h1v1h-1zM251 164h1v1h-1zM252 164h1v1h-1zM253 164h1v1h-1zM251 150h1v1h-1zM252 150h1v1h-1zM253 150h1v1h-1zM250 151h1v1h-1zM254 151h1v1h-1zM249 152h1v1h-1zM255 152h1v1h-1zM249 153h1v1h-1zM255 153h1v1h-1zM249 154h1v1h-1zM255 154h1v1h-1zM250 155h1v1h-1zM254 155h1v1h-1zM251 156h1v1h-1zM252 156h1v1h-1zM253 156h1v1h-1zM251 141h1v1h-1zM252 141h1v1h-1zM253 141h1v1h-1zM250 142h1v1h-1zM254 142h1v1h-1zM249 143h1v1h-1zM255 143h1v1h-1zM249 144h1v1h-1zM255 144h1v1h-1zM249 145h1v1h-1zM255 145h1v1h-1zM250 146h1v1h-1zM254 146h1v1h-1zM251 147h1v1h-1zM252 147h1v1h-1zM253 147h1v1h-1zM251 132h1v1h-1zM252 132h1v1h-1zM253 132h1v1h-1zM250 133h1v1h-1zM254 133h1v1h-1zM249 134h1v1h-1zM255 134h1v1h-1zM249 135h1v1h-1zM255 135h1v1h-1zM249 136h1v1h-1zM255 136h1v1h-1zM250 137h1v1h-1zM254 137h1v1h-1zM251 138h1v1h-1zM252 138h1v1h-1zM253 138h1v1h-1zM251 123h1v1h-1zM252 123h1v1h-1zM253 123h1v1h-1zM250 124h1v1h-1zM254 124h1v1h-1zM249 125h1v1h-1zM255 125h1v1h-1zM249 126h1v1h-1zM255 126h1v1h-1zM249 127h1v1h-1zM255 127h1v1h-1zM250 128h1v1h-1zM254 128h1v1h-1zM251 129h1v1h-1zM252 129h1v1h-1zM253 129h1v1h-1zM268 219h1v1h-1zM269 219h1v1h-1zM270 219h1v1h-1zM267 220h1v1h-1zM271 220h1v1h-1zM266 221h1v1h-1zM272 221h1v1h-1zM266 222h1v1h-1zM272 222h1v1h-1zM266 223h1v1h-1zM272 223h1v1h-1zM267 224h1v1h-1zM271 224h1v1h-1zM268 225h1v1h-1zM269 225h1v1h-1zM270 225h1v1h-1zM268 211h1v1h-1zM269 211h1v1h-1zM270 211h1v1h-1zM267 212h1v1h-1zM271 212h1v1h-1zM266 213h1v1h-1zM272 213h1v1h-1zM266 214h1v1h-1zM272 214h1v1h-1zM266 215h1v1h-1zM272 215h1v1h-1zM267 216h1v1h-1zM271 216h1v1h-1zM268 217h1v1h-1zM269 217h1v1h-1zM270 217h1v1h-1zM268 202h1v1h-1zM269 202h1v1h-1zM270 202h1v1h-1zM267 203h1v1h-1zM271 203h1v1h-1zM266 204h1v1h-1zM272 204h1v1h-1zM266 205h1v1h-1zM272 205h1v1h-1zM266 206h1v1h-1zM272 206h1v1h-1zM267 207h1v1h-1zM271 207h1v1h-1zM268 208h1v1h-1zM269 208h1v1h-1zM270 208h1v1h-1zM268 193h1v1h-1zM269 193h1v1h-1zM270 193h1v1h-1zM267 194h1v1h-1zM271 194h1v1h-1zM266 195h1v1h-1zM272 195h1v1h-1zM266 196h1v1h-1zM272 196h1v1h-1zM266 197h1v1h-1zM272 197h1v1h-1zM267 198h1v1h-1zM271 198h1v1h-1zM268 199h1v1h-1zM269 199h1v1h-1zM270 199h1v1h-1zM268 184h1v1h-1zM269 184h1v1h-1zM270 184h1v1h-1zM267 185h1v1h-1zM271 185h1v1h-1zM266 186h1v1h-1zM272 186h1v1h-1zM266 187h1v1h-1zM272 187h1v1h-1zM266 188h1v1h-1zM272 188h1v1h-1zM267 189h1v1h-1zM271 189h1v1h-1zM268 190h1v1h-1zM269 190h1v1h-1zM270 190h1v1h-1zM268 176h1v1h-1zM269 176h1v1h-1zM270 176h1v1h-1zM267 177h1v1h-1zM271 177h1v1h-1zM266 178h1v1h-1zM272 178h1v1h-1zM266 179h1v1h-1zM272 179h1v1h-1zM266 180h1v1h-1zM272 180h1v1h-1zM267 181h1v1h-1zM271 181h1v1h-1zM268 182h1v1h-1zM269 182h1v1h-1zM270 182h1v1h-1zM268 167h1v1h-1zM269 167h1v1h-1zM270 167h1v1h-1zM267 168h1v1h-1zM271 168h1v1h-1zM266 169h1v1h-1zM272 169h1v1h-1zM266 170h1v1h-1zM272 170h1v1h-1zM266 171h1v1h-1zM272 171h1v1h-1zM267 172h1v1h-1zM271 172h1v1h-1zM268 173h1v1h-1zM269 173h1v1h-1zM270 173h1v1h-1zM268 158h1v1h-1zM269 158h1v1h-1zM270 158h1v1h-1zM267 159h1v1h-1zM271 159h1v1h-1zM266 160h1v1h-1zM272 160h1v1h-1zM266 161h1v1h-1zM272 161h1v1h-1zM266 162h1v1h-1zM272 162h1v1h-1zM267 163h1v1h-1zM271 163h1v1h-1zM268 164h1v1h-1zM269 164h1v1h-1zM270 164h1v1h-1zM268 150h1v1h-1zM269 150h1v1h-1zM270 150h1v1h-1zM267 151h1v1h-1zM271 151h1v1h-1zM266 152h1v1h-1zM272 152h1v1h-1zM266 153h1v1h-1zM272 153h1v1h-1zM266 154h1v1h-1zM272 154h1v1h-1zM267 155h1v1h-1zM271 155h1v1h-1zM268 156h1v1h-1zM269 156h1v1h-1zM270 156h1v1h-1zM268 141h1v1h-1zM269 141h1v1h-1zM270 141h1v1h-1zM267 142h1v1h-1zM271 142h1v1h-1zM266 143h1v1h-1zM272 143h1v1h-1zM266 144h1v1h-1zM272 144h1v1h-1zM266 145h1v1h-1zM272 145h1v1h-1zM267 146h1v1h-1zM271 146h1v1h-1zM268 147h1v1h-1zM269 147h1v1h-1zM270 147h1v1h-1zM286 254h1v1h-1zM287 254h1v1h-1zM288 254h1v1h-1zM285 255h1v1h-1zM289 255h1v1h-1zM284 256h1v1h-1zM290 256h1v1h-1zM284 257h1v1h-1zM290 257h1v1h-1zM284 258h1v1h-1zM290 258h1v1h-1zM285 259h1v1h-1zM289 259h1v1h-1zM286 260h1v1h-1zM287 260h1v1h-1zM288 260h1v1h-1zM286 245h1v1h-1zM287 245h1v1h-1zM288 245h1v1h-1zM285 246h1v1h-1zM289 246h1v1h-1zM284 247h1v1h-1zM290 247h1v1h-1zM284 248h1v1h-1zM290 248h1v1h-1zM284 249h1v1h-1zM290 249h1v1h-1zM285 250h1v1h-1zM289 250h1v1h-1zM286 251h1v1h-1zM287 251h1v1h-1zM288 251h1v1h-1zM286 237h1v1h-1zM287 237h1v1h-1zM288 237h1v1h-1zM285 238h1v1h-1zM289 238h1v1h-1zM284 239h1v1h-1zM290 239h1v1h-1zM284 240h1v1h-1zM290 240h1v1h-1zM284 241h1v1h-1zM290 241h1v1h-1zM285 242h1v1h-1zM289 242h1v1h-1zM286 243h1v1h-1zM287 243h1v1h-1zM288 243h1v1h-1zM286 228h1v1h-1zM287 228h1v1h-1zM288 228h1v1h-1zM285 229h1v1h-1zM289 229h1v1h-1zM284 230h1v1h-1zM290 230h1v1h-1zM284 231h1v1h-1zM290 231h1v1h-1zM284 232h1v1h-1zM290 232h1v1h-1zM285 233h1v1h-1zM289 233h1v1h-1zM286 234h1v1h-1zM287 234h1v1h-1zM288 234h1v1h-1zM286 219h1v1h-1zM287 219h1v1h-1zM288 219h1v1h-1zM285 220h1v1h-1zM289 220h1v1h-1zM284 221h1v1h-1zM290 221h1v1h-1zM284 222h1v1h-1zM290 222h1v1h-1zM284 223h1v1h-1zM290 223h1v1h-1zM285 224h1v1h-1zM289 224h1v1h-1zM286 225h1v1h-1zM287 225h1v1h-1zM288 225h1v1h-1zM286 211h1v1h-1zM287 211h1v1h-1zM288 211h1v1h-1zM285 212h1v1h-1zM289 212h1v1h-1zM284 213h1v1h-1zM290 213h1v1h-1zM284 214h1v1h-1zM290 214h1v1h-1zM284 215h1v1h-1zM290 215h1v1h-1zM285 216h1v1h-1zM289 216h1v1h-1zM286 217h1v1h-1zM287 217h1v1h-1zM288 217h1v1h-1zM286 202h1v1h-1zM287 202h1v1h-1zM288 202h1v1h-1zM285 203h1v1h-1zM289 203h1v1h-1zM284 204h1v1h-1zM290 204h1v1h-1zM284 205h1v1h-1zM290 205h1v1h-1zM284 206h1v1h-1zM290 206h1v1h-1zM285 207h1v1h-1zM289 207h1v1h-1zM286 208h1v1h-1zM287 208h1v1h-1zM288 208h1v1h-1zM286 193h1v1h-1zM287 193h1v1h-1zM288 193h1v1h-1zM285 194h1v1h-1zM289 194h1v1h-1zM284 195h1v1h-1zM290 195h1v1h-1zM284 196h1v1h-1zM290 196h1v1h-1zM284 197h1v1h-1zM290 197h1v1h-1zM285 198h1v1h-1zM289 198h1v1h-1zM286 199h1v1h-1zM287 199h1v1h-1zM288 199h1v1h-1zM286 184h1v1h-1zM287 184h1v1h-1zM288 184h1v1h-1zM285 185h1v1h-1zM289 185h1v1h-1zM284 186h1v1h-1zM290 186h1v1h-1zM284 187h1v1h-1zM290 187h1v1h-1zM284 188h1v1h-1zM290 188h1v1h-1zM285 189h1v1h-1zM289 189h1v1h-1zM286 190h1v1h-1zM287 190h1v1h-1zM288 190h1v1h-1zM286 176h1v1h-1zM287 176h1v1h-1zM288 176h1v1h-1zM285 177h1v1h-1zM289 177h1v1h-1zM284 178h1v1h-1zM290 178h1v1h-1zM284 179h1v1h-1zM290 179h1v1h-1zM284 180h1v1h-1zM290 180h1v1h-1zM285 181h1v1h-1zM289 181h1v1h-1zM286 182h1v1h-1zM287 182h1v1h-1zM288 182h1v1h-1zM303 237h1v1h-1zM304 237h1v1h-1zM305 237h1v1h-1zM302 238h1v1h-1zM306 238h1v1h-1zM301 239h1v1h-1zM307 239h1v1h-1zM301 240h1v1h-1zM307 240h1v1h-1zM301 241h1v1h-1zM307 241h1v1h-1zM302 242h1v1h-1zM306 242h1v1h-1zM303 243h1v1h-1zM304 243h1v1h-1zM305 243h1v1h-1zM303 219h1v1h-1zM304 219h1v1h-1zM305 219h1v1h-1zM302 220h1v1h-1zM306 220h1v1h-1zM301 221h1v1h-1zM307 221h1v1h-1zM301 222h1v1h-1zM307 222h1v1h-1zM301 223h1v1h-1zM307 223h1v1h-1zM302 224h1v1h-1zM306 224h1v1h-1zM303 225h1v1h-1zM304 225h1v1h-1zM305 225h1v1h-1zM303 211h1v1h-1zM304 211h1v1h-1zM305 211h1v1h-1zM302 212h1v1h-1zM306 212h1v1h-1zM301 213h1v1h-1zM307 213h1v1h-1zM301 214h1v1h-1zM307 214h1v1h-1zM301 215h1v1h-1zM307 215h1v1h-1zM302 216h1v1h-1zM306 216h1v1h-1zM303 217h1v1h-1zM304 217h1v1h-1zM305 217h1v1h-1zM303 202h1v1h-1zM304 202h1v1h-1zM305 202h1v1h-1zM302 203h1v1h-1zM306 203h1v1h-1zM301 204h1v1h-1zM307 204h1v1h-1zM301 205h1v1h-1zM307 205h1v1h-1zM301 206h1v1h-1zM307 206h1v1h-1zM302 207h1v1h-1zM306 207h1v1h-1zM303 208h1v1h-1zM304 208h1v1h-1zM305 208h1v1h-1zM320 202h1v1h-1zM321 202h1v1h-1zM322 202h1v1h-1zM319 203h1v1h-1zM323 203h1v1h-1zM318 204h1v1h-1zM324 204h1v1h-1zM318 205h1v1h-1zM324 205h1v1h-1zM318 206h1v1h-1zM324 206h1v1h-1zM319 207h1v1h-1zM323 207h1v1h-1zM320 208h1v1h-1zM321 208h1v1h-1zM322 208h1v1h-1zM320 193h1v1h-1zM321 193h1v1h-1zM322 193h1v1h-1zM319 194h1v1h-1zM323 194h1v1h-1zM318 195h1v1h-1zM324 195h1v1h-1zM318 196h1v1h-1zM324 196h1v1h-1zM318 197h1v1h-1zM324 197h1v1h-1zM319 198h1v1h-1zM323 198h1v1h-1zM320 199h1v1h-1zM321 199h1v1h-1zM322 199h1v1h-1zM320 184h1v1h-1zM321 184h1v1h-1zM322 184h1v1h-1zM319 185h1v1h-1zM323 185h1v1h-1zM318 186h1v1h-1zM324 186h1v1h-1zM318 187h1v1h-1zM324 187h1v1h-1zM318 188h1v1h-1zM324 188h1v1h-1zM319 189h1v1h-1zM323 189h1v1h-1zM320 190h1v1h-1zM321 190h1v1h-1zM322 190h1v1h-1zM338 289h1v1h-1zM339 289h1v1h-1zM340 289h1v1h-1zM337 290h1v1h-1zM341 290h1v1h-1zM336 291h1v1h-1zM342 291h1v1h-1zM336 292h1v1h-1zM342 292h1v1h-1zM336 293h1v1h-1zM342 293h1v1h-1zM337 294h1v1h-1zM341 294h1v1h-1zM338 295h1v1h-1zM339 295h1v1h-1zM340 295h1v1h-1zM338 280h1v1h-1zM339 280h1v1h-1zM340 280h1v1h-1zM337 281h1v1h-1zM341 281h1v1h-1zM336 282h1v1h-1zM342 282h1v1h-1zM336 283h1v1h-1zM342 283h1v1h-1zM336 284h1v1h-1zM342 284h1v1h-1zM337 285h1v1h-1zM341 285h1v1h-1zM338 286h1v1h-1zM339 286h1v1h-1zM340 286h1v1h-1zM338 272h1v1h-1zM339 272h1v1h-1zM340 272h1v1h-1zM337 273h1v1h-1zM341 273h1v1h-1zM336 274h1v1h-1zM342 274h1v1h-1zM336 275h1v1h-1zM342 275h1v1h-1zM336 276h1v1h-1zM342 276h1v1h-1zM337 277h1v1h-1zM341 277h1v1h-1zM338 278h1v1h-1zM339 278h1v1h-1zM340 278h1v1h-1zM338 263h1v1h-1zM339 263h1v1h-1zM340 263h1v1h-1zM337 264h1v1h-1zM341 264h1v1h-1zM336 265h1v1h-1zM342 265h1v1h-1zM336 266h1v1h-1zM342 266h1v1h-1zM336 267h1v1h-1zM342 267h1v1h-1zM337 268h1v1h-1zM341 268h1v1h-1zM338 269h1v1h-1zM339 269h1v1h-1zM340 269h1v1h-1zM338 254h1v1h-1zM339 254h1v1h-1zM340 254h1v1h-1zM337 255h1v1h-1zM341 255h1v1h-1zM336 256h1v1h-1zM342 256h1v1h-1zM336 257h1v1h-1zM342 257h1v1h-1zM336 258h1v1h-1zM342 258h1v1h-1zM337 259h1v1h-1zM341 259h1v1h-1zM338 260h1v1h-1zM339 260h1v1h-1zM340 260h1v1h-1zM338 245h1v1h-1zM339 245h1v1h-1zM340 245h1v1h-1zM337 246h1v1h-1zM341 246h1v1h-1zM336 247h1v1h-1zM342 247h1v1h-1zM336 248h1v1h-1zM342 248h1v1h-1zM336 249h1v1h-1zM342 249h1v1h-1zM337 250h1v1h-1zM341 250h1v1h-1zM338 251h1v1h-1zM339 251h1v1h-1zM340 251h1v1h-1zM338 237h1v1h-1zM339 237h1v1h-1zM340 237h1v1h-1zM337 238h1v1h-1zM341 238h1v1h-1zM336 239h1v1h-1zM342 239h1v1h-1zM336 240h1v1h-1zM342 240h1v1h-1zM336 241h1v1h-1zM342 241h1v1h-1zM337 242h1v1h-1zM341 242h1v1h-1zM338 243h1v1h-1zM339 243h1v1h-1zM340 243h1v1h-1zM338 228h1v1h-1zM339 228h1v1h-1zM340 228h1v1h-1zM337 229h1v1h-1zM341 229h1v1h-1zM336 230h1v1h-1zM342 230h1v1h-1zM336 231h1v1h-1zM342 231h1v1h-1zM336 232h1v1h-1zM342 232h1v1h-1zM337 233h1v1h-1zM341 233h1v1h-1zM338 234h1v1h-1zM339 234h1v1h-1zM340 234h1v1h-1zM338 219h1v1h-1zM339 219h1v1h-1zM340 219h1v1h-1zM337 220h1v1h-1zM341 220h1v1h-1zM336 221h1v1h-1zM342 221h1v1h-1zM336 222h1v1h-1zM342 222h1v1h-1zM336 223h1v1h-1zM342 223h1v1h-1zM337 224h1v1h-1zM341 224h1v1h-1zM338 225h1v1h-1zM339 225h1v1h-1zM340 225h1v1h-1zM338 211h1v1h-1zM339 211h1v1h-1zM340 211h1v1h-1zM337 212h1v1h-1zM341 212h1v1h-1zM336 213h1v1h-1zM342 213h1v1h-1zM336 214h1v1h-1zM342 214h1v1h-1zM336 215h1v1h-1zM342 215h1v1h-1zM337 216h1v1h-1zM341 216h1v1h-1zM338 217h1v1h-1zM339 217h1v1h-1zM340 217h1v1h-1zM338 202h1v1h-1zM339 202h1v1h-1zM340 202h1v1h-1zM337 203h1v1h-1zM341 203h1v1h-1zM336 204h1v1h-1zM342 204h1v1h-1zM336 205h1v1h-1zM342 205h1v1h-1zM336 206h1v1h-1zM342 206h1v1h-1zM337 207h1v1h-1zM341 207h1v1h-1zM338 208h1v1h-1zM339 208h1v1h-1zM340 208h1v1h-1zM338 193h1v1h-1zM339 193h1v1h-1zM340 193h1v1h-1zM337 194h1v1h-1zM341 194h1v1h-1zM336 195h1v1h-1zM342 195h1v1h-1zM336 196h1v1h-1zM342 196h1v1h-1zM336 197h1v1h-1zM342 197h1v1h-1zM337 198h1v1h-1zM341 198h1v1h-1zM338 199h1v1h-1zM339 199h1v1h-1zM340 199h1v1h-1zM338 184h1v1h-1zM339 184h1v1h-1zM340 184h1v1h-1zM337 185h1v1h-1zM341 185h1v1h-1zM336 186h1v1h-1zM342 186h1v1h-1zM336 187h1v1h-1zM342 187h1v1h-1zM336 188h1v1h-1zM342 188h1v1h-1zM337 189h1v1h-1zM341 189h1v1h-1zM338 190h1v1h-1zM339 190h1v1h-1zM340 190h1v1h-1zM338 176h1v1h-1zM339 176h1v1h-1zM340 176h1v1h-1zM337 177h1v1h-1zM341 177h1v1h-1zM336 178h1v1h-1zM342 178h1v1h-1zM336 179h1v1h-1zM342 179h1v1h-1zM336 180h1v1h-1zM342 180h1v1h-1zM337 181h1v1h-1zM341 181h1v1h-1zM338 182h1v1h-1zM339 182h1v1h-1zM340 182h1v1h-1zM355 289h1v1h-1zM356 289h1v1h-1zM357 289h1v1h-1zM354 290h1v1h-1zM358 290h1v1h-1zM353 291h1v1h-1zM359 291h1v1h-1zM353 292h1v1h-1zM359 292h1v1h-1zM353 293h1v1h-1zM359 293h1v1h-1zM354 294h1v1h-1zM358 294h1v1h-1zM355 295h1v1h-1zM356 295h1v1h-1zM357 295h1v1h-1zM355 280h1v1h-1zM356 280h1v1h-1zM357 280h1v1h-1zM354 281h1v1h-1zM358 281h1v1h-1zM353 282h1v1h-1zM359 282h1v1h-1zM353 283h1v1h-1zM359 283h1v1h-1zM353 284h1v1h-1zM359 284h1v1h-1zM354 285h1v1h-1zM358 285h1v1h-1zM355 286h1v1h-1zM356 286h1v1h-1zM357 286h1v1h-1zM373 245h1v1h-1zM374 245h1v1h-1zM375 245h1v1h-1zM372 246h1v1h-1zM376 246h1v1h-1zM371 247h1v1h-1zM377 247h1v1h-1zM371 248h1v1h-1zM377 248h1v1h-1zM371 249h1v1h-1zM377 249h1v1h-1zM372 250h1v1h-1zM376 250h1v1h-1zM373 251h1v1h-1zM374 251h1v1h-1zM375 251h1v1h-1zM373 237h1v1h-1zM374 237h1v1h-1zM375 237h1v1h-1zM372 238h1v1h-1zM376 238h1v1h-1zM371 239h1v1h-1zM377 239h1v1h-1zM371 240h1v1h-1zM377 240h1v1h-1zM371 241h1v1h-1zM377 241h1v1h-1zM372 242h1v1h-1zM376 242h1v1h-1zM373 243h1v1h-1zM374 243h1v1h-1zM375 243h1v1h-1zM373 228h1v1h-1zM374 228h1v1h-1zM375 228h1v1h-1zM372 229h1v1h-1zM376 229h1v1h-1zM371 230h1v1h-1zM377 230h1v1h-1zM371 231h1v1h-1zM377 231h1v1h-1zM371 232h1v1h-1zM377 232h1v1h-1zM372 233h1v1h-1zM376 233h1v1h-1zM373 234h1v1h-1zM374 234h1v1h-1zM375 234h1v1h-1zM373 219h1v1h-1zM374 219h1v1h-1zM375 219h1v1h-1zM372 220h1v1h-1zM376 220h1v1h-1zM371 221h1v1h-1zM377 221h1v1h-1zM371 222h1v1h-1zM377 222h1v1h-1zM371 223h1v1h-1zM377 223h1v1h-1zM372 224h1v1h-1zM376 224h1v1h-1zM373 225h1v1h-1zM374 225h1v1h-1zM375 225h1v1h-1zM373 211h1v1h-1zM374 211h1v1h-1zM375 211h1v1h-1zM372 212h1v1h-1zM376 212h1v1h-1zM371 213h1v1h-1zM377 213h1v1h-1zM371 214h1v1h-1zM377 214h1v1h-1zM371 215h1v1h-1zM377 215h1v1h-1zM372 216h1v1h-1zM376 216h1v1h-1zM373 217h1v1h-1zM374 217h1v1h-1zM375 217h1v1h-1zM373 202h1v1h-1zM374 202h1v1h-1zM375 202h1v1h-1zM372 203h1v1h-1zM376 203h1v1h-1zM371 204h1v1h-1zM377 204h1v1h-1zM371 205h1v1h-1zM377 205h1v1h-1zM371 206h1v1h-1zM377 206h1v1h-1zM372 207h1v1h-1zM376 207h1v1h-1zM373 208h1v1h-1zM374 208h1v1h-1zM375 208h1v1h-1zM373 193h1v1h-1zM374 193h1v1h-1zM375 193h1v1h-1zM372 194h1v1h-1zM376 194h1v1h-1zM371 195h1v1h-1zM377 195h1v1h-1zM371 196h1v1h-1zM377 196h1v1h-1zM371 197h1v1h-1zM377 197h1v1h-1zM372 198h1v1h-1zM376 198h1v1h-1zM373 199h1v1h-1zM374 199h1v1h-1zM375 199h1v1h-1zM373 184h1v1h-1zM374 184h1v1h-1zM375 184h1v1h-1zM372 185h1v1h-1zM376 185h1v1h-1zM371 186h1v1h-1zM377 186h1v1h-1zM371 187h1v1h-1zM377 187h1v1h-1zM371 188h1v1h-1zM377 188h1v1h-1zM372 189h1v1h-1zM376 189h1v1h-1zM373 190h1v1h-1zM374 190h1v1h-1zM375 190h1v1h-1zM373 176h1v1h-1zM374 176h1v1h-1zM375 176h1v1h-1zM372 177h1v1h-1zM376 177h1v1h-1zM371 178h1v1h-1zM377 178h1v1h-1zM371 179h1v1h-1zM377 179h1v1h-1zM371 180h1v1h-1zM377 180h1v1h-1zM372 181h1v1h-1zM376 181h1v1h-1zM373 182h1v1h-1zM374 182h1v1h-1zM375 182h1v1h-1zM390 280h1v1h-1zM391 280h1v1h-1zM392 280h1v1h-1zM389 281h1v1h-1zM393 281h1v1h-1zM388 282h1v1h-1zM394 282h1v1h-1zM388 283h1v1h-1zM394 283h1v1h-1zM388 284h1v1h-1zM394 284h1v1h-1zM389 285h1v1h-1zM393 285h1v1h-1zM390 286h1v1h-1zM391 286h1v1h-1zM392 286h1v1h-1zM390 272h1v1h-1zM391 272h1v1h-1zM392 272h1v1h-1zM389 273h1v1h-1zM393 273h1v1h-1zM388 274h1v1h-1zM394 274h1v1h-1zM388 275h1v1h-1zM394 275h1v1h-1zM388 276h1v1h-1zM394 276h1v1h-1zM389 277h1v1h-1zM393 277h1v1h-1zM390 278h1v1h-1zM391 278h1v1h-1zM392 278h1v1h-1zM390 263h1v1h-1zM391 263h1v1h-1zM392 263h1v1h-1zM389 264h1v1h-1zM393 264h1v1h-1zM388 265h1v1h-1zM394 265h1v1h-1zM388 266h1v1h-1zM394 266h1v1h-1zM388 267h1v1h-1zM394 267h1v1h-1zM389 268h1v1h-1zM393 268h1v1h-1zM390 269h1v1h-1zM391 269h1v1h-1zM392 269h1v1h-1zM390 254h1v1h-1zM391 254h1v1h-1zM392 254h1v1h-1zM389 255h1v1h-1zM393 255h1v1h-1zM388 256h1v1h-1zM394 256h1v1h-1zM388 257h1v1h-1zM394 257h1v1h-1zM388 258h1v1h-1zM394 258h1v1h-1zM389 259h1v1h-1zM393 259h1v1h-1zM390 260h1v1h-1zM391 260h1v1h-1zM392 260h1v1h-1zM390 245h1v1h-1zM391 245h1v1h-1zM392 245h1v1h-1zM389 246h1v1h-1zM393 246h1v1h-1zM388 247h1v1h-1zM394 247h1v1h-1zM388 248h1v1h-1zM394 248h1v1h-1zM388 249h1v1h-1zM394 249h1v1h-1zM389 250h1v1h-1zM393 250h1v1h-1zM390 251h1v1h-1zM391 251h1v1h-1zM392 251h1v1h-1zM390 237h1v1h-1zM391 237h1v1h-1zM392 237h1v1h-1zM389 238h1v1h-1zM393 238h1v1h-1zM388 239h1v1h-1zM394 239h1v1h-1zM388 240h1v1h-1zM394 240h1v1h-1zM388 241h1v1h-1zM394 241h1v1h-1zM389 242h1v1h-1zM393 242h1v1h-1zM390 243h1v1h-1zM391 243h1v1h-1zM392 243h1v1h-1zM390 228h1v1h-1zM391 228h1v1h-1zM392 228h1v1h-1zM389 229h1v1h-1zM393 229h1v1h-1zM388 230h1v1h-1zM394 230h1v1h-1zM388 231h1v1h-1zM394 231h1v1h-1zM388 232h1v1h-1zM394 232h1v1h-1zM389 233h1v1h-1zM393 233h1v1h-1zM390 234h1v1h-1zM391 234h1v1h-1zM392 234h1v1h-1zM390 219h1v1h-1zM391 219h1v1h-1zM392 219h1v1h-1zM389 220h1v1h-1zM393 220h1v1h-1zM388 221h1v1h-1zM394 221h1v1h-1zM388 222h1v1h-1zM394 222h1v1h-1zM388 223h1v1h-1zM394 223h1v1h-1zM389 224h1v1h-1zM393 224h1v1h-1zM390 225h1v1h-1zM391 225h1v1h-1zM392 225h1v1h-1zM408 350h1v1h-1zM409 350h1v1h-1zM410 350h1v1h-1zM407 351h1v1h-1zM411 351h1v1h-1zM406 352h1v1h-1zM412 352h1v1h-1zM406 353h1v1h-1zM412 353h1v1h-1zM406 354h1v1h-1zM412 354h1v1h-1zM407 355h1v1h-1zM411 355h1v1h-1zM408 356h1v1h-1zM409 356h1v1h-1zM410 356h1v1h-1zM408 341h1v1h-1zM409 341h1v1h-1zM410 341h1v1h-1zM407 342h1v1h-1zM411 342h1v1h-1zM406 343h1v1h-1zM412 343h1v1h-1zM406 344h1v1h-1zM412 344h1v1h-1zM406 345h1v1h-1zM412 345h1v1h-1zM407 346h1v1h-1zM411 346h1v1h-1zM408 347h1v1h-1zM409 347h1v1h-1zM410 347h1v1h-1zM408 333h1v1h-1zM409 333h1v1h-1zM410 333h1v1h-1zM407 334h1v1h-1zM411 334h1v1h-1zM406 335h1v1h-1zM412 335h1v1h-1zM406 336h1v1h-1zM412 336h1v1h-1zM406 337h1v1h-1zM412 337h1v1h-1zM407 338h1v1h-1zM411 338h1v1h-1zM408 339h1v1h-1zM409 339h1v1h-1zM410 339h1v1h-1zM408 324h1v1h-1zM409 324h1v1h-1zM410 324h1v1h-1zM407 325h1v1h-1zM411 325h1v1h-1zM406 326h1v1h-1zM412 326h1v1h-1zM406 327h1v1h-1zM412 327h1v1h-1zM406 328h1v1h-1zM412 328h1v1h-1zM407 329h1v1h-1zM411 329h1v1h-1zM408 330h1v1h-1zM409 330h1v1h-1zM410 330h1v1h-1zM408 315h1v1h-1zM409 315h1v1h-1zM410 315h1v1h-1zM407 316h1v1h-1zM411 316h1v1h-1zM406 317h1v1h-1zM412 317h1v1h-1zM406 318h1v1h-1zM412 318h1v1h-1zM406 319h1v1h-1zM412 319h1v1h-1zM407 320h1v1h-1zM411 320h1v1h-1zM408 321h1v1h-1zM409 321h1v1h-1zM410 321h1v1h-1zM408 306h1v1h-1zM409 306h1v1h-1zM410 306h1v1h-1zM407 307h1v1h-1zM411 307h1v1h-1zM406 308h1v1h-1zM412 308h1v1h-1zM406 309h1v1h-1zM412 309h1v1h-1zM406 310h1v1h-1zM412 310h1v1h-1zM407 311h1v1h-1zM411 311h1v1h-1zM408 312h1v1h-1zM409 312h1v1h-1zM410 312h1v1h-1zM408 298h1v1h-1zM409 298h1v1h-1zM410 298h1v1h-1zM407 299h1v1h-1zM411 299h1v1h-1zM406 300h1v1h-1zM412 300h1v1h-1zM406 301h1v1h-1zM412 301h1v1h-1zM406 302h1v1h-1zM412 302h1v1h-1zM407 303h1v1h-1zM411 303h1v1h-1zM408 304h1v1h-1zM409 304h1v1h-1zM410 304h1v1h-1zM408 289h1v1h-1zM409 289h1v1h-1zM410 289h1v1h-1zM407 290h1v1h-1zM411 290h1v1h-1zM406 291h1v1h-1zM412 291h1v1h-1zM406 292h1v1h-1zM412 292h1v1h-1zM406 293h1v1h-1zM412 293h1v1h-1zM407 294h1v1h-1zM411 294h1v1h-1zM408 295h1v1h-1zM409 295h1v1h-1zM410 295h1v1h-1zM408 280h1v1h-1zM409 280h1v1h-1zM410 280h1v1h-1zM407 281h1v1h-1zM411 281h1v1h-1zM406 282h1v1h-1zM412 282h1v1h-1zM406 283h1v1h-1zM412 283h1v1h-1zM406 284h1v1h-1zM412 284h1v1h-1zM407 285h1v1h-1zM411 285h1v1h-1zM408 286h1v1h-1zM409 286h1v1h-1zM410 286h1v1h-1zM408 272h1v1h-1zM409 272h1v1h-1zM410 272h1v1h-1zM407 273h1v1h-1zM411 273h1v1h-1zM406 274h1v1h-1zM412 274h1v1h-1zM406 275h1v1h-1zM412 275h1v1h-1zM406 276h1v1h-1zM412 276h1v1h-1zM407 277h1v1h-1zM411 277h1v1h-1zM408 278h1v1h-1zM409 278h1v1h-1zM410 278h1v1h-1zM408 263h1v1h-1zM409 263h1v1h-1zM410 263h1v1h-1zM407 264h1v1h-1zM411 264h1v1h-1zM406 265h1v1h-1zM412 265h1v1h-1zM406 266h1v1h-1zM412 266h1v1h-1zM406 267h1v1h-1zM412 267h1v1h-1zM407 268h1v1h-1zM411 268h1v1h-1zM408 269h1v1h-1zM409 269h1v1h-1zM410 269h1v1h-1zM408 254h1v1h-1zM409 254h1v1h-1zM410 254h1v1h-1zM407 255h1v1h-1zM411 255h1v1h-1zM406 256h1v1h-1zM412 256h1v1h-1zM406 257h1v1h-1zM412 257h1v1h-1zM406 258h1v1h-1zM412 258h1v1h-1zM407 259h1v1h-1zM411 259h1v1h-1zM408 260h1v1h-1zM409 260h1v1h-1zM410 260h1v1h-1zM408 245h1v1h-1zM409 245h1v1h-1zM410 245h1v1h-1zM407 246h1v1h-1zM411 246h1v1h-1zM406 247h1v1h-1zM412 247h1v1h-1zM406 248h1v1h-1zM412 248h1v1h-1zM406 249h1v1h-1zM412 249h1v1h-1zM407 250h1v1h-1zM411 250h1v1h-1zM408 251h1v1h-1zM409 251h1v1h-1zM410 251h1v1h-1zM408 237h1v1h-1zM409 237h1v1h-1zM410 237h1v1h-1zM407 238h1v1h-1zM411 238h1v1h-1zM406 239h1v1h-1zM412 239h1v1h-1zM406 240h1v1h-1zM412 240h1v1h-1zM406 241h1v1h-1zM412 241h1v1h-1zM407 242h1v1h-1zM411 242h1v1h-1zM408 243h1v1h-1zM409 243h1v1h-1zM410 243h1v1h-1zM408 228h1v1h-1zM409 228h1v1h-1zM410 228h1v1h-1zM407 229h1v1h-1zM411 229h1v1h-1zM406 230h1v1h-1zM412 230h1v1h-1zM406 231h1v1h-1zM412 231h1v1h-1zM406 232h1v1h-1zM412 232h1v1h-1zM407 233h1v1h-1zM411 233h1v1h-1zM408 234h1v1h-1zM409 234h1v1h-1zM410 234h1v1h-1zM408 219h1v1h-1zM409 219h1v1h-1zM410 219h1v1h-1zM407 220h1v1h-1zM411 220h1v1h-1zM406 221h1v1h-1zM412 221h1v1h-1zM406 222h1v1h-1zM412 222h1v1h-1zM406 223h1v1h-1zM412 223h1v1h-1zM407 224h1v1h-1zM411 224h1v1h-1zM408 225h1v1h-1zM409 225h1v1h-1zM410 225h1v1h-1zM408 211h1v1h-1zM409 211h1v1h-1zM410 211h1v1h-1zM407 212h1v1h-1zM411 212h1v1h-1zM406 213h1v1h-1zM412 213h1v1h-1zM406 214h1v1h-1zM412 214h1v1h-1zM406 215h1v1h-1zM412 215h1v1h-1zM407 216h1v1h-1zM411 216h1v1h-1zM408 217h1v1h-1zM409 217h1v1h-1zM410 217h1v1h-1zM408 202h1v1h-1zM409 202h1v1h-1zM410 202h1v1h-1zM407 203h1v1h-1zM411 203h1v1h-1zM406 204h1v1h-1zM412 204h1v1h-1zM406 205h1v1h-1zM412 205h1v1h-1zM406 206h1v1h-1zM412 206h1v1h-1zM407 207h1v1h-1zM411 207h1v1h-1zM408 208h1v1h-1zM409 208h1v1h-1zM410 208h1v1h-1zM408 184h1v1h-1zM409 184h1v1h-1zM410 184h1v1h-1zM407 185h1v1h-1zM411 185h1v1h-1zM406 186h1v1h-1zM412 186h1v1h-1zM406 187h1v1h-1zM412 187h1v1h-1zM406 188h1v1h-1zM412 188h1v1h-1zM407 189h1v1h-1zM411 189h1v1h-1zM408 190h1v1h-1zM409 190h1v1h-1zM410 190h1v1h-1zM408 176h1v1h-1zM409 176h1v1h-1zM410 176h1v1h-1zM407 177h1v1h-1zM411 177h1v1h-1zM406 178h1v1h-1zM412 178h1v1h-1zM406 179h1v1h-1zM412 179h1v1h-1zM406 180h1v1h-1zM412 180h1v1h-1zM407 181h1v1h-1zM411 181h1v1h-1zM408 182h1v1h-1zM409 182h1v1h-1zM410 182h1v1h-1zM408 167h1v1h-1zM409 167h1v1h-1zM410 167h1v1h-1zM407 168h1v1h-1zM411 168h1v1h-1zM406 169h1v1h-1zM412 169h1v1h-1zM406 170h1v1h-1zM412 170h1v1h-1zM406 171h1v1h-1zM412 171h1v1h-1zM407 172h1v1h-1zM411 172h1v1h-1zM408 173h1v1h-1zM409 173h1v1h-1zM410 173h1v1h-1zM408 158h1v1h-1zM409 158h1v1h-1zM410 158h1v1h-1zM407 159h1v1h-1zM411 159h1v1h-1zM406 160h1v1h-1zM412 160h1v1h-1zM406 161h1v1h-1zM412 161h1v1h-1zM406 162h1v1h-1zM412 162h1v1h-1zM407 163h1v1h-1zM411 163h1v1h-1zM408 164h1v1h-1zM409 164h1v1h-1zM410 164h1v1h-1zM425 289h1v1h-1zM426 289h1v1h-1zM427 289h1v1h-1zM424 290h1v1h-1zM428 290h1v1h-1zM423 291h1v1h-1zM429 291h1v1h-1zM423 292h1v1h-1zM429 292h1v1h-1zM423 293h1v1h-1zM429 293h1v1h-1zM424 294h1v1h-1zM428 294h1v1h-1zM425 295h1v1h-1zM426 295h1v1h-1zM427 295h1v1h-1zM425 280h1v1h-1zM426 280h1v1h-1zM427 280h1v1h-1zM424 281h1v1h-1zM428 281h1v1h-1zM423 282h1v1h-1zM429 282h1v1h-1zM423 283h1v1h-1zM429 283h1v1h-1zM423 284h1v1h-1zM429 284h1v1h-1zM424 285h1v1h-1zM428 285h1v1h-1zM425 286h1v1h-1zM426 286h1v1h-1zM427 286h1v1h-1zM425 272h1v1h-1zM426 272h1v1h-1zM427 272h1v1h-1zM424 273h1v1h-1zM428 273h1v1h-1zM423 274h1v1h-1zM429 274h1v1h-1zM423 275h1v1h-1zM429 275h1v1h-1zM423 276h1v1h-1zM429 276h1v1h-1zM424 277h1v1h-1zM428 277h1v1h-1zM425 278h1v1h-1zM426 278h1v1h-1zM427 278h1v1h-1zM425 254h1v1h-1zM426 254h1v1h-1zM427 254h1v1h-1zM424 255h1v1h-1zM428 255h1v1h-1zM423 256h1v1h-1zM429 256h1v1h-1zM423 257h1v1h-1zM429 257h1v1h-1zM423 258h1v1h-1zM429 258h1v1h-1zM424 259h1v1h-1zM428 259h1v1h-1zM425 260h1v1h-1zM426 260h1v1h-1zM427 260h1v1h-1zM425 245h1v1h-1zM426 245h1v1h-1zM427 245h1v1h-1zM424 246h1v1h-1zM428 246h1v1h-1zM423 247h1v1h-1zM429 247h1v1h-1zM423 248h1v1h-1zM429 248h1v1h-1zM423 249h1v1h-1zM429 249h1v1h-1zM424 250h1v1h-1zM428 250h1v1h-1zM425 251h1v1h-1zM426 251h1v1h-1zM427 251h1v1h-1zM425 237h1v1h-1zM426 237h1v1h-1zM427 237h1v1h-1zM424 238h1v1h-1zM428 238h1v1h-1zM423 239h1v1h-1zM429 239h1v1h-1zM423 240h1v1h-1zM429 240h1v1h-1zM423 241h1v1h-1zM429 241h1v1h-1zM424 242h1v1h-1zM428 242h1v1h-1zM425 243h1v1h-1zM426 243h1v1h-1zM427 243h1v1h-1zM425 228h1v1h-1zM426 228h1v1h-1zM427 228h1v1h-1zM424 229h1v1h-1zM428 229h1v1h-1zM423 230h1v1h-1zM429 230h1v1h-1zM423 231h1v1h-1zM429 231h1v1h-1zM423 232h1v1h-1zM429 232h1v1h-1zM424 233h1v1h-1zM428 233h1v1h-1zM425 234h1v1h-1zM426 234h1v1h-1zM427 234h1v1h-1zM425 219h1v1h-1zM426 219h1v1h-1zM427 219h1v1h-1zM424 220h1v1h-1zM428 220h1v1h-1zM423 221h1v1h-1zM429 221h1v1h-1zM423 222h1v1h-1zM429 222h1v1h-1zM423 223h1v1h-1zM429 223h1v1h-1zM424 224h1v1h-1zM428 224h1v1h-1zM425 225h1v1h-1zM426 225h1v1h-1zM427 225h1v1h-1zM425 211h1v1h-1zM426 211h1v1h-1zM427 211h1v1h-1zM424 212h1v1h-1zM428 212h1v1h-1zM423 213h1v1h-1zM429 213h1v1h-1zM423 214h1v1h-1zM429 214h1v1h-1zM423 215h1v1h-1zM429 215h1v1h-1zM424 216h1v1h-1zM428 216h1v1h-1zM425 217h1v1h-1zM426 217h1v1h-1zM427 217h1v1h-1zM425 202h1v1h-1zM426 202h1v1h-1zM427 202h1v1h-1zM424 203h1v1h-1zM428 203h1v1h-1zM423 204h1v1h-1zM429 204h1v1h-1zM423 205h1v1h-1zM429 205h1v1h-1zM423 206h1v1h-1zM429 206h1v1h-1zM424 207h1v1h-1zM428 207h1v1h-1zM425 208h1v1h-1zM426 208h1v1h-1zM427 208h1v1h-1zM425 193h1v1h-1zM426 193h1v1h-1zM427 193h1v1h-1zM424 194h1v1h-1zM428 194h1v1h-1zM423 195h1v1h-1zM429 195h1v1h-1zM423 196h1v1h-1zM429 196h1v1h-1zM423 197h1v1h-1zM429 197h1v1h-1zM424 198h1v1h-1zM428 198h1v1h-1zM425 199h1v1h-1zM426 199h1v1h-1zM427 199h1v1h-1zM425 184h1v1h-1zM426 184h1v1h-1zM427 184h1v1h-1zM424 185h1v1h-1zM428 185h1v1h-1zM423 186h1v1h-1zM429 186h1v1h-1zM423 187h1v1h-1zM429 187h1v1h-1zM423 188h1v1h-1zM429 188h1v1h-1zM424 189h1v1h-1zM428 189h1v1h-1zM425 190h1v1h-1zM426 190h1v1h-1zM427 190h1v1h-1zM425 176h1v1h-1zM426 176h1v1h-1zM427 176h1v1h-1zM424 177h1v1h-1zM428 177h1v1h-1zM423 178h1v1h-1zM429 178h1v1h-1zM423 179h1v1h-1zM429 179h1v1h-1zM423 180h1v1h-1zM429 180h1v1h-1zM424 181h1v1h-1zM428 181h1v1h-1zM425 182h1v1h-1zM426 182h1v1h-1zM427 182h1v1h-1zM425 167h1v1h-1zM426 167h1v1h-1zM427 167h1v1h-1zM424 168h1v1h-1zM428 168h1v1h-1zM423 169h1v1h-1zM429 169h1v1h-1zM423 170h1v1h-1zM429 170h1v1h-1zM423 171h1v1h-1zM429 171h1v1h-1zM424 172h1v1h-1zM428 172h1v1h-1zM425 173h1v1h-1zM426 173h1v1h-1zM427 173h1v1h-1zM443 411h1v1h-1zM444 411h1v1h-1zM445 411h1v1h-1zM442 412h1v1h-1zM446 412h1v1h-1zM441 413h1v1h-1zM447 413h1v1h-1zM441 414h1v1h-1zM447 414h1v1h-1zM441 415h1v1h-1zM447 415h1v1h-1zM442 416h1v1h-1zM446 416h1v1h-1zM443 417h1v1h-1zM444 417h1v1h-1zM445 417h1v1h-1zM443 402h1v1h-1zM444 402h1v1h-1zM445 402h1v1h-1zM442 403h1v1h-1zM446 403h1v1h-1zM441 404h1v1h-1zM447 404h1v1h-1zM441 405h1v1h-1zM447 405h1v1h-1zM441 406h1v1h-1zM447 406h1v1h-1zM442 407h1v1h-1zM446 407h1v1h-1zM443 408h1v1h-1zM444 408h1v1h-1zM445 408h1v1h-1zM443 394h1v1h-1zM444 394h1v1h-1zM445 394h1v1h-1zM442 395h1v1h-1zM446 395h1v1h-1zM441 396h1v1h-1zM447 396h1v1h-1zM441 397h1v1h-1zM447 397h1v1h-1zM441 398h1v1h-1zM447 398h1v1h-1zM442 399h1v1h-1zM446 399h1v1h-1zM443 400h1v1h-1zM444 400h1v1h-1zM445 400h1v1h-1zM443 385h1v1h-1zM444 385h1v1h-1zM445 385h1v1h-1zM442 386h1v1h-1zM446 386h1v1h-1zM441 387h1v1h-1zM447 387h1v1h-1zM441 388h1v1h-1zM447 388h1v1h-1zM441 389h1v1h-1zM447 389h1v1h-1zM442 390h1v1h-1zM446 390h1v1h-1zM443 391h1v1h-1zM444 391h1v1h-1zM445 391h1v1h-1zM443 376h1v1h-1zM444 376h1v1h-1zM445 376h1v1h-1zM442 377h1v1h-1zM446 377h1v1h-1zM441 378h1v1h-1zM447 378h1v1h-1zM441 379h1v1h-1zM447 379h1v1h-1zM441 380h1v1h-1zM447 380h1v1h-1zM442 381h1v1h-1zM446 381h1v1h-1zM443 382h1v1h-1zM444 382h1v1h-1zM445 382h1v1h-1zM443 368h1v1h-1zM444 368h1v1h-1zM445 368h1v1h-1zM442 369h1v1h-1zM446 369h1v1h-1zM441 370h1v1h-1zM447 370h1v1h-1zM441 371h1v1h-1zM447 371h1v1h-1zM441 372h1v1h-1zM447 372h1v1h-1zM442 373h1v1h-1zM446 373h1v1h-1zM443 374h1v1h-1zM444 374h1v1h-1zM445 374h1v1h-1zM443 359h1v1h-1zM444 359h1v1h-1zM445 359h1v1h-1zM442 360h1v1h-1zM446 360h1v1h-1zM441 361h1v1h-1zM447 361h1v1h-1zM441 362h1v1h-1zM447 362h1v1h-1zM441 363h1v1h-1zM447 363h1v1h-1zM442 364h1v1h-1zM446 364h1v1h-1zM443 365h1v1h-1zM444 365h1v1h-1zM445 365h1v1h-1zM443 350h1v1h-1zM444 350h1v1h-1zM445 350h1v1h-1zM442 351h1v1h-1zM446 351h1v1h-1zM441 352h1v1h-1zM447 352h1v1h-1zM441 353h1v1h-1zM447 353h1v1h-1zM441 354h1v1h-1zM447 354h1v1h-1zM442 355h1v1h-1zM446 355h1v1h-1zM443 356h1v1h-1zM444 356h1v1h-1zM445 356h1v1h-1zM443 341h1v1h-1zM444 341h1v1h-1zM445 341h1v1h-1zM442 342h1v1h-1zM446 342h1v1h-1zM441 343h1v1h-1zM447 343h1v1h-1zM441 344h1v1h-1zM447 344h1v1h-1zM441 345h1v1h-1zM447 345h1v1h-1zM442 346h1v1h-1zM446 346h1v1h-1zM443 347h1v1h-1zM444 347h1v1h-1zM445 347h1v1h-1zM443 333h1v1h-1zM444 333h1v1h-1zM445 333h1v1h-1zM442 334h1v1h-1zM446 334h1v1h-1zM441 335h1v1h-1zM447 335h1v1h-1zM441 336h1v1h-1zM447 336h1v1h-1zM441 337h1v1h-1zM447 337h1v1h-1zM442 338h1v1h-1zM446 338h1v1h-1zM443 339h1v1h-1zM444 339h1v1h-1zM445 339h1v1h-1zM443 324h1v1h-1zM444 324h1v1h-1zM445 324h1v1h-1zM442 325h1v1h-1zM446 325h1v1h-1zM441 326h1v1h-1zM447 326h1v1h-1zM441 327h1v1h-1zM447 327h1v1h-1zM441 328h1v1h-1zM447 328h1v1h-1zM442 329h1v1h-1zM446 329h1v1h-1zM443 330h1v1h-1zM444 330h1v1h-1zM445 330h1v1h-1zM443 315h1v1h-1zM444 315h1v1h-1zM445 315h1v1h-1zM442 316h1v1h-1zM446 316h1v1h-1zM441 317h1v1h-1zM447 317h1v1h-1zM441 318h1v1h-1zM447 318h1v1h-1zM441 319h1v1h-1zM447 319h1v1h-1zM442 320h1v1h-1zM446 320h1v1h-1zM443 321h1v1h-1zM444 321h1v1h-1zM445 321h1v1h-1zM443 298h1v1h-1zM444 298h1v1h-1zM445 298h1v1h-1zM442 299h1v1h-1zM446 299h1v1h-1zM441 300h1v1h-1zM447 300h1v1h-1zM441 301h1v1h-1zM447 301h1v1h-1zM441 302h1v1h-1zM447 302h1v1h-1zM442 303h1v1h-1zM446 303h1v1h-1zM443 304h1v1h-1zM444 304h1v1h-1zM445 304h1v1h-1zM443 289h1v1h-1zM444 289h1v1h-1zM445 289h1v1h-1zM442 290h1v1h-1zM446 290h1v1h-1zM441 291h1v1h-1zM447 291h1v1h-1zM441 292h1v1h-1zM447 292h1v1h-1zM441 293h1v1h-1zM447 293h1v1h-1zM442 294h1v1h-1zM446 294h1v1h-1zM443 295h1v1h-1zM444 295h1v1h-1zM445 295h1v1h-1zM443 280h1v1h-1zM444 280h1v1h-1zM445 280h1v1h-1zM442 281h1v1h-1zM446 281h1v1h-1zM441 282h1v1h-1zM447 282h1v1h-1zM441 283h1v1h-1zM447 283h1v1h-1zM441 284h1v1h-1zM447 284h1v1h-1zM442 285h1v1h-1zM446 285h1v1h-1zM443 286h1v1h-1zM444 286h1v1h-1zM445 286h1v1h-1zM443 272h1v1h-1zM444 272h1v1h-1zM445 272h1v1h-1zM442 273h1v1h-1zM446 273h1v1h-1zM441 274h1v1h-1zM447 274h1v1h-1zM441 275h1v1h-1zM447 275h1v1h-1zM441 276h1v1h-1zM447 276h1v1h-1zM442 277h1v1h-1zM446 277h1v1h-1zM443 278h1v1h-1zM444 278h1v1h-1zM445 278h1v1h-1zM443 263h1v1h-1zM444 263h1v1h-1zM445 263h1v1h-1zM442 264h1v1h-1zM446 264h1v1h-1zM441 265h1v1h-1zM447 265h1v1h-1zM441 266h1v1h-1zM447 266h1v1h-1zM441 267h1v1h-1zM447 267h1v1h-1zM442 268h1v1h-1zM446 268h1v1h-1zM443 269h1v1h-1zM444 269h1v1h-1zM445 269h1v1h-1zM443 254h1v1h-1zM444 254h1v1h-1zM445 254h1v1h-1zM442 255h1v1h-1zM446 255h1v1h-1zM441 256h1v1h-1zM447 256h1v1h-1zM441 257h1v1h-1zM447 257h1v1h-1zM441 258h1v1h-1zM447 258h1v1h-1zM442 259h1v1h-1zM446 259h1v1h-1zM443 260h1v1h-1zM444 260h1v1h-1zM445 260h1v1h-1zM443 245h1v1h-1zM444 245h1v1h-1zM445 245h1v1h-1zM442 246h1v1h-1zM446 246h1v1h-1zM441 247h1v1h-1zM447 247h1v1h-1zM441 248h1v1h-1zM447 248h1v1h-1zM441 249h1v1h-1zM447 249h1v1h-1zM442 250h1v1h-1zM446 250h1v1h-1zM443 251h1v1h-1zM444 251h1v1h-1zM445 251h1v1h-1zM443 237h1v1h-1zM444 237h1v1h-1zM445 237h1v1h-1zM442 238h1v1h-1zM446 238h1v1h-1zM441 239h1v1h-1zM447 239h1v1h-1zM441 240h1v1h-1zM447 240h1v1h-1zM441 241h1v1h-1zM447 241h1v1h-1zM442 242h1v1h-1zM446 242h1v1h-1zM443 243h1v1h-1zM444 243h1v1h-1zM445 243h1v1h-1zM460 211h1v1h-1zM461 211h1v1h-1zM462 211h1v1h-1zM459 212h1v1h-1zM463 212h1v1h-1zM458 213h1v1h-1zM464 213h1v1h-1zM458 214h1v1h-1zM464 214h1v1h-1zM458 215h1v1h-1zM464 215h1v1h-1zM459 216h1v1h-1zM463 216h1v1h-1zM460 217h1v1h-1zM461 217h1v1h-1zM462 217h1v1h-1zM460 202h1v1h-1zM461 202h1v1h-1zM462 202h1v1h-1zM459 203h1v1h-1zM463 203h1v1h-1zM458 204h1v1h-1zM464 204h1v1h-1zM458 205h1v1h-1zM464 205h1v1h-1zM458 206h1v1h-1zM464 206h1v1h-1zM459 207h1v1h-1zM463 207h1v1h-1zM460 208h1v1h-1zM461 208h1v1h-1zM462 208h1v1h-1zM460 193h1v1h-1zM461 193h1v1h-1zM462 193h1v1h-1zM459 194h1v1h-1zM463 194h1v1h-1zM458 195h1v1h-1zM464 195h1v1h-1zM458 196h1v1h-1zM464 196h1v1h-1zM458 197h1v1h-1zM464 197h1v1h-1zM459 198h1v1h-1zM463 198h1v1h-1zM460 199h1v1h-1zM461 199h1v1h-1zM462 199h1v1h-1zM460 184h1v1h-1zM461 184h1v1h-1zM462 184h1v1h-1zM459 185h1v1h-1zM463 185h1v1h-1zM458 186h1v1h-1zM464 186h1v1h-1zM458 187h1v1h-1zM464 187h1v1h-1zM458 188h1v1h-1zM464 188h1v1h-1zM459 189h1v1h-1zM463 189h1v1h-1zM460 190h1v1h-1zM461 190h1v1h-1zM462 190h1v1h-1zM460 176h1v1h-1zM461 176h1v1h-1zM462 176h1v1h-1zM459 177h1v1h-1zM463 177h1v1h-1zM458 178h1v1h-1zM464 178h1v1h-1zM458 179h1v1h-1zM464 179h1v1h-1zM458 180h1v1h-1zM464 180h1v1h-1zM459 181h1v1h-1zM463 181h1v1h-1zM460 182h1v1h-1zM461 182h1v1h-1zM462 182h1v1h-1zM460 167h1v1h-1zM461 167h1v1h-1zM462 167h1v1h-1zM459 168h1v1h-1zM463 168h1v1h-1zM458 169h1v1h-1zM464 169h1v1h-1zM458 170h1v1h-1zM464 170h1v1h-1zM458 171h1v1h-1zM464 171h1v1h-1zM459 172h1v1h-1zM463 172h1v1h-1zM460 173h1v1h-1zM461 173h1v1h-1zM462 173h1v1h-1zM478 237h1v1h-1zM479 237h1v1h-1zM480 237h1v1h-1zM477 238h1v1h-1zM481 238h1v1h-1zM476 239h1v1h-1zM482 239h1v1h-1zM476 240h1v1h-1zM482 240h1v1h-1zM476 241h1v1h-1zM482 241h1v1h-1zM477 242h1v1h-1zM481 242h1v1h-1zM478 243h1v1h-1zM479 243h1v1h-1zM480 243h1v1h-1zM478 228h1v1h-1zM479 228h1v1h-1zM480 228h1v1h-1zM477 229h1v1h-1zM481 229h1v1h-1zM476 230h1v1h-1zM482 230h1v1h-1zM476 231h1v1h-1zM482 231h1v1h-1zM476 232h1v1h-1zM482 232h1v1h-1zM477 233h1v1h-1zM481 233h1v1h-1zM478 234h1v1h-1zM479 234h1v1h-1zM480 234h1v1h-1zM478 211h1v1h-1zM479 211h1v1h-1zM480 211h1v1h-1zM477 212h1v1h-1zM481 212h1v1h-1zM476 213h1v1h-1zM482 213h1v1h-1zM476 214h1v1h-1zM482 214h1v1h-1zM476 215h1v1h-1zM482 215h1v1h-1zM477 216h1v1h-1zM481 216h1v1h-1zM478 217h1v1h-1zM479 217h1v1h-1zM480 217h1v1h-1zM478 202h1v1h-1zM479 202h1v1h-1zM480 202h1v1h-1zM477 203h1v1h-1zM481 203h1v1h-1zM476 204h1v1h-1zM482 204h1v1h-1zM476 205h1v1h-1zM482 205h1v1h-1zM476 206h1v1h-1zM482 206h1v1h-1zM477 207h1v1h-1zM481 207h1v1h-1zM478 208h1v1h-1zM479 208h1v1h-1zM480 208h1v1h-1zM478 193h1v1h-1zM479 193h1v1h-1zM480 193h1v1h-1zM477 194h1v1h-1zM481 194h1v1h-1zM476 195h1v1h-1zM482 195h1v1h-1zM476 196h1v1h-1zM482 196h1v1h-1zM476 197h1v1h-1zM482 197h1v1h-1zM477 198h1v1h-1zM481 198h1v1h-1zM478 199h1v1h-1zM479 199h1v1h-1zM480 199h1v1h-1zM478 184h1v1h-1zM479 184h1v1h-1zM480 184h1v1h-1zM477 185h1v1h-1zM481 185h1v1h-1zM476 186h1v1h-1zM482 186h1v1h-1zM476 187h1v1h-1zM482 187h1v1h-1zM476 188h1v1h-1zM482 188h1v1h-1zM477 189h1v1h-1zM481 189h1v1h-1zM478 190h1v1h-1zM479 190h1v1h-1zM480 190h1v1h-1zM495 324h1v1h-1zM496 324h1v1h-1zM497 324h1v1h-1zM494 325h1v1h-1zM498 325h1v1h-1zM493 326h1v1h-1zM499 326h1v1h-1zM493 327h1v1h-1zM499 327h1v1h-1zM493 328h1v1h-1zM499 328h1v1h-1zM494 329h1v1h-1zM498 329h1v1h-1zM495 330h1v1h-1zM496 330h1v1h-1zM497 330h1v1h-1zM495 315h1v1h-1zM496 315h1v1h-1zM497 315h1v1h-1zM494 316h1v1h-1zM498 316h1v1h-1zM493 317h1v1h-1zM499 317h1v1h-1zM493 318h1v1h-1zM499 318h1v1h-1zM493 319h1v1h-1zM499 319h1v1h-1zM494 320h1v1h-1zM498 320h1v1h-1zM495 321h1v1h-1zM496 321h1v1h-1zM497 321h1v1h-1zM495 306h1v1h-1zM496 306h1v1h-1zM497 306h1v1h-1zM494 307h1v1h-1zM498 307h1v1h-1zM493 308h1v1h-1zM499 308h1v1h-1zM493 309h1v1h-1zM499 309h1v1h-1zM493 310h1v1h-1zM499 310h1v1h-1zM494 311h1v1h-1zM498 311h1v1h-1zM495 312h1v1h-1zM496 312h1v1h-1zM497 312h1v1h-1zM495 298h1v1h-1zM496 298h1v1h-1zM497 298h1v1h-1zM494 299h1v1h-1zM498 299h1v1h-1zM493 300h1v1h-1zM499 300h1v1h-1zM493 301h1v1h-1zM499 301h1v1h-1zM493 302h1v1h-1zM499 302h1v1h-1zM494 303h1v1h-1zM498 303h1v1h-1zM495 304h1v1h-1zM496 304h1v1h-1zM497 304h1v1h-1zM495 289h1v1h-1zM496 289h1v1h-1zM497 289h1v1h-1zM494 290h1v1h-1zM498 290h1v1h-1zM493 291h1v1h-1zM499 291h1v1h-1zM493 292h1v1h-1zM499 292h1v1h-1zM493 293h1v1h-1zM499 293h1v1h-1zM494 294h1v1h-1zM498 294h1v1h-1zM495 295h1v1h-1zM496 295h1v1h-1zM497 295h1v1h-1zM495 280h1v1h-1zM496 280h1v1h-1zM497 280h1v1h-1zM494 281h1v1h-1zM498 281h1v1h-1zM493 282h1v1h-1zM499 282h1v1h-1zM493 283h1v1h-1zM499 283h1v1h-1zM493 284h1v1h-1zM499 284h1v1h-1zM494 285h1v1h-1zM498 285h1v1h-1zM495 286h1v1h-1zM496 286h1v1h-1zM497 286h1v1h-1zM495 272h1v1h-1zM496 272h1v1h-1zM497 272h1v1h-1zM494 273h1v1h-1zM498 273h1v1h-1zM493 274h1v1h-1zM499 274h1v1h-1zM493 275h1v1h-1zM499 275h1v1h-1zM493 276h1v1h-1zM499 276h1v1h-1zM494 277h1v1h-1zM498 277h1v1h-1zM495 278h1v1h-1zM496 278h1v1h-1zM497 278h1v1h-1zM495 263h1v1h-1zM496 263h1v1h-1zM497 263h1v1h-1zM494 264h1v1h-1zM498 264h1v1h-1zM493 265h1v1h-1zM499 265h1v1h-1zM493 266h1v1h-1zM499 266h1v1h-1zM493 267h1v1h-1zM499 267h1v1h-1zM494 268h1v1h-1zM498 268h1v1h-1zM495 269h1v1h-1zM496 269h1v1h-1zM497 269h1v1h-1zM495 254h1v1h-1zM496 254h1v1h-1zM497 254h1v1h-1zM494 255h1v1h-1zM498 255h1v1h-1zM493 256h1v1h-1zM499 256h1v1h-1zM493 257h1v1h-1zM499 257h1v1h-1zM493 258h1v1h-1zM499 258h1v1h-1zM494 259h1v1h-1zM498 259h1v1h-1zM495 260h1v1h-1zM496 260h1v1h-1zM497 260h1v1h-1zM495 245h1v1h-1zM496 245h1v1h-1zM497 245h1v1h-1zM494 246h1v1h-1zM498 246h1v1h-1zM493 247h1v1h-1zM499 247h1v1h-1zM493 248h1v1h-1zM499 248h1v1h-1zM493 249h1v1h-1zM499 249h1v1h-1zM494 250h1v1h-1zM498 250h1v1h-1zM495 251h1v1h-1zM496 251h1v1h-1zM497 251h1v1h-1zM495 237h1v1h-1zM496 237h1v1h-1zM497 237h1v1h-1zM494 238h1v1h-1zM498 238h1v1h-1zM493 239h1v1h-1zM499 239h1v1h-1zM493 240h1v1h-1zM499 240h1v1h-1zM493 241h1v1h-1zM499 241h1v1h-1zM494 242h1v1h-1zM498 242h1v1h-1zM495 243h1v1h-1zM496 243h1v1h-1zM497 243h1v1h-1zM495 228h1v1h-1zM496 228h1v1h-1zM497 228h1v1h-1zM494 229h1v1h-1zM498 229h1v1h-1zM493 230h1v1h-1zM499 230h1v1h-1zM493 231h1v1h-1zM499 231h1v1h-1zM493 232h1v1h-1zM499 232h1v1h-1zM494 233h1v1h-1zM498 233h1v1h-1zM495 234h1v1h-1zM496 234h1v1h-1zM497 234h1v1h-1zM495 219h1v1h-1zM496 219h1v1h-1zM497 219h1v1h-1zM494 220h1v1h-1zM498 220h1v1h-1zM493 221h1v1h-1zM499 221h1v1h-1zM493 222h1v1h-1zM499 222h1v1h-1zM493 223h1v1h-1zM499 223h1v1h-1zM494 224h1v1h-1zM498 224h1v1h-1zM495 225h1v1h-1zM496 225h1v1h-1zM497 225h1v1h-1zM495 211h1v1h-1zM496 211h1v1h-1zM497 211h1v1h-1zM494 212h1v1h-1zM498 212h1v1h-1zM493 213h1v1h-1zM499 213h1v1h-1zM493 214h1v1h-1zM499 214h1v1h-1zM493 215h1v1h-1zM499 215h1v1h-1zM494 216h1v1h-1zM498 216h1v1h-1zM495 217h1v1h-1zM496 217h1v1h-1zM497 217h1v1h-1zM495 202h1v1h-1zM496 202h1v1h-1zM497 202h1v1h-1zM494 203h1v1h-1zM498 203h1v1h-1zM493 204h1v1h-1zM499 204h1v1h-1zM493 205h1v1h-1zM499 205h1v1h-1zM493 206h1v1h-1zM499 206h1v1h-1zM494 207h1v1h-1zM498 207h1v1h-1zM495 208h1v1h-1zM496 208h1v1h-1zM497 208h1v1h-1zM495 193h1v1h-1zM496 193h1v1h-1zM497 193h1v1h-1zM494 194h1v1h-1zM498 194h1v1h-1zM493 195h1v1h-1zM499 195h1v1h-1zM493 196h1v1h-1zM499 196h1v1h-1zM493 197h1v1h-1zM499 197h1v1h-1zM494 198h1v1h-1zM498 198h1v1h-1zM495 199h1v1h-1zM496 199h1v1h-1zM497 199h1v1h-1zM495 176h1v1h-1zM496 176h1v1h-1zM497 176h1v1h-1zM494 177h1v1h-1zM498 177h1v1h-1zM493 178h1v1h-1zM499 178h1v1h-1zM493 179h1v1h-1zM499 179h1v1h-1zM493 180h1v1h-1zM499 180h1v1h-1zM494 181h1v1h-1zM498 181h1v1h-1zM495 182h1v1h-1zM496 182h1v1h-1zM497 182h1v1h-1zM495 167h1v1h-1zM496 167h1v1h-1zM497 167h1v1h-1zM494 168h1v1h-1zM498 168h1v1h-1zM493 169h1v1h-1zM499 169h1v1h-1zM493 170h1v1h-1zM499 170h1v1h-1zM493 171h1v1h-1zM499 171h1v1h-1zM494 172h1v1h-1zM498 172h1v1h-1zM495 173h1v1h-1zM496 173h1v1h-1zM497 173h1v1h-1zM495 158h1v1h-1zM496 158h1v1h-1zM497 158h1v1h-1zM494 159h1v1h-1zM498 159h1v1h-1zM493 160h1v1h-1zM499 160h1v1h-1zM493 161h1v1h-1zM499 161h1v1h-1zM493 162h1v1h-1zM499 162h1v1h-1zM494 163h1v1h-1zM498 163h1v1h-1zM495 164h1v1h-1zM496 164h1v1h-1zM497 164h1v1h-1zM495 150h1v1h-1zM496 150h1v1h-1zM497 150h1v1h-1zM494 151h1v1h-1zM498 151h1v1h-1zM493 152h1v1h-1zM499 152h1v1h-1zM493 153h1v1h-1zM499 153h1v1h-1zM493 154h1v1h-1zM499 154h1v1h-1zM494 155h1v1h-1zM498 155h1v1h-1zM495 156h1v1h-1zM496 156h1v1h-1zM497 156h1v1h-1zM495 132h1v1h-1zM496 132h1v1h-1zM497 132h1v1h-1zM494 133h1v1h-1zM498 133h1v1h-1zM493 134h1v1h-1zM499 134h1v1h-1zM493 135h1v1h-1zM499 135h1v1h-1zM493 136h1v1h-1zM499 136h1v1h-1zM494 137h1v1h-1zM498 137h1v1h-1zM495 138h1v1h-1zM496 138h1v1h-1zM497 138h1v1h-1zM495 123h1v1h-1zM496 123h1v1h-1zM497 123h1v1h-1zM494 124h1v1h-1zM498 124h1v1h-1zM493 125h1v1h-1zM499 125h1v1h-1zM493 126h1v1h-1zM499 126h1v1h-1zM493 127h1v1h-1zM499 127h1v1h-1zM494 128h1v1h-1zM498 128h1v1h-1zM495 129h1v1h-1zM496 129h1v1h-1zM497 129h1v1h-1zM495 115h1v1h-1zM496 115h1v1h-1zM497 115h1v1h-1zM494 116h1v1h-1zM498 116h1v1h-1zM493 117h1v1h-1zM499 117h1v1h-1zM493 118h1v1h-1zM499 118h1v1h-1zM493 119h1v1h-1zM499 119h1v1h-1zM494 120h1v1h-1zM498 120h1v1h-1zM495 121h1v1h-1zM496 121h1v1h-1zM497 121h1v1h-1zM495 106h1v1h-1zM496 106h1v1h-1zM497 106h1v1h-1zM494 107h1v1h-1zM498 107h1v1h-1zM493 108h1v1h-1zM499 108h1v1h-1zM493 109h1v1h-1zM499 109h1v1h-1zM493 110h1v1h-1zM499 110h1v1h-1zM494 111h1v1h-1zM498 111h1v1h-1zM495 112h1v1h-1zM496 112h1v1h-1zM497 112h1v1h-1zM512 394h1v1h-1zM513 394h1v1h-1zM514 394h1v1h-1zM511 395h1v1h-1zM515 395h1v1h-1zM510 396h1v1h-1zM516 396h1v1h-1zM510 397h1v1h-1zM516 397h1v1h-1zM510 398h1v1h-1zM516 398h1v1h-1zM511 399h1v1h-1zM515 399h1v1h-1zM512 400h1v1h-1zM513 400h1v1h-1zM514 400h1v1h-1zM512 385h1v1h-1zM513 385h1v1h-1zM514 385h1v1h-1zM511 386h1v1h-1zM515 386h1v1h-1zM510 387h1v1h-1zM516 387h1v1h-1zM510 388h1v1h-1zM516 388h1v1h-1zM510 389h1v1h-1zM516 389h1v1h-1zM511 390h1v1h-1zM515 390h1v1h-1zM512 391h1v1h-1zM513 391h1v1h-1zM514 391h1v1h-1zM512 376h1v1h-1zM513 376h1v1h-1zM514 376h1v1h-1zM511 377h1v1h-1zM515 377h1v1h-1zM510 378h1v1h-1zM516 378h1v1h-1zM510 379h1v1h-1zM516 379h1v1h-1zM510 380h1v1h-1zM516 380h1v1h-1zM511 381h1v1h-1zM515 381h1v1h-1zM512 382h1v1h-1zM513 382h1v1h-1zM514 382h1v1h-1zM512 368h1v1h-1zM513 368h1v1h-1zM514 368h1v1h-1zM511 369h1v1h-1zM515 369h1v1h-1zM510 370h1v1h-1zM516 370h1v1h-1zM510 371h1v1h-1zM516 371h1v1h-1zM510 372h1v1h-1zM516 372h1v1h-1zM511 373h1v1h-1zM515 373h1v1h-1zM512 374h1v1h-1zM513 374h1v1h-1zM514 374h1v1h-1zM512 359h1v1h-1zM513 359h1v1h-1zM514 359h1v1h-1zM511 360h1v1h-1zM515 360h1v1h-1zM510 361h1v1h-1zM516 361h1v1h-1zM510 362h1v1h-1zM516 362h1v1h-1zM510 363h1v1h-1zM516 363h1v1h-1zM511 364h1v1h-1zM515 364h1v1h-1zM512 365h1v1h-1zM513 365h1v1h-1zM514 365h1v1h-1zM512 350h1v1h-1zM513 350h1v1h-1zM514 350h1v1h-1zM511 351h1v1h-1zM515 351h1v1h-1zM510 352h1v1h-1zM516 352h1v1h-1zM510 353h1v1h-1zM516 353h1v1h-1zM510 354h1v1h-1zM516 354h1v1h-1zM511 355h1v1h-1zM515 355h1v1h-1zM512 356h1v1h-1zM513 356h1v1h-1zM514 356h1v1h-1zM512 341h1v1h-1zM513 341h1v1h-1zM514 341h1v1h-1zM511 342h1v1h-1zM515 342h1v1h-1zM510 343h1v1h-1zM516 343h1v1h-1zM510 344h1v1h-1zM516 344h1v1h-1zM510 345h1v1h-1zM516 345h1v1h-1zM511 346h1v1h-1zM515 346h1v1h-1zM512 347h1v1h-1zM513 347h1v1h-1zM514 347h1v1h-1zM512 333h1v1h-1zM513 333h1v1h-1zM514 333h1v1h-1zM511 334h1v1h-1zM515 334h1v1h-1zM510 335h1v1h-1zM516 335h1v1h-1zM510 336h1v1h-1zM516 336h1v1h-1zM510 337h1v1h-1zM516 337h1v1h-1zM511 338h1v1h-1zM515 338h1v1h-1zM512 339h1v1h-1zM513 339h1v1h-1zM514 339h1v1h-1zM512 324h1v1h-1zM513 324h1v1h-1zM514 324h1v1h-1zM511 325h1v1h-1zM515 325h1v1h-1zM510 326h1v1h-1zM516 326h1v1h-1zM510 327h1v1h-1zM516 327h1v1h-1zM510 328h1v1h-1zM516 328h1v1h-1zM511 329h1v1h-1zM515 329h1v1h-1zM512 330h1v1h-1zM513 330h1v1h-1zM514 330h1v1h-1zM512 315h1v1h-1zM513 315h1v1h-1zM514 315h1v1h-1zM511 316h1v1h-1zM515 316h1v1h-1zM510 317h1v1h-1zM516 317h1v1h-1zM510 318h1v1h-1zM516 318h1v1h-1zM510 319h1v1h-1zM516 319h1v1h-1zM511 320h1v1h-1zM515 320h1v1h-1zM512 321h1v1h-1zM513 321h1v1h-1zM514 321h1v1h-1zM512 306h1v1h-1zM513 306h1v1h-1zM514 306h1v1h-1zM511 307h1v1h-1zM515 307h1v1h-1zM510 308h1v1h-1zM516 308h1v1h-1zM510 309h1v1h-1zM516 309h1v1h-1zM510 310h1v1h-1zM516 310h1v1h-1zM511 311h1v1h-1zM515 311h1v1h-1zM512 312h1v1h-1zM513 312h1v1h-1zM514 312h1v1h-1zM512 298h1v1h-1zM513 298h1v1h-1zM514 298h1v1h-1zM511 299h1v1h-1zM515 299h1v1h-1zM510 300h1v1h-1zM516 300h1v1h-1zM510 301h1v1h-1zM516 301h1v1h-1zM510 302h1v1h-1zM516 302h1v1h-1zM511 303h1v1h-1zM515 303h1v1h-1zM512 304h1v1h-1zM513 304h1v1h-1zM514 304h1v1h-1zM512 289h1v1h-1zM513 289h1v1h-1zM514 289h1v1h-1zM511 290h1v1h-1zM515 290h1v1h-1zM510 291h1v1h-1zM516 291h1v1h-1zM510 292h1v1h-1zM516 292h1v1h-1zM510 293h1v1h-1zM516 293h1v1h-1zM511 294h1v1h-1zM515 294h1v1h-1zM512 295h1v1h-1zM513 295h1v1h-1zM514 295h1v1h-1zM512 280h1v1h-1zM513 280h1v1h-1zM514 280h1v1h-1zM511 281h1v1h-1zM515 281h1v1h-1zM510 282h1v1h-1zM516 282h1v1h-1zM510 283h1v1h-1zM516 283h1v1h-1zM510 284h1v1h-1zM516 284h1v1h-1zM511 285h1v1h-1zM515 285h1v1h-1zM512 286h1v1h-1zM513 286h1v1h-1zM514 286h1v1h-1zM530 306h1v1h-1zM531 306h1v1h-1zM532 306h1v1h-1zM529 307h1v1h-1zM533 307h1v1h-1zM528 308h1v1h-1zM534 308h1v1h-1zM528 309h1v1h-1zM534 309h1v1h-1zM528 310h1v1h-1zM534 310h1v1h-1zM529 311h1v1h-1zM533 311h1v1h-1zM530 312h1v1h-1zM531 312h1v1h-1zM532 312h1v1h-1zM530 298h1v1h-1zM531 298h1v1h-1zM532 298h1v1h-1zM529 299h1v1h-1zM533 299h1v1h-1zM528 300h1v1h-1zM534 300h1v1h-1zM528 301h1v1h-1zM534 301h1v1h-1zM528 302h1v1h-1zM534 302h1v1h-1zM529 303h1v1h-1zM533 303h1v1h-1zM530 304h1v1h-1zM531 304h1v1h-1zM532 304h1v1h-1zM530 289h1v1h-1zM531 289h1v1h-1zM532 289h1v1h-1zM529 290h1v1h-1zM533 290h1v1h-1zM528 291h1v1h-1zM534 291h1v1h-1zM528 292h1v1h-1zM534 292h1v1h-1zM528 293h1v1h-1zM534 293h1v1h-1zM529 294h1v1h-1zM533 294h1v1h-1zM530 295h1v1h-1zM531 295h1v1h-1zM532 295h1v1h-1zM547 385h1v1h-1zM548 385h1v1h-1zM549 385h1v1h-1zM546 386h1v1h-1zM550 386h1v1h-1zM545 387h1v1h-1zM551 387h1v1h-1zM545 388h1v1h-1zM551 388h1v1h-1zM545 389h1v1h-1zM551 389h1v1h-1zM546 390h1v1h-1zM550 390h1v1h-1zM547 391h1v1h-1zM548 391h1v1h-1zM549 391h1v1h-1zM547 376h1v1h-1zM548 376h1v1h-1zM549 376h1v1h-1zM546 377h1v1h-1zM550 377h1v1h-1zM545 378h1v1h-1zM551 378h1v1h-1zM545 379h1v1h-1zM551 379h1v1h-1zM545 380h1v1h-1zM551 380h1v1h-1zM546 381h1v1h-1zM550 381h1v1h-1zM547 382h1v1h-1zM548 382h1v1h-1zM549 382h1v1h-1zM547 368h1v1h-1zM548 368h1v1h-1zM549 368h1v1h-1zM546 369h1v1h-1zM550 369h1v1h-1zM545 370h1v1h-1zM551 370h1v1h-1zM545 371h1v1h-1zM551 371h1v1h-1zM545 372h1v1h-1zM551 372h1v1h-1zM546 373h1v1h-1zM550 373h1v1h-1zM547 374h1v1h-1zM548 374h1v1h-1zM549 374h1v1h-1zM547 359h1v1h-1zM548 359h1v1h-1zM549 359h1v1h-1zM546 360h1v1h-1zM550 360h1v1h-1zM545 361h1v1h-1zM551 361h1v1h-1zM545 362h1v1h-1zM551 362h1v1h-1zM545 363h1v1h-1zM551 363h1v1h-1zM546 364h1v1h-1zM550 364h1v1h-1zM547 365h1v1h-1zM548 365h1v1h-1zM549 365h1v1h-1zM547 350h1v1h-1zM548 350h1v1h-1zM549 350h1v1h-1zM546 351h1v1h-1zM550 351h1v1h-1zM545 352h1v1h-1zM551 352h1v1h-1zM545 353h1v1h-1zM551 353h1v1h-1zM545 354h1v1h-1zM551 354h1v1h-1zM546 355h1v1h-1zM550 355h1v1h-1zM547 356h1v1h-1zM548 356h1v1h-1zM549 356h1v1h-1zM547 341h1v1h-1zM548 341h1v1h-1zM549 341h1v1h-1zM546 342h1v1h-1zM550 342h1v1h-1zM545 343h1v1h-1zM551 343h1v1h-1zM545 344h1v1h-1zM551 344h1v1h-1zM545 345h1v1h-1zM551 345h1v1h-1zM546 346h1v1h-1zM550 346h1v1h-1zM547 347h1v1h-1zM548 347h1v1h-1zM549 347h1v1h-1zM547 333h1v1h-1zM548 333h1v1h-1zM549 333h1v1h-1zM546 334h1v1h-1zM550 334h1v1h-1zM545 335h1v1h-1zM551 335h1v1h-1zM545 336h1v1h-1zM551 336h1v1h-1zM545 337h1v1h-1zM551 337h1v1h-1zM546 338h1v1h-1zM550 338h1v1h-1zM547 339h1v1h-1zM548 339h1v1h-1zM549 339h1v1h-1zM547 324h1v1h-1zM548 324h1v1h-1zM549 324h1v1h-1zM546 325h1v1h-1zM550 325h1v1h-1zM545 326h1v1h-1zM551 326h1v1h-1zM545 327h1v1h-1zM551 327h1v1h-1zM545 328h1v1h-1zM551 328h1v1h-1zM546 329h1v1h-1zM550 329h1v1h-1zM547 330h1v1h-1zM548 330h1v1h-1zM549 330h1v1h-1zM547 315h1v1h-1zM548 315h1v1h-1zM549 315h1v1h-1zM546 316h1v1h-1zM550 316h1v1h-1zM545 317h1v1h-1zM551 317h1v1h-1zM545 318h1v1h-1zM551 318h1v1h-1zM545 319h1v1h-1zM551 319h1v1h-1zM546 320h1v1h-1zM550 320h1v1h-1zM547 321h1v1h-1zM548 321h1v1h-1zM549 321h1v1h-1zM547 306h1v1h-1zM548 306h1v1h-1zM549 306h1v1h-1zM546 307h1v1h-1zM550 307h1v1h-1zM545 308h1v1h-1zM551 308h1v1h-1zM545 309h1v1h-1zM551 309h1v1h-1zM545 310h1v1h-1zM551 310h1v1h-1zM546 311h1v1h-1zM550 311h1v1h-1zM547 312h1v1h-1zM548 312h1v1h-1zM549 312h1v1h-1zM547 298h1v1h-1zM548 298h1v1h-1zM549 298h1v1h-1zM546 299h1v1h-1zM550 299h1v1h-1zM545 300h1v1h-1zM551 300h1v1h-1zM545 301h1v1h-1zM551 301h1v1h-1zM545 302h1v1h-1zM551 302h1v1h-1zM546 303h1v1h-1zM550 303h1v1h-1zM547 304h1v1h-1zM548 304h1v1h-1zM549 304h1v1h-1zM547 289h1v1h-1zM548 289h1v1h-1zM549 289h1v1h-1zM546 290h1v1h-1zM550 290h1v1h-1zM545 291h1v1h-1zM551 291h1v1h-1zM545 292h1v1h-1zM551 292h1v1h-1zM545 293h1v1h-1zM551 293h1v1h-1zM546 294h1v1h-1zM550 294h1v1h-1zM547 295h1v1h-1zM548 295h1v1h-1zM549 295h1v1h-1zM547 280h1v1h-1zM548 280h1v1h-1zM549 280h1v1h-1zM546 281h1v1h-1zM550 281h1v1h-1zM545 282h1v1h-1zM551 282h1v1h-1zM545 283h1v1h-1zM551 283h1v1h-1zM545 284h1v1h-1zM551 284h1v1h-1zM546 285h1v1h-1zM550 285h1v1h-1zM547 286h1v1h-1zM548 286h1v1h-1zM549 286h1v1h-1zM547 272h1v1h-1zM548 272h1v1h-1zM549 272h1v1h-1zM546 273h1v1h-1zM550 273h1v1h-1zM545 274h1v1h-1zM551 274h1v1h-1zM545 275h1v1h-1zM551 275h1v1h-1zM545 276h1v1h-1zM551 276h1v1h-1zM546 277h1v1h-1zM550 277h1v1h-1zM547 278h1v1h-1zM548 278h1v1h-1zM549 278h1v1h-1zM547 263h1v1h-1zM548 263h1v1h-1zM549 263h1v1h-1zM546 264h1v1h-1zM550 264h1v1h-1zM545 265h1v1h-1zM551 265h1v1h-1zM545 266h1v1h-1zM551 266h1v1h-1zM545 267h1v1h-1zM551 267h1v1h-1zM546 268h1v1h-1zM550 268h1v1h-1zM547 269h1v1h-1zM548 269h1v1h-1zM549 269h1v1h-1zM547 254h1v1h-1zM548 254h1v1h-1zM549 254h1v1h-1zM546 255h1v1h-1zM550 255h1v1h-1zM545 256h1v1h-1zM551 256h1v1h-1zM545 257h1v1h-1zM551 257h1v1h-1zM545 258h1v1h-1zM551 258h1v1h-1zM546 259h1v1h-1zM550 259h1v1h-1zM547 260h1v1h-1zM548 260h1v1h-1zM549 260h1v1h-1zM547 245h1v1h-1zM548 245h1v1h-1zM549 245h1v1h-1zM546 246h1v1h-1zM550 246h1v1h-1zM545 247h1v1h-1zM551 247h1v1h-1zM545 248h1v1h-1zM551 248h1v1h-1zM545 249h1v1h-1zM551 249h1v1h-1zM546 250h1v1h-1zM550 250h1v1h-1zM547 251h1v1h-1zM548 251h1v1h-1zM549 251h1v1h-1zM547 237h1v1h-1zM548 237h1v1h-1zM549 237h1v1h-1zM546 238h1v1h-1zM550 238h1v1h-1zM545 239h1v1h-1zM551 239h1v1h-1zM545 240h1v1h-1zM551 240h1v1h-1zM545 241h1v1h-1zM551 241h1v1h-1zM546 242h1v1h-1zM550 242h1v1h-1zM547 243h1v1h-1zM548 243h1v1h-1zM549 243h1v1h-1zM547 228h1v1h-1zM548 228h1v1h-1zM549 228h1v1h-1zM546 229h1v1h-1zM550 229h1v1h-1zM545 230h1v1h-1zM551 230h1v1h-1zM545 231h1v1h-1zM551 231h1v1h-1zM545 232h1v1h-1zM551 232h1v1h-1zM546 233h1v1h-1zM550 233h1v1h-1zM547 234h1v1h-1zM548 234h1v1h-1zM549 234h1v1h-1zM547 219h1v1h-1zM548 219h1v1h-1zM549 219h1v1h-1zM546 220h1v1h-1zM550 220h1v1h-1zM545 221h1v1h-1zM551 221h1v1h-1zM545 222h1v1h-1zM551 222h1v1h-1zM545 223h1v1h-1zM551 223h1v1h-1zM546 224h1v1h-1zM550 224h1v1h-1zM547 225h1v1h-1zM548 225h1v1h-1zM549 225h1v1h-1zM547 211h1v1h-1zM548 211h1v1h-1zM549 211h1v1h-1zM546 212h1v1h-1zM550 212h1v1h-1zM545 213h1v1h-1zM551 213h1v1h-1zM545 214h1v1h-1zM551 214h1v1h-1zM545 215h1v1h-1zM551 215h1v1h-1zM546 216h1v1h-1zM550 216h1v1h-1zM547 217h1v1h-1zM548 217h1v1h-1zM549 217h1v1h-1zM565 350h1v1h-1zM566 350h1v1h-1zM567 350h1v1h-1zM564 351h1v1h-1zM568 351h1v1h-1zM563 352h1v1h-1zM569 352h1v1h-1zM563 353h1v1h-1zM569 353h1v1h-1zM563 354h1v1h-1zM569 354h1v1h-1zM564 355h1v1h-1zM568 355h1v1h-1zM565 356h1v1h-1zM566 356h1v1h-1zM567 356h1v1h-1zM565 341h1v1h-1zM566 341h1v1h-1zM567 341h1v1h-1zM564 342h1v1h-1zM568 342h1v1h-1zM563 343h1v1h-1zM569 343h1v1h-1zM563 344h1v1h-1zM569 344h1v1h-1zM563 345h1v1h-1zM569 345h1v1h-1zM564 346h1v1h-1zM568 346h1v1h-1zM565 347h1v1h-1zM566 347h1v1h-1zM567 347h1v1h-1zM565 324h1v1h-1zM566 324h1v1h-1zM567 324h1v1h-1zM564 325h1v1h-1zM568 325h1v1h-1zM563 326h1v1h-1zM569 326h1v1h-1zM563 327h1v1h-1zM569 327h1v1h-1zM563 328h1v1h-1zM569 328h1v1h-1zM564 329h1v1h-1zM568 329h1v1h-1zM565 330h1v1h-1zM566 330h1v1h-1zM567 330h1v1h-1zM565 315h1v1h-1zM566 315h1v1h-1zM567 315h1v1h-1zM564 316h1v1h-1zM568 316h1v1h-1zM563 317h1v1h-1zM569 317h1v1h-1zM563 318h1v1h-1zM569 318h1v1h-1zM563 319h1v1h-1zM569 319h1v1h-1zM564 320h1v1h-1zM568 320h1v1h-1zM565 321h1v1h-1zM566 321h1v1h-1zM567 321h1v1h-1zM565 306h1v1h-1zM566 306h1v1h-1zM567 306h1v1h-1zM564 307h1v1h-1zM568 307h1v1h-1zM563 308h1v1h-1zM569 308h1v1h-1zM563 309h1v1h-1zM569 309h1v1h-1zM563 310h1v1h-1zM569 310h1v1h-1zM564 311h1v1h-1zM568 311h1v1h-1zM565 312h1v1h-1zM566 312h1v1h-1zM567 312h1v1h-1zM565 298h1v1h-1zM566 298h1v1h-1zM567 298h1v1h-1zM564 299h1v1h-1zM568 299h1v1h-1zM563 300h1v1h-1zM569 300h1v1h-1zM563 301h1v1h-1zM569 301h1v1h-1zM563 302h1v1h-1zM569 302h1v1h-1zM564 303h1v1h-1zM568 303h1v1h-1zM565 304h1v1h-1zM566 304h1v1h-1zM567 304h1v1h-1zM565 289h1v1h-1zM566 289h1v1h-1zM567 289h1v1h-1zM564 290h1v1h-1zM568 290h1v1h-1zM563 291h1v1h-1zM569 291h1v1h-1zM563 292h1v1h-1zM569 292h1v1h-1zM563 293h1v1h-1zM569 293h1v1h-1zM564 294h1v1h-1zM568 294h1v1h-1zM565 295h1v1h-1zM566 295h1v1h-1zM567 295h1v1h-1zM565 280h1v1h-1zM566 280h1v1h-1zM567 280h1v1h-1zM564 281h1v1h-1zM568 281h1v1h-1zM563 282h1v1h-1zM569 282h1v1h-1zM563 283h1v1h-1zM569 283h1v1h-1zM563 284h1v1h-1zM569 284h1v1h-1zM564 285h1v1h-1zM568 285h1v1h-1zM565 286h1v1h-1zM566 286h1v1h-1zM567 286h1v1h-1zM565 272h1v1h-1zM566 272h1v1h-1zM567 272h1v1h-1zM564 273h1v1h-1zM568 273h1v1h-1zM563 274h1v1h-1zM569 274h1v1h-1zM563 275h1v1h-1zM569 275h1v1h-1zM563 276h1v1h-1zM569 276h1v1h-1zM564 277h1v1h-1zM568 277h1v1h-1zM565 278h1v1h-1zM566 278h1v1h-1zM567 278h1v1h-1zM565 263h1v1h-1zM566 263h1v1h-1zM567 263h1v1h-1zM564 264h1v1h-1zM568 264h1v1h-1zM563 265h1v1h-1zM569 265h1v1h-1zM563 266h1v1h-1zM569 266h1v1h-1zM563 267h1v1h-1zM569 267h1v1h-1zM564 268h1v1h-1zM568 268h1v1h-1zM565 269h1v1h-1zM566 269h1v1h-1zM567 269h1v1h-1zM565 254h1v1h-1zM566 254h1v1h-1zM567 254h1v1h-1zM564 255h1v1h-1zM568 255h1v1h-1zM563 256h1v1h-1zM569 256h1v1h-1zM563 257h1v1h-1zM569 257h1v1h-1zM563 258h1v1h-1zM569 258h1v1h-1zM564 259h1v1h-1zM568 259h1v1h-1zM565 260h1v1h-1zM566 260h1v1h-1zM567 260h1v1h-1zM565 237h1v1h-1zM566 237h1v1h-1zM567 237h1v1h-1zM564 238h1v1h-1zM568 238h1v1h-1zM563 239h1v1h-1zM569 239h1v1h-1zM563 240h1v1h-1zM569 240h1v1h-1zM563 241h1v1h-1zM569 241h1v1h-1zM564 242h1v1h-1zM568 242h1v1h-1zM565 243h1v1h-1zM566 243h1v1h-1zM567 243h1v1h-1zM565 228h1v1h-1zM566 228h1v1h-1zM567 228h1v1h-1zM564 229h1v1h-1zM568 229h1v1h-1zM563 230h1v1h-1zM569 230h1v1h-1zM563 231h1v1h-1zM569 231h1v1h-1zM563 232h1v1h-1zM569 232h1v1h-1zM564 233h1v1h-1zM568 233h1v1h-1zM565 234h1v1h-1zM566 234h1v1h-1zM567 234h1v1h-1zM565 219h1v1h-1zM566 219h1v1h-1zM567 219h1v1h-1zM564 220h1v1h-1zM568 220h1v1h-1zM563 221h1v1h-1zM569 221h1v1h-1zM563 222h1v1h-1zM569 222h1v1h-1zM563 223h1v1h-1zM569 223h1v1h-1zM564 224h1v1h-1zM568 224h1v1h-1zM565 225h1v1h-1zM566 225h1v1h-1zM567 225h1v1h-1zM565 211h1v1h-1zM566 211h1v1h-1zM567 211h1v1h-1zM564 212h1v1h-1zM568 212h1v1h-1zM563 213h1v1h-1zM569 213h1v1h-1zM563 214h1v1h-1zM569 214h1v1h-1zM563 215h1v1h-1zM569 215h1v1h-1zM564 216h1v1h-1zM568 216h1v1h-1zM565 217h1v1h-1zM566 217h1v1h-1zM567 217h1v1h-1zM565 202h1v1h-1zM566 202h1v1h-1zM567 202h1v1h-1zM564 203h1v1h-1zM568 203h1v1h-1zM563 204h1v1h-1zM569 204h1v1h-1zM563 205h1v1h-1zM569 205h1v1h-1zM563 206h1v1h-1zM569 206h1v1h-1zM564 207h1v1h-1zM568 207h1v1h-1zM565 208h1v1h-1zM566 208h1v1h-1zM567 208h1v1h-1zM565 193h1v1h-1zM566 193h1v1h-1zM567 193h1v1h-1zM564 194h1v1h-1zM568 194h1v1h-1zM563 195h1v1h-1zM569 195h1v1h-1zM563 196h1v1h-1zM569 196h1v1h-1zM563 197h1v1h-1zM569 197h1v1h-1zM564 198h1v1h-1zM568 198h1v1h-1zM565 199h1v1h-1zM566 199h1v1h-1zM567 199h1v1h-1zM565 184h1v1h-1zM566 184h1v1h-1zM567 184h1v1h-1zM564 185h1v1h-1zM568 185h1v1h-1zM563 186h1v1h-1zM569 186h1v1h-1zM563 187h1v1h-1zM569 187h1v1h-1zM563 188h1v1h-1zM569 188h1v1h-1zM564 189h1v1h-1zM568 189h1v1h-1zM565 190h1v1h-1zM566 190h1v1h-1zM567 190h1v1h-1zM565 176h1v1h-1zM566 176h1v1h-1zM567 176h1v1h-1zM564 177h1v1h-1zM568 177h1v1h-1zM563 178h1v1h-1zM569 178h1v1h-1zM563 179h1v1h-1zM569 179h1v1h-1zM563 180h1v1h-1zM569 180h1v1h-1zM564 181h1v1h-1zM568 181h1v1h-1zM565 182h1v1h-1zM566 182h1v1h-1zM567 182h1v1h-1zM565 167h1v1h-1zM566 167h1v1h-1zM567 167h1v1h-1zM564 168h1v1h-1zM568 168h1v1h-1zM563 169h1v1h-1zM569 169h1v1h-1zM563 170h1v1h-1zM569 170h1v1h-1zM563 171h1v1h-1zM569 171h1v1h-1zM564 172h1v1h-1zM568 172h1v1h-1zM565 173h1v1h-1zM566 173h1v1h-1zM567 173h1v1h-1zM565 158h1v1h-1zM566 158h1v1h-1zM567 158h1v1h-1zM564 159h1v1h-1zM568 159h1v1h-1zM563 160h1v1h-1zM569 160h1v1h-1zM563 161h1v1h-1zM569 161h1v1h-1zM563 162h1v1h-1zM569 162h1v1h-1zM564 163h1v1h-1zM568 163h1v1h-1zM565 164h1v1h-1zM566 164h1v1h-1zM567 164h1v1h-1zM565 150h1v1h-1zM566 150h1v1h-1zM567 150h1v1h-1zM564 151h1v1h-1zM568 151h1v1h-1zM563 152h1v1h-1zM569 152h1v1h-1zM563 153h1v1h-1zM569 153h1v1h-1zM563 154h1v1h-1zM569 154h1v1h-1zM564 155h1v1h-1zM568 155h1v1h-1zM565 156h1v1h-1zM566 156h1v1h-1zM567 156h1v1h-1zM565 141h1v1h-1zM566 141h1v1h-1zM567 141h1v1h-1zM564 142h1v1h-1zM568 142h1v1h-1zM563 143h1v1h-1zM569 143h1v1h-1zM563 144h1v1h-1zM569 144h1v1h-1zM563 145h1v1h-1zM569 145h1v1h-1zM564 146h1v1h-1zM568 146h1v1h-1zM565 147h1v1h-1zM566 147h1v1h-1zM567 147h1v1h-1zM582 158h1v1h-1zM583 158h1v1h-1zM584 158h1v1h-1zM581 159h1v1h-1zM585 159h1v1h-1zM580 160h1v1h-1zM586 160h1v1h-1zM580 161h1v1h-1zM586 161h1v1h-1zM580 162h1v1h-1zM586 162h1v1h-1zM581 163h1v1h-1zM585 163h1v1h-1zM582 164h1v1h-1zM583 164h1v1h-1zM584 164h1v1h-1zM582 150h1v1h-1zM583 150h1v1h-1zM584 150h1v1h-1zM581 151h1v1h-1zM585 151h1v1h-1zM580 152h1v1h-1zM586 152h1v1h-1zM580 153h1v1h-1zM586 153h1v1h-1zM580 154h1v1h-1zM586 154h1v1h-1zM581 155h1v1h-1zM585 155h1v1h-1zM582 156h1v1h-1zM583 156h1v1h-1zM584 156h1v1h-1zM582 141h1v1h-1zM583 141h1v1h-1zM584 141h1v1h-1zM581 142h1v1h-1zM585 142h1v1h-1zM580 143h1v1h-1zM586 143h1v1h-1zM580 144h1v1h-1zM586 144h1v1h-1zM580 145h1v1h-1zM586 145h1v1h-1zM581 146h1v1h-1zM585 146h1v1h-1zM582 147h1v1h-1zM583 147h1v1h-1zM584 147h1v1h-1zM582 132h1v1h-1zM583 132h1v1h-1zM584 132h1v1h-1zM581 133h1v1h-1zM585 133h1v1h-1zM580 134h1v1h-1zM586 134h1v1h-1zM580 135h1v1h-1zM586 135h1v1h-1zM580 136h1v1h-1zM586 136h1v1h-1zM581 137h1v1h-1zM585 137h1v1h-1zM582 138h1v1h-1zM583 138h1v1h-1zM584 138h1v1h-1zM582 123h1v1h-1zM583 123h1v1h-1zM584 123h1v1h-1zM581 124h1v1h-1zM585 124h1v1h-1zM580 125h1v1h-1zM586 125h1v1h-1zM580 126h1v1h-1zM586 126h1v1h-1zM580 127h1v1h-1zM586 127h1v1h-1zM581 128h1v1h-1zM585 128h1v1h-1zM582 129h1v1h-1zM583 129h1v1h-1zM584 129h1v1h-1zM582 115h1v1h-1zM583 115h1v1h-1zM584 115h1v1h-1zM581 116h1v1h-1zM585 116h1v1h-1zM580 117h1v1h-1zM586 117h1v1h-1zM580 118h1v1h-1zM586 118h1v1h-1zM580 119h1v1h-1zM586 119h1v1h-1zM581 120h1v1h-1zM585 120h1v1h-1zM582 121h1v1h-1zM583 121h1v1h-1zM584 121h1v1h-1zM582 106h1v1h-1zM583 106h1v1h-1zM584 106h1v1h-1zM581 107h1v1h-1zM585 107h1v1h-1zM580 108h1v1h-1zM586 108h1v1h-1zM580 109h1v1h-1zM586 109h1v1h-1zM580 110h1v1h-1zM586 110h1v1h-1zM581 111h1v1h-1zM585 111h1v1h-1zM582 112h1v1h-1zM583 112h1v1h-1zM584 112h1v1h-1zM600 132h1v1h-1zM601 132h1v1h-1zM602 132h1v1h-1zM599 133h1v1h-1zM603 133h1v1h-1zM598 134h1v1h-1zM604 134h1v1h-1zM598 135h1v1h-1zM604 135h1v1h-1zM598 136h1v1h-1zM604 136h1v1h-1zM599 137h1v1h-1zM603 137h1v1h-1zM600 138h1v1h-1zM601 138h1v1h-1zM602 138h1v1h-1zM600 123h1v1h-1zM601 123h1v1h-1zM602 123h1v1h-1zM599 124h1v1h-1zM603 124h1v1h-1zM598 125h1v1h-1zM604 125h1v1h-1zM598 126h1v1h-1zM604 126h1v1h-1zM598 127h1v1h-1zM604 127h1v1h-1zM599 128h1v1h-1zM603 128h1v1h-1zM600 129h1v1h-1zM601 129h1v1h-1zM602 129h1v1h-1zM600 115h1v1h-1zM601 115h1v1h-1zM602 115h1v1h-1zM599 116h1v1h-1zM603 116h1v1h-1zM598 117h1v1h-1zM604 117h1v1h-1zM598 118h1v1h-1zM604 118h1v1h-1zM598 119h1v1h-1zM604 119h1v1h-1zM599 120h1v1h-1zM603 120h1v1h-1zM600 121h1v1h-1zM601 121h1v1h-1zM602 121h1v1h-1zM600 106h1v1h-1zM601 106h1v1h-1zM602 106h1v1h-1zM599 107h1v1h-1zM603 107h1v1h-1zM598 108h1v1h-1zM604 108h1v1h-1zM598 109h1v1h-1zM604 109h1v1h-1zM598 110h1v1h-1zM604 110h1v1h-1zM599 111h1v1h-1zM603 111h1v1h-1zM600 112h1v1h-1zM601 112h1v1h-1zM602 112h1v1h-1zM617 115h1v1h-1zM618 115h1v1h-1zM619 115h1v1h-1zM616 116h1v1h-1zM620 116h1v1h-1zM615 117h1v1h-1zM621 117h1v1h-1zM615 118h1v1h-1zM621 118h1v1h-1zM615 119h1v1h-1zM621 119h1v1h-1zM616 120h1v1h-1zM620 120h1v1h-1zM617 121h1v1h-1zM618 121h1v1h-1zM619 121h1v1h-1zM617 106h1v1h-1zM618 106h1v1h-1zM619 106h1v1h-1zM616 107h1v1h-1zM620 107h1v1h-1zM615 108h1v1h-1zM621 108h1v1h-1zM615 109h1v1h-1zM621 109h1v1h-1zM615 110h1v1h-1zM621 110h1v1h-1zM616 111h1v1h-1zM620 111h1v1h-1zM617 112h1v1h-1zM618 112h1v1h-1zM619 112h1v1h-1zM617 97h1v1h-1zM618 97h1v1h-1zM619 97h1v1h-1zM616 98h1v1h-1zM620 98h1v1h-1zM615 99h1v1h-1zM621 99h1v1h-1zM615 100h1v1h-1zM621 100h1v1h-1zM615 101h1v1h-1zM621 101h1v1h-1zM616 102h1v1h-1zM620 102h1v1h-1zM617 103h1v1h-1zM618 103h1v1h-1zM619 103h1v1h-1zM617 88h1v1h-1zM618 88h1v1h-1zM619 88h1v1h-1zM616 89h1v1h-1zM620 89h1v1h-1zM615 90h1v1h-1zM621 90h1v1h-1zM615 91h1v1h-1zM621 91h1v1h-1zM615 92h1v1h-1zM621 92h1v1h-1zM616 93h1v1h-1zM620 93h1v1h-1zM617 94h1v1h-1zM618 94h1v1h-1zM619 94h1v1h-1zM617 80h1v1h-1zM618 80h1v1h-1zM619 80h1v1h-1zM616 81h1v1h-1zM620 81h1v1h-1zM615 82h1v1h-1zM621 82h1v1h-1zM615 83h1v1h-1zM621 83h1v1h-1zM615 84h1v1h-1zM621 84h1v1h-1zM616 85h1v1h-1zM620 85h1v1h-1zM617 86h1v1h-1zM618 86h1v1h-1zM619 86h1v1h-1zM635 132h1v1h-1zM636 132h1v1h-1zM637 132h1v1h-1zM634 133h1v1h-1zM638 133h1v1h-1zM633 134h1v1h-1zM639 134h1v1h-1zM633 135h1v1h-1zM639 135h1v1h-1zM633 136h1v1h-1zM639 136h1v1h-1zM634 137h1v1h-1zM638 137h1v1h-1zM635 138h1v1h-1zM636 138h1v1h-1zM637 138h1v1h-1zM635 123h1v1h-1zM636 123h1v1h-1zM637 123h1v1h-1zM634 124h1v1h-1zM638 124h1v1h-1zM633 125h1v1h-1zM639 125h1v1h-1zM633 126h1v1h-1zM639 126h1v1h-1zM633 127h1v1h-1zM639 127h1v1h-1zM634 128h1v1h-1zM638 128h1v1h-1zM635 129h1v1h-1zM636 129h1v1h-1zM637 129h1v1h-1zM635 115h1v1h-1zM636 115h1v1h-1zM637 115h1v1h-1zM634 116h1v1h-1zM638 116h1v1h-1zM633 117h1v1h-1zM639 117h1v1h-1zM633 118h1v1h-1zM639 118h1v1h-1zM633 119h1v1h-1zM639 119h1v1h-1zM634 120h1v1h-1zM638 120h1v1h-1zM635 121h1v1h-1zM636 121h1v1h-1zM637 121h1v1h-1zM635 97h1v1h-1zM636 97h1v1h-1zM637 97h1v1h-1zM634 98h1v1h-1zM638 98h1v1h-1zM633 99h1v1h-1zM639 99h1v1h-1zM633 100h1v1h-1zM639 100h1v1h-1zM633 101h1v1h-1zM639 101h1v1h-1zM634 102h1v1h-1zM638 102h1v1h-1zM635 103h1v1h-1zM636 103h1v1h-1zM637 103h1v1h-1zM635 88h1v1h-1zM636 88h1v1h-1zM637 88h1v1h-1zM634 89h1v1h-1zM638 89h1v1h-1zM633 90h1v1h-1zM639 90h1v1h-1zM633 91h1v1h-1zM639 91h1v1h-1zM633 92h1v1h-1zM639 92h1v1h-1zM634 93h1v1h-1zM638 93h1v1h-1zM635 94h1v1h-1zM636 94h1v1h-1zM637 94h1v1h-1zM635 80h1v1h-1zM636 80h1v1h-1zM637 80h1v1h-1zM634 81h1v1h-1zM638 81h1v1h-1zM633 82h1v1h-1zM639 82h1v1h-1zM633 83h1v1h-1zM639 83h1v1h-1zM633 84h1v1h-1zM639 84h1v1h-1zM634 85h1v1h-1zM638 85h1v1h-1zM635 86h1v1h-1zM636 86h1v1h-1zM637 86h1v1h-1zM635 71h1v1h-1zM636 71h1v1h-1zM637 71h1v1h-1zM634 72h1v1h-1zM638 72h1v1h-1zM633 73h1v1h-1zM639 73h1v1h-1zM633 74h1v1h-1zM639 74h1v1h-1zM633 75h1v1h-1zM639 75h1v1h-1zM634 76h1v1h-1zM638 76h1v1h-1zM635 77h1v1h-1zM636 77h1v1h-1zM637 77h1v1h-1zM652 237h1v1h-1zM653 237h1v1h-1zM654 237h1v1h-1zM651 238h1v1h-1zM655 238h1v1h-1zM650 239h1v1h-1zM656 239h1v1h-1zM650 240h1v1h-1zM656 240h1v1h-1zM650 241h1v1h-1zM656 241h1v1h-1zM651 242h1v1h-1zM655 242h1v1h-1zM652 243h1v1h-1zM653 243h1v1h-1zM654 243h1v1h-1zM652 228h1v1h-1zM653 228h1v1h-1zM654 228h1v1h-1zM651 229h1v1h-1zM655 229h1v1h-1zM650 230h1v1h-1zM656 230h1v1h-1zM650 231h1v1h-1zM656 231h1v1h-1zM650 232h1v1h-1zM656 232h1v1h-1zM651 233h1v1h-1zM655 233h1v1h-1zM652 234h1v1h-1zM653 234h1v1h-1zM654 234h1v1h-1zM652 219h1v1h-1zM653 219h1v1h-1zM654 219h1v1h-1zM651 220h1v1h-1zM655 220h1v1h-1zM650 221h1v1h-1zM656 221h1v1h-1zM650 222h1v1h-1zM656 222h1v1h-1zM650 223h1v1h-1zM656 223h1v1h-1zM651 224h1v1h-1zM655 224h1v1h-1zM652 225h1v1h-1zM653 225h1v1h-1zM654 225h1v1h-1zM652 202h1v1h-1zM653 202h1v1h-1zM654 202h1v1h-1zM651 203h1v1h-1zM655 203h1v1h-1zM650 204h1v1h-1zM656 204h1v1h-1zM650 205h1v1h-1zM656 205h1v1h-1zM650 206h1v1h-1zM656 206h1v1h-1zM651 207h1v1h-1zM655 207h1v1h-1zM652 208h1v1h-1zM653 208h1v1h-1zM654 208h1v1h-1zM652 193h1v1h-1zM653 193h1v1h-1zM654 193h1v1h-1zM651 194h1v1h-1zM655 194h1v1h-1zM650 195h1v1h-1zM656 195h1v1h-1zM650 196h1v1h-1zM656 196h1v1h-1zM650 197h1v1h-1zM656 197h1v1h-1zM651 198h1v1h-1zM655 198h1v1h-1zM652 199h1v1h-1zM653 199h1v1h-1zM654 199h1v1h-1zM652 184h1v1h-1zM653 184h1v1h-1zM654 184h1v1h-1zM651 185h1v1h-1zM655 185h1v1h-1zM650 186h1v1h-1zM656 186h1v1h-1zM650 187h1v1h-1zM656 187h1v1h-1zM650 188h1v1h-1zM656 188h1v1h-1zM651 189h1v1h-1zM655 189h1v1h-1zM652 190h1v1h-1zM653 190h1v1h-1zM654 190h1v1h-1zM652 167h1v1h-1zM653 167h1v1h-1zM654 167h1v1h-1zM651 168h1v1h-1zM655 168h1v1h-1zM650 169h1v1h-1zM656 169h1v1h-1zM650 170h1v1h-1zM656 170h1v1h-1zM650 171h1v1h-1zM656 171h1v1h-1zM651 172h1v1h-1zM655 172h1v1h-1zM652 173h1v1h-1zM653 173h1v1h-1zM654 173h1v1h-1zM652 158h1v1h-1zM653 158h1v1h-1zM654 158h1v1h-1zM651 159h1v1h-1zM655 159h1v1h-1zM650 160h1v1h-1zM656 160h1v1h-1zM650 161h1v1h-1zM656 161h1v1h-1zM650 162h1v1h-1zM656 162h1v1h-1zM651 163h1v1h-1zM655 163h1v1h-1zM652 164h1v1h-1zM653 164h1v1h-1zM654 164h1v1h-1zM652 150h1v1h-1zM653 150h1v1h-1zM654 150h1v1h-1zM651 151h1v1h-1zM655 151h1v1h-1zM650 152h1v1h-1zM656 152h1v1h-1zM650 153h1v1h-1zM656 153h1v1h-1zM650 154h1v1h-1zM656 154h1v1h-1zM651 155h1v1h-1zM655 155h1v1h-1zM652 156h1v1h-1zM653 156h1v1h-1zM654 156h1v1h-1zM652 141h1v1h-1zM653 141h1v1h-1zM654 141h1v1h-1zM651 142h1v1h-1zM655 142h1v1h-1zM650 143h1v1h-1zM656 143h1v1h-1zM650 144h1v1h-1zM656 144h1v1h-1zM650 145h1v1h-1zM656 145h1v1h-1zM651 146h1v1h-1zM655 146h1v1h-1zM652 147h1v1h-1zM653 147h1v1h-1zM654 147h1v1h-1zM652 132h1v1h-1zM653 132h1v1h-1zM654 132h1v1h-1zM651 133h1v1h-1zM655 133h1v1h-1zM650 134h1v1h-1zM656 134h1v1h-1zM650 135h1v1h-1zM656 135h1v1h-1zM650 136h1v1h-1zM656 136h1v1h-1zM651 137h1v1h-1zM655 137h1v1h-1zM652 138h1v1h-1zM653 138h1v1h-1zM654 138h1v1h-1zM652 123h1v1h-1zM653 123h1v1h-1zM654 123h1v1h-1zM651 124h1v1h-1zM655 124h1v1h-1zM650 125h1v1h-1zM656 125h1v1h-1zM650 126h1v1h-1zM656 126h1v1h-1zM650 127h1v1h-1zM656 127h1v1h-1zM651 128h1v1h-1zM655 128h1v1h-1zM652 129h1v1h-1zM653 129h1v1h-1zM654 129h1v1h-1zM652 115h1v1h-1zM653 115h1v1h-1zM654 115h1v1h-1zM651 116h1v1h-1zM655 116h1v1h-1zM650 117h1v1h-1zM656 117h1v1h-1zM650 118h1v1h-1zM656 118h1v1h-1zM650 119h1v1h-1zM656 119h1v1h-1zM651 120h1v1h-1zM655 120h1v1h-1zM652 121h1v1h-1zM653 121h1v1h-1zM654 121h1v1h-1zM652 106h1v1h-1zM653 106h1v1h-1zM654 106h1v1h-1zM651 107h1v1h-1zM655 107h1v1h-1zM650 108h1v1h-1zM656 108h1v1h-1zM650 109h1v1h-1zM656 109h1v1h-1zM650 110h1v1h-1zM656 110h1v1h-1zM651 111h1v1h-1zM655 111h1v1h-1zM652 112h1v1h-1zM653 112h1v1h-1zM654 112h1v1h-1zM669 88h1v1h-1zM670 88h1v1h-1zM671 88h1v1h-1zM668 89h1v1h-1zM672 89h1v1h-1zM667 90h1v1h-1zM673 90h1v1h-1zM667 91h1v1h-1zM673 91h1v1h-1zM667 92h1v1h-1zM673 92h1v1h-1zM668 93h1v1h-1zM672 93h1v1h-1zM669 94h1v1h-1zM670 94h1v1h-1zM671 94h1v1h-1zM669 80h1v1h-1zM670 80h1v1h-1zM671 80h1v1h-1zM668 81h1v1h-1zM672 81h1v1h-1zM667 82h1v1h-1zM673 82h1v1h-1zM667 83h1v1h-1zM673 83h1v1h-1zM667 84h1v1h-1zM673 84h1v1h-1zM668 85h1v1h-1zM672 85h1v1h-1zM669 86h1v1h-1zM670 86h1v1h-1zM671 86h1v1h-1zM669 71h1v1h-1zM670 71h1v1h-1zM671 71h1v1h-1zM668 72h1v1h-1zM672 72h1v1h-1zM667 73h1v1h-1zM673 73h1v1h-1zM667 74h1v1h-1zM673 74h1v1h-1zM667 75h1v1h-1zM673 75h1v1h-1zM668 76h1v1h-1zM672 76h1v1h-1zM669 77h1v1h-1zM670 77h1v1h-1zM671 77h1v1h-1z" fill="#ff0000" shape-rendering="crispEdges"/>
<path d="M669 123h1v1h-1zM670 123h1v1h-1zM671 123h1v1h-1zM668 124h1v1h-1zM672 124h1v1h-1zM667 125h1v1h-1zM673 125h1v1h-1zM667 126h1v1h-1zM673 126h1v1h-1zM667 127h1v1h-1zM673 127h1v1h-1zM668 128h1v1h-1zM672 128h1v1h-1zM669 129h1v1h-1zM670 129h1v1h-1zM671 129h1v1h-1zM669 115h1v1h-1zM670 115h1v1h-1zM671 115h1v1h-1zM668 116h1v1h-1zM672 116h1v1h-1zM667 117h1v1h-1zM673 117h1v1h-1zM667 118h1v1h-1zM673 118h1v1h-1zM667 119h1v1h-1zM673 119h1v1h-1zM668 120h1v1h-1zM672 120h1v1h-1zM669 121h1v1h-1zM670 121h1v1h-1zM671 121h1v1h-1zM669 106h1v1h-1zM670 106h1v1h-1zM671 106h1v1h-1zM668 107h1v1h-1zM672 107h1v1h-1zM667 108h1v1h-1zM673 108h1v1h-1zM667 109h1v1h-1zM673 109h1v1h-1zM667 110h1v1h-1zM673 110h1v1h-1zM668 111h1v1h-1zM672 111h1v1h-1zM669 112h1v1h-1zM670 112h1v1h-1zM671 112h1v1h-1zM669 97h1v1h-1zM670 97h1v1h-1zM671 97h1v1h-1zM668 98h1v1h-1zM672 98h1v1h-1zM667 99h1v1h-1zM673 99h1v1h-1zM667 100h1v1h-1zM673 100h1v1h-1zM667 101h1v1h-1zM673 101h1v1h-1zM668 102h1v1h-1zM672 102h1v1h-1zM669 103h1v1h-1zM670 103h1v1h-1zM671 103h1v1h-1z" fill="#00c000" shape-rendering="crispEdges"/>
<g font-family='"Liberation Sans", sans-serif' font-size="8.5" fill="#000" text-anchor="middle"><text x="104.0" y="174">1</text><text x="121.5" y="165">2</text><text x="147.7" y="209">3</text><text x="156.4" y="192">4</text><text x="173.8" y="165">5</text><text x="191.3" y="192">7</text><text x="208.7" y="261">8</text><text x="217.4" y="235">A</text><text x="217.4" y="200">9</text><text x="226.2" y="218">B</text><text x="234.9" y="157">C</text><text x="252.3" y="279">2</text><text x="252.3" y="122">1</text><text x="261.1" y="244">3</text><text x="261.1" y="200">4</text><text x="261.1" y="165">5</text><text x="278.5" y="218">6</text><text x="296.0" y="253">7</text><text x="304.7" y="235">8</text><text x="330.9" y="200">9</text><text x="357.0" y="279">A</text><text x="365.8" y="218">B</text><text x="383.2" y="244">C</text><text x="400.6" y="253">1</text><text x="400.6" y="165">2</text><text x="409.4" y="200">3</text><text x="418.1" y="279">4</text><text x="426.8" y="270">7</text><text x="426.8" y="165">6</text><text x="435.5" y="287">8</text><text x="444.3" y="314">9</text><text x="453.0" y="296">A</text><text x="453.0" y="157">B</text><text x="461.7" y="165">C</text><text x="470.4" y="209">1</text><text x="479.2" y="226">2</text><text x="487.9" y="235">3</text><text x="496.6" y="192">6</text><text x="496.6" y="148">5</text><text x="505.3" y="322">7</text><text x="522.8" y="392">8</text><text x="549.0" y="209">9</text><text x="557.7" y="383">A</text><text x="557.7" y="183">B</text><text x="566.4" y="340">2</text><text x="566.4" y="253">1</text><text x="566.4" y="139">C</text><text x="575.1" y="348">3</text><text x="575.1" y="200">4</text><text x="575.1" y="104">5</text><text x="592.6" y="157">6</text><text x="601.3" y="104">7</text><text x="610.0" y="78">8</text><text x="618.7" y="78">9</text><text x="627.5" y="113">A</text><text x="627.5" y="69">B</text><text x="636.2" y="113">3</text><text x="636.2" y="69">2</text><text x="644.9" y="130">4</text><text x="653.6" y="218">8</text><text x="653.6" y="183">7</text><text x="653.6" y="104">5</text><text x="662.4" y="235">9</text><text x="662.4" y="183">A</text><text x="662.4" y="157">B</text><text x="662.4" y="130">C</text><text x="662.4" y="122">1</text><text x="662.4" y="104">2</text><text x="662.4" y="61">3</text><text x="671.1" y="69">4</text></g>
<line x1="108" y1="87" x2="169" y2="149" stroke="#000" stroke-width="1" stroke-dasharray="4.3 4.3" shape-rendering="crispEdges"/>
<line x1="265" y1="131" x2="309" y2="175" stroke="#000" stroke-width="1" stroke-dasharray="4.3 4.3" shape-rendering="crispEdges"/>
<line x1="422" y1="149" x2="448" y2="175" stroke="#000" stroke-width="1" stroke-dasharray="4.3 4.3" shape-rendering="crispEdges"/>
<line x1="571" y1="358" x2="675" y2="253" stroke="#000" stroke-width="1" stroke-dasharray="4.3 4.3" shape-rendering="crispEdges"/></svg>

<svg width="695" height="514" shape-rendering="crispEdges"><path d="M430 70h3v1h-3zM431 69h1v3h-1z" fill="#fff"/><path d="M431 70h1v1h-1z" fill="#000"/></svg>
<!-- tooltip -->
<div class="a" style="left:448px;top:73px;width:83px;height:32px;background:#FFFFE1;border:1px solid #000"></div>
<div class="lbl" style="left:450px;top:75px;transform:scaleX(0.89)">Value: 86,00%</div>
<div class="lbl" style="left:450px;top:88px;transform:scaleX(0.865)">Box Size: 2,00%</div>

<!-- frame strips -->
<div class="a" style="left:50px;top:24px;width:1px;height:443px;background:#FFFFFF"></div>
<div class="a" style="left:51px;top:24px;width:1px;height:443px;background:#F1EFE2"></div>
<div class="a" style="left:52px;top:24px;width:2px;height:443px;background:#ECE9D8"></div>
<div class="a" style="left:54px;top:24px;width:1px;height:438px;background:#ACA899"></div>
<div class="a" style="left:55px;top:25px;width:1px;height:437px;background:#716F64"></div>

<!-- scrollbar -->
<div class="a" style="left:56px;top:445px;width:639px;height:17px;background:linear-gradient(#EEEDE5,#FAF9F4 40%,#FDFDFA 70%,#E9E7DD)"></div>
<div class="a" style="left:56px;top:446px;width:16px;height:16px;border-radius:2px;border:1px solid #fff;background:linear-gradient(135deg,#D6E2FD,#B4CAF9)"></div>
<svg width="695" height="514"><path d="M66 449.5L61.5 454L66 458.5" stroke="#4D6185" stroke-width="2.2" fill="none"/></svg>
<div class="a" style="left:73px;top:446px;width:17px;height:16px;border-radius:2px;border:1px solid #fff;background:linear-gradient(135deg,#D6E2FD,#B4CAF9)"></div>
<svg width="695" height="514"><path d="M78.5 450V458M80.5 450V458M82.5 450V458M84.5 450V458" stroke="#EEF4FE" stroke-width="1"/><path d="M79.5 450V458M81.5 450V458M83.5 450V458M85.5 450V458" stroke="#8CAAE6" stroke-width="1"/></svg>
<!-- bottom frame -->
<div class="a" style="left:50px;top:462px;width:645px;height:1px;background:#FFFFFF"></div>
<div class="a" style="left:51px;top:463px;width:644px;height:3px;background:#ECE9D8"></div>
<div class="a" style="left:56px;top:466px;width:639px;height:1px;background:#ACA899"></div>

<!-- bottom axis area -->
<div class="a" style="left:0;top:467px;width:695px;height:47px;background:#fff"></div>
<div class="a" style="left:0;top:462px;width:50px;height:5px;background:#fff"></div>
<svg width="695" height="514"><path d="M51 466.5L56.5 466.5L8 515L2.5 515Z" fill="#E4E0CE"/><path d="M56 467.5L8 515.5" stroke="#CFCBB6" stroke-width="0.8"/></svg>
<svg width="695" height="514"><path d="M56.5 467V476 M100.5 467V476 M143.5 467V476 M187.5 467V476 M230.5 467V476 M274.5 467V476 M318.5 467V476 M361.5 467V476 M405.5 467V476 M448.5 467V476 M492.5 467V476 M536.5 467V476 M579.5 467V476 M623.5 467V476 M667.5 467V476" stroke="#808080" stroke-width="1" shape-rendering="crispEdges"/><path d="M65.5 467V471 M73.5 467V471 M82.5 467V471 M91.5 467V471 M108.5 467V471 M117.5 467V471 M126.5 467V471 M134.5 467V471 M152.5 467V471 M161.5 467V471 M169.5 467V471 M178.5 467V471 M195.5 467V471 M204.5 467V471 M213.5 467V471 M222.5 467V471 M239.5 467V471 M248.5 467V471 M257.5 467V471 M265.5 467V471 M283.5 467V471 M291.5 467V471 M300.5 467V471 M309.5 467V471 M326.5 467V471 M335.5 467V471 M344.5 467V471 M353.5 467V471 M370.5 467V471 M379.5 467V471 M387.5 467V471 M396.5 467V471 M414.5 467V471 M422.5 467V471 M431.5 467V471 M440.5 467V471 M457.5 467V471 M466.5 467V471 M475.5 467V471 M483.5 467V471 M501.5 467V471 M510.5 467V471 M518.5 467V471 M527.5 467V471 M544.5 467V471 M553.5 467V471 M562.5 467V471 M571.5 467V471 M588.5 467V471 M597.5 467V471 M606.5 467V471 M614.5 467V471 M632.5 467V471 M640.5 467V471 M649.5 467V471 M658.5 467V471 M675.5 467V471 M684.5 467V471 M693.5 467V471" stroke="#a8a8a8" stroke-width="1" shape-rendering="crispEdges"/><g font-family='"Liberation Sans", sans-serif' font-size="10" fill="#000" text-anchor="middle"><text x="410.0" y="485">2</text><text x="410.0" y="494">0</text><text x="410.0" y="503">0</text><text x="410.0" y="512">1</text><text x="479.5" y="485">2</text><text x="479.5" y="494">0</text><text x="479.5" y="503">0</text><text x="479.5" y="512">2</text><text x="575.5" y="485">2</text><text x="575.5" y="494">0</text><text x="575.5" y="503">0</text><text x="575.5" y="512">3</text><text x="645.0" y="485">2</text><text x="645.0" y="494">0</text><text x="645.0" y="503">0</text><text x="645.0" y="512">4</text><text x="671.5" y="485">2</text><text x="671.5" y="494">0</text><text x="671.5" y="503">0</text><text x="671.5" y="512">5</text></g></svg>
<div class="lbl s11" style="left:6px;top:469px">Value</div>
<div class="lbl s11" style="left:6px;top:481px">(%)</div>
<div class="lbl s11" style="left:30px;top:502px">Year</div>

<!-- toolbox window -->
<div class="a" style="left:97px;top:411px;width:253px;height:103px;background:#ECE9D8;border-left:3px solid #6479D8;border-right:3px solid #6479D8"></div>
<div class="a" style="left:97px;top:411px;width:253px;height:21px;background:linear-gradient(#9EB4EF,#7E9BE6 20%,#7895E4 60%,#7F9CE7);border-radius:2px 2px 0 0"></div>
<div class="lbl" style="left:100px;top:416px;font-weight:bold;transform:scaleX(0.98);color:#D8E4F8">Chart Toolbox</div>
<div class="a" style="left:332px;top:416px;width:13px;height:13px;border:1px solid #E4EAF8;border-radius:2px;background:#B8606C"></div>
<svg width="695" height="514"><path d="M335.5 419.5L341.5 425.5M341.5 419.5L335.5 425.5" stroke="#fff" stroke-width="2"/></svg>
<!-- tabs -->
<div class="a" style="left:100px;top:452px;width:245px;height:1px;background:#fff"></div>
<div class="a" style="left:100px;top:435px;width:36px;height:17px;border-top:1px solid #fff;border-left:1px solid #fff;border-right:1px solid #fff"></div>
<div class="lbl" style="left:107px;top:438px;transform:scaleX(0.87)"><span class="u">C</span>hart</div>
<div class="a" style="left:136px;top:433px;width:42px;height:20px;background:#ECE9D8;border-top:1px solid #fff;border-left:1px solid #fff"></div>
<div class="a" style="left:177px;top:434px;width:2px;height:18px;background:linear-gradient(to right,#404040,#000);border-top-right-radius:2px"></div>
<div class="lbl" style="left:146px;top:437px;transform:scaleX(0.92)"><span class="u">D</span>raw</div>
<div class="a" style="left:178px;top:435px;width:64px;height:1px;background:#fff"></div>
<div class="a" style="left:202px;top:436px;width:2px;height:16px;background:linear-gradient(to right,#404040,#000);border-top-right-radius:2px"></div>
<div class="lbl" style="left:185px;top:438px;transform:scaleX(0.9)"><span class="u">R</span>S</div>
<div class="a" style="left:240px;top:436px;width:2px;height:16px;background:linear-gradient(to right,#404040,#000);border-top-right-radius:2px"></div>
<div class="lbl" style="left:215px;top:438px;transform:scaleX(0.87)"><span class="u">D</span>ata</div>
<div class="a" style="left:243px;top:435px;width:71px;height:1px;background:#fff"></div>
<div class="a" style="left:269px;top:436px;width:2px;height:16px;background:linear-gradient(to right,#404040,#000);border-top-right-radius:2px"></div>
<div class="lbl" style="left:250px;top:438px;transform:scaleX(0.87)"><span class="u">M</span>A</div>
<div class="a" style="left:312px;top:436px;width:2px;height:16px;background:linear-gradient(to right,#404040,#000);border-top-right-radius:2px"></div>
<div class="lbl" style="left:279px;top:438px;transform:scaleX(0.93)"><span class="u">N</span>otes</div>

<div class="lbl" style="left:104px;top:471px;transform:scaleX(0.875)">Reversal <span class="u">B</span>oxes:</div>
<div class="combo" style="left:209px;top:468px;width:131px;height:21px"><div class="in"></div>
 <div class="txt" style="left:3px;top:2px;transform:scaleX(0.905)">(Default: 3)</div>
 <div class="dbtn" style="top:1px;right:1px;bottom:1px;width:17px"><div class="in2"></div><svg width="9" height="6" style="left:4px;top:6px"><path d="M0 0h7v1h-1v1h-1v1h-1v1h-1v-1h-1v-1h-1v-1h-1z" fill="#000" shape-rendering="crispEdges"/></svg></div>
</div>
<div class="lbl" style="left:104px;top:492px;transform:scaleX(0.88)"><span class="u">B</span>ox Setting:</div>
<div class="combo" style="left:104px;top:509px;width:236px;height:21px"><div class="in"></div>
 <div class="dbtn" style="top:1px;right:1px;bottom:1px;width:17px"><div class="in2"></div></div>
</div>
</body></html>
